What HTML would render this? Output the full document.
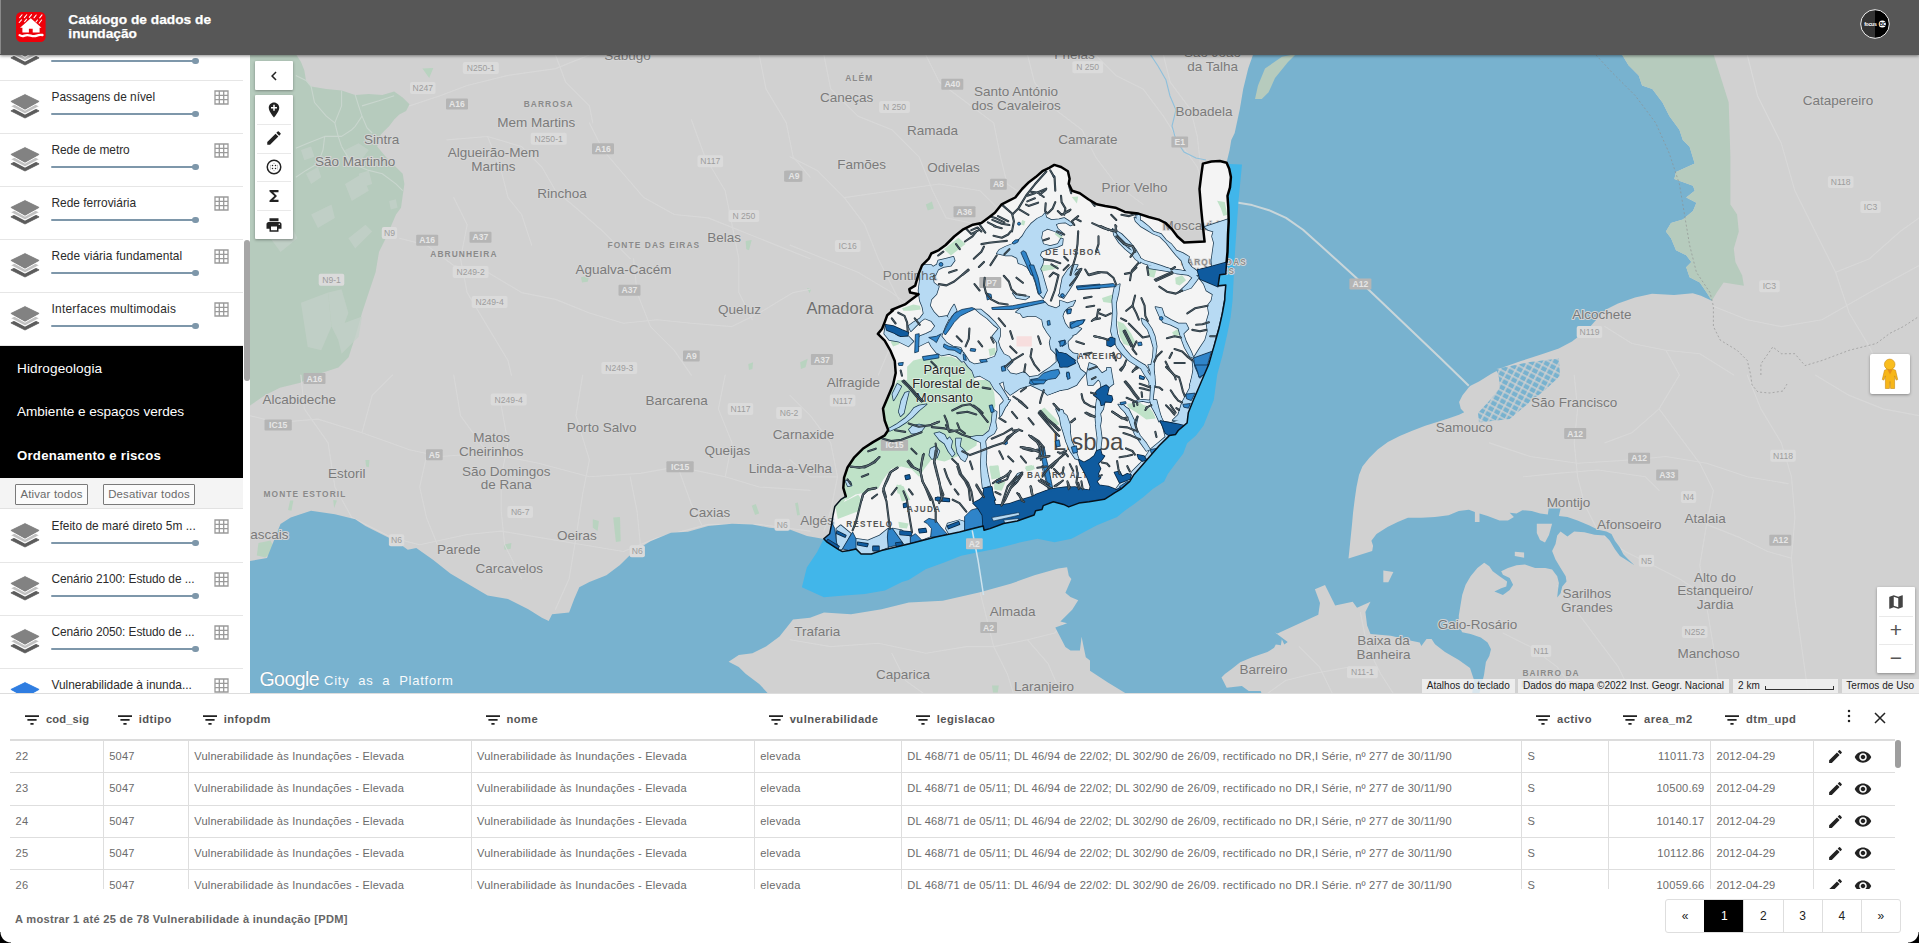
<!DOCTYPE html>
<html lang="pt">
<head>
<meta charset="utf-8">
<title>Catálogo de dados de inundação</title>
<style>
*{box-sizing:border-box;margin:0;padding:0}
html,body{width:1919px;height:943px;overflow:hidden;background:#fff;font-family:"Liberation Sans",sans-serif;}
body{position:relative}
#hdr{position:absolute;left:0;top:0;width:1919px;height:54.5px;background:#575757;z-index:20;box-shadow:0 1px 3px rgba(0,0,0,.45)}
#hdr .edge{position:absolute;left:0;top:0;width:1px;height:54px;background:#8a8a8a}
#logo{position:absolute;left:16.2px;top:11.7px;width:29.6px;height:30px}
#title{position:absolute;left:68.3px;top:13.4px;color:#fff;font-weight:bold;font-size:13.7px;line-height:14.1px;letter-spacing:.03px;-webkit-text-stroke:.25px #fff}
#avatar{position:absolute;left:1860px;top:9px;width:30px;height:30px}
/* sidebar */
#side{position:absolute;left:0;top:54px;width:243px;height:639px;background:#fff;overflow:hidden;z-index:5}
#sbar{position:absolute;left:243px;top:54px;width:7px;height:639px;background:#fff;z-index:5}
#sbar i{position:absolute;left:1px;top:186px;width:6px;height:141px;border-radius:3px;background:#a6a6a6}
.row{position:absolute;left:0;width:243px;height:53px;border-bottom:1px solid #e6e6e6;background:#fff}
.row .lay{position:absolute;left:10px;top:13.2px;width:30px;height:25px;overflow:visible}
.row .nm{position:absolute;left:51.5px;top:9px;font-size:11.9px;line-height:15px;color:#2b2b2b;white-space:nowrap;letter-spacing:0}
.row .sl{position:absolute;left:51px;top:32px;width:144px;height:2px;background:#7e97aa;border-radius:1px}
.row .sl:after{content:"";position:absolute;right:-3.5px;top:-2.2px;width:6.4px;height:6.4px;border-radius:50%;background:#7e97aa}
.row .gr{position:absolute;left:214px;top:9px;width:15px;height:15px}
#cats{position:absolute;left:0;top:292px;width:243px;height:132px;background:#000;color:#fff}
#cats div{position:absolute;left:17px;font-size:13.6px;line-height:16px;white-space:nowrap;letter-spacing:.15px}
#btns{position:absolute;left:0;top:424px;width:243px;height:31px;background:#f4f4f4;border-bottom:1px solid #e2e2e2}
#btns span{position:absolute;top:5.5px;height:21.5px;border:1px solid #7a7a7a;border-radius:1px;font-size:11.4px;line-height:19px;color:#6a6a6a;text-align:center;background:#fbfbfb;letter-spacing:.17px}
/* map */
#map{position:absolute;left:250px;top:54px;width:1669px;height:639px;background:#cfcfcf;overflow:hidden}
/* table */
#tbl{position:absolute;left:0;top:693px;width:1919px;height:250px;background:#fff;border-top:1px solid #ddd;z-index:10}
.th{position:absolute;top:12px;height:26px;white-space:nowrap}
.th .fi{position:absolute;left:0;top:8.5px;width:14px;height:10px}
.th span{position:absolute;left:21px;top:5.5px;font-size:11.2px;line-height:14px;font-weight:bold;color:#555;letter-spacing:.45px}
.dots{position:absolute;left:1847px;top:15px;width:4px;height:14px}
.cls{position:absolute;left:1874px;top:17.5px;width:12px;height:12px}
#tb{position:absolute;left:10px;top:45px;width:1885px;height:150px;border-top:2px solid #dcdcdc;overflow:hidden}
.tr{position:absolute;left:0;width:1885px;height:32.33px;border-bottom:1px solid #dedede}
.td{position:absolute;top:0;height:32.33px;border-left:1px solid #dedede;padding:0 5.5px;font-size:11.1px;line-height:30px;color:#6b6b6b;white-space:nowrap;overflow:hidden;letter-spacing:.22px}
.tr .td:first-child{border-left:none}
.td.r{text-align:right}
.pen{position:absolute;left:13px;top:7px;width:17px;height:17px}
.eye{position:absolute;left:40px;top:6.5px;width:18px;height:18px}
#tsb{position:absolute;left:1895px;top:46px;width:6px;height:150px}
#tsb i{position:absolute;left:0;top:0;width:6px;height:28px;border-radius:3px;background:#9e9e9e}
#info{position:absolute;left:15px;top:218px;font-size:11.1px;line-height:14px;font-weight:bold;color:#666;letter-spacing:.3px;white-space:nowrap}
#pg{position:absolute;left:1665px;top:204.5px;width:236px;height:34px;border:1px solid #dedede;border-radius:3px;display:flex;overflow:hidden}
#pg span{flex:1;border-left:1px solid #dedede;font-size:12px;line-height:32px;text-align:center;color:#222}
#pg span:first-child{border-left:none}
#pg span.on{background:#000;color:#fff;border-color:#000}
.cnr{position:absolute;bottom:0;width:11px;height:11px;background:radial-gradient(circle at 100% 0,rgba(0,0,0,0) 10px,#000 11px)}
.cnr.r{background:radial-gradient(circle at 0 0,rgba(0,0,0,0) 10px,#000 11px)}

.mbtn{position:absolute;background:#fff;box-shadow:0 1px 3px rgba(0,0,0,.35);border-radius:1px}
.mbtn i{position:absolute;width:18px;height:18px;display:block}
.mbtn i svg{width:18px;height:18px;display:block}
.mbtn b{position:absolute;left:2px;right:2px;height:1px;background:#e9e9e9}
.mbtn .zp{position:absolute;left:0;width:38px;height:28.700px;text-align:center;font-size:21px;line-height:27px;color:#555;font-family:"Liberation Sans",sans-serif}
.attr{position:absolute;top:625px;height:14px;background:rgba(245,245,245,.78);font-size:10px;line-height:14px;color:#222;text-align:center;white-space:nowrap;letter-spacing:.05px}
.attr u{display:inline-block;width:69px;height:4px;border:1px solid #333;border-top:none;margin-left:2px;vertical-align:-1px}

</style>
</head>
<body>
<div id="hdr"><div class="edge"></div>
<svg id="logo" viewBox="0 0 29.6 30"><rect x="0" y="0" width="29.6" height="30" rx="5.2" fill="#ee0009"/>
<g stroke="#fff" stroke-width="1.05" stroke-linecap="round"><path d="M6 2.700L3.700 5.600M10.700 2.700L8.400 5.600M15.500 2.600L13.300 5.400M20.200 3L18 5.800M26 2.900L23.700 5.900M5.500 7.800L3.200 10.500M10.600 7.200L8.600 9.600M21.500 8L20 9.900M25.600 8L23.200 11.200"/></g>
<path d="M14.800 6.200L25.500 15.700H23.600V20.500H16.700V16.700H12.900V20.500H6.400V15.700H4.050Z" fill="#fff"/>
<path d="M3.600 23.100Q6 24.700 8.500 23.600T14.700 23.600T20.900 23.600T26.500 23" fill="none" stroke="#fff" stroke-width="2.3" stroke-linecap="round"/></svg>
<div id="title">Catálogo de dados de<br>inundação</div>
<svg id="avatar" viewBox="0 0 30 30"><defs><clipPath id="avc"><circle cx="15" cy="15" r="14.3"/></clipPath></defs>
<g clip-path="url(#avc)"><rect width="15" height="30" fill="#333"/><rect x="15" width="15" height="30" fill="#000"/></g>
<circle cx="15" cy="15" r="14.3" fill="none" stroke="#fff" stroke-width=".9"/>
<text x="4.2" y="16.6" font-size="5.2" font-weight="bold" fill="#fff" font-family="Liberation Sans, sans-serif" letter-spacing="-.3">focus</text>
<circle cx="22.3" cy="15" r="3.6" fill="#fff"/><text x="19.6" y="16.7" font-size="4.8" font-weight="bold" fill="#000" font-family="Liberation Sans, sans-serif" letter-spacing="-.4">BC</text></svg>
</div>

<div id="side">
<div class="row" style="top:-26px"><svg class="lay" viewBox="0 0 30 25"><path d="M15 9.6L.9 16.9 15 24 29.1 16.9z" fill="#5c5c5c" stroke="#5c5c5c" stroke-width=".8" stroke-linejoin="round"/><path d="M15 4.6L.2 12.2 15 20 29.8 12.2z" fill="#c2c2c2" stroke="#fff" stroke-width="1.2" stroke-linejoin="round"/><path d="M15 -.2L-.2 7.4 15 16 30.2 7.4z" fill="#828282" stroke="#fff" stroke-width="1.3" stroke-linejoin="round"/><path d="M15 .6L.9 7.4 15 15.2 29.1 7.4z" fill="#828282" stroke="#828282" stroke-width=".8" stroke-linejoin="round"/></svg><div class="nm" style="letter-spacing:0px"></div><div class="sl"></div><svg class="gr" viewBox="0 0 15 15"><path d="M1 1h13v13H1zM1 5.3h13M1 9.7h13M5.3 1v13M9.7 1v13" fill="none" stroke="#9a9a9a" stroke-width="1.3"/></svg></div>
<div class="row" style="top:27px"><svg class="lay" viewBox="0 0 30 25"><path d="M15 9.6L.9 16.9 15 24 29.1 16.9z" fill="#5c5c5c" stroke="#5c5c5c" stroke-width=".8" stroke-linejoin="round"/><path d="M15 4.6L.2 12.2 15 20 29.8 12.2z" fill="#c2c2c2" stroke="#fff" stroke-width="1.2" stroke-linejoin="round"/><path d="M15 -.2L-.2 7.4 15 16 30.2 7.4z" fill="#828282" stroke="#fff" stroke-width="1.3" stroke-linejoin="round"/><path d="M15 .6L.9 7.4 15 15.2 29.1 7.4z" fill="#828282" stroke="#828282" stroke-width=".8" stroke-linejoin="round"/></svg><div class="nm" style="letter-spacing:-0.01px">Passagens de nível</div><div class="sl"></div><svg class="gr" viewBox="0 0 15 15"><path d="M1 1h13v13H1zM1 5.3h13M1 9.7h13M5.3 1v13M9.7 1v13" fill="none" stroke="#9a9a9a" stroke-width="1.3"/></svg></div>
<div class="row" style="top:80px"><svg class="lay" viewBox="0 0 30 25"><path d="M15 9.6L.9 16.9 15 24 29.1 16.9z" fill="#5c5c5c" stroke="#5c5c5c" stroke-width=".8" stroke-linejoin="round"/><path d="M15 4.6L.2 12.2 15 20 29.8 12.2z" fill="#c2c2c2" stroke="#fff" stroke-width="1.2" stroke-linejoin="round"/><path d="M15 -.2L-.2 7.4 15 16 30.2 7.4z" fill="#828282" stroke="#fff" stroke-width="1.3" stroke-linejoin="round"/><path d="M15 .6L.9 7.4 15 15.2 29.1 7.4z" fill="#828282" stroke="#828282" stroke-width=".8" stroke-linejoin="round"/></svg><div class="nm" style="letter-spacing:-0.04px">Rede de metro</div><div class="sl"></div><svg class="gr" viewBox="0 0 15 15"><path d="M1 1h13v13H1zM1 5.3h13M1 9.7h13M5.3 1v13M9.7 1v13" fill="none" stroke="#9a9a9a" stroke-width="1.3"/></svg></div>
<div class="row" style="top:133px"><svg class="lay" viewBox="0 0 30 25"><path d="M15 9.6L.9 16.9 15 24 29.1 16.9z" fill="#5c5c5c" stroke="#5c5c5c" stroke-width=".8" stroke-linejoin="round"/><path d="M15 4.6L.2 12.2 15 20 29.8 12.2z" fill="#c2c2c2" stroke="#fff" stroke-width="1.2" stroke-linejoin="round"/><path d="M15 -.2L-.2 7.4 15 16 30.2 7.4z" fill="#828282" stroke="#fff" stroke-width="1.3" stroke-linejoin="round"/><path d="M15 .6L.9 7.4 15 15.2 29.1 7.4z" fill="#828282" stroke="#828282" stroke-width=".8" stroke-linejoin="round"/></svg><div class="nm" style="letter-spacing:0px">Rede ferroviária</div><div class="sl"></div><svg class="gr" viewBox="0 0 15 15"><path d="M1 1h13v13H1zM1 5.3h13M1 9.7h13M5.3 1v13M9.7 1v13" fill="none" stroke="#9a9a9a" stroke-width="1.3"/></svg></div>
<div class="row" style="top:186px"><svg class="lay" viewBox="0 0 30 25"><path d="M15 9.6L.9 16.9 15 24 29.1 16.9z" fill="#5c5c5c" stroke="#5c5c5c" stroke-width=".8" stroke-linejoin="round"/><path d="M15 4.6L.2 12.2 15 20 29.8 12.2z" fill="#c2c2c2" stroke="#fff" stroke-width="1.2" stroke-linejoin="round"/><path d="M15 -.2L-.2 7.4 15 16 30.2 7.4z" fill="#828282" stroke="#fff" stroke-width="1.3" stroke-linejoin="round"/><path d="M15 .6L.9 7.4 15 15.2 29.1 7.4z" fill="#828282" stroke="#828282" stroke-width=".8" stroke-linejoin="round"/></svg><div class="nm" style="letter-spacing:0.08px">Rede viária fundamental</div><div class="sl"></div><svg class="gr" viewBox="0 0 15 15"><path d="M1 1h13v13H1zM1 5.3h13M1 9.7h13M5.3 1v13M9.7 1v13" fill="none" stroke="#9a9a9a" stroke-width="1.3"/></svg></div>
<div class="row" style="top:239px"><svg class="lay" viewBox="0 0 30 25"><path d="M15 9.6L.9 16.9 15 24 29.1 16.9z" fill="#5c5c5c" stroke="#5c5c5c" stroke-width=".8" stroke-linejoin="round"/><path d="M15 4.6L.2 12.2 15 20 29.8 12.2z" fill="#c2c2c2" stroke="#fff" stroke-width="1.2" stroke-linejoin="round"/><path d="M15 -.2L-.2 7.4 15 16 30.2 7.4z" fill="#828282" stroke="#fff" stroke-width="1.3" stroke-linejoin="round"/><path d="M15 .6L.9 7.4 15 15.2 29.1 7.4z" fill="#828282" stroke="#828282" stroke-width=".8" stroke-linejoin="round"/></svg><div class="nm" style="letter-spacing:0.26px">Interfaces multimodais</div><div class="sl"></div><svg class="gr" viewBox="0 0 15 15"><path d="M1 1h13v13H1zM1 5.3h13M1 9.7h13M5.3 1v13M9.7 1v13" fill="none" stroke="#9a9a9a" stroke-width="1.3"/></svg></div>
<div class="row" style="top:456px"><svg class="lay" viewBox="0 0 30 25"><path d="M15 9.6L.9 16.9 15 24 29.1 16.9z" fill="#5c5c5c" stroke="#5c5c5c" stroke-width=".8" stroke-linejoin="round"/><path d="M15 4.6L.2 12.2 15 20 29.8 12.2z" fill="#c2c2c2" stroke="#fff" stroke-width="1.2" stroke-linejoin="round"/><path d="M15 -.2L-.2 7.4 15 16 30.2 7.4z" fill="#828282" stroke="#fff" stroke-width="1.3" stroke-linejoin="round"/><path d="M15 .6L.9 7.4 15 15.2 29.1 7.4z" fill="#828282" stroke="#828282" stroke-width=".8" stroke-linejoin="round"/></svg><div class="nm" style="letter-spacing:0.03px">Efeito de maré direto 5m ...</div><div class="sl"></div><svg class="gr" viewBox="0 0 15 15"><path d="M1 1h13v13H1zM1 5.3h13M1 9.7h13M5.3 1v13M9.7 1v13" fill="none" stroke="#9a9a9a" stroke-width="1.3"/></svg></div>
<div class="row" style="top:509px"><svg class="lay" viewBox="0 0 30 25"><path d="M15 9.6L.9 16.9 15 24 29.1 16.9z" fill="#5c5c5c" stroke="#5c5c5c" stroke-width=".8" stroke-linejoin="round"/><path d="M15 4.6L.2 12.2 15 20 29.8 12.2z" fill="#c2c2c2" stroke="#fff" stroke-width="1.2" stroke-linejoin="round"/><path d="M15 -.2L-.2 7.4 15 16 30.2 7.4z" fill="#828282" stroke="#fff" stroke-width="1.3" stroke-linejoin="round"/><path d="M15 .6L.9 7.4 15 15.2 29.1 7.4z" fill="#828282" stroke="#828282" stroke-width=".8" stroke-linejoin="round"/></svg><div class="nm" style="letter-spacing:-0.07px">Cenário 2100: Estudo de ...</div><div class="sl"></div><svg class="gr" viewBox="0 0 15 15"><path d="M1 1h13v13H1zM1 5.3h13M1 9.7h13M5.3 1v13M9.7 1v13" fill="none" stroke="#9a9a9a" stroke-width="1.3"/></svg></div>
<div class="row" style="top:562px"><svg class="lay" viewBox="0 0 30 25"><path d="M15 9.6L.9 16.9 15 24 29.1 16.9z" fill="#5c5c5c" stroke="#5c5c5c" stroke-width=".8" stroke-linejoin="round"/><path d="M15 4.6L.2 12.2 15 20 29.8 12.2z" fill="#c2c2c2" stroke="#fff" stroke-width="1.2" stroke-linejoin="round"/><path d="M15 -.2L-.2 7.4 15 16 30.2 7.4z" fill="#828282" stroke="#fff" stroke-width="1.3" stroke-linejoin="round"/><path d="M15 .6L.9 7.4 15 15.2 29.1 7.4z" fill="#828282" stroke="#828282" stroke-width=".8" stroke-linejoin="round"/></svg><div class="nm" style="letter-spacing:-0.07px">Cenário 2050: Estudo de ...</div><div class="sl"></div><svg class="gr" viewBox="0 0 15 15"><path d="M1 1h13v13H1zM1 5.3h13M1 9.7h13M5.3 1v13M9.7 1v13" fill="none" stroke="#9a9a9a" stroke-width="1.3"/></svg></div>
<div class="row" style="top:615px"><svg class="lay" viewBox="0 0 30 25"><path d="M15 9.6L.9 16.9 15 24 29.1 16.9z" fill="#3a3a3a" stroke="#3a3a3a" stroke-width=".8" stroke-linejoin="round"/><path d="M15 4.6L.2 12.2 15 20 29.8 12.2z" fill="#f0c36a" stroke="#fff" stroke-width="1.2" stroke-linejoin="round"/><path d="M15 -.2L-.2 7.4 15 16 30.2 7.4z" fill="#2f7de1" stroke="#fff" stroke-width="1.3" stroke-linejoin="round"/><path d="M15 .6L.9 7.4 15 15.2 29.1 7.4z" fill="#2f7de1" stroke="#2f7de1" stroke-width=".8" stroke-linejoin="round"/></svg><div class="nm" style="letter-spacing:0px">Vulnerabilidade à inunda...</div><div class="sl"></div><svg class="gr" viewBox="0 0 15 15"><path d="M1 1h13v13H1zM1 5.3h13M1 9.7h13M5.3 1v13M9.7 1v13" fill="none" stroke="#9a9a9a" stroke-width="1.3"/></svg></div>
<div id="cats"><div style="top:15px;letter-spacing:.1px">Hidrogeologia</div><div style="top:58px;letter-spacing:-.03px">Ambiente e espaços verdes</div><div style="top:102px;font-weight:bold;font-size:13.2px;letter-spacing:.24px">Ordenamento e riscos</div></div>
<div id="btns"><span style="left:15px;width:73px">Ativar todos</span><span style="left:103px;width:92px">Desativar todos</span></div>
</div>
<div id="sbar"><i></i></div>

<div id="map">
<svg id="msvg" width="1669" height="639" viewBox="250 54 1669 639" style="position:absolute;left:0;top:0" font-family="Liberation Sans, sans-serif">
<rect x="250" y="54" width="1669" height="639" fill="#d1d1d1"/>
<polygon points="250.0,54.0 295.8,54.0 300.9,61.8 304.3,70.3 306.0,80.4 311.1,86.4 326.3,88.9 341.6,90.6 355.2,94.9 368.8,94.0 382.3,94.9 394.2,91.5 402.7,97.4 409.5,104.2 406.1,111.0 399.3,114.4 394.2,119.5 389.1,126.3 384.0,131.3 380.6,134.7 377.2,146.6 385.7,156.8 395.9,167.0 402.7,173.8 404.4,183.9 402.7,195.8 401.0,207.7 396.0,214.5 385.8,238.3 379.0,251.9 375.6,272.2 368.8,292.6 362.0,313.0 355.2,336.7 348.6,357.2 338.4,367.4 315.5,375.0 300.3,382.7 279.9,387.8 264.6,395.4 250.0,405.6" fill="#b6cbbd" />
<g fill="#c4d1c9" opacity=".75">
<polygon points="345.0,150.0 358.6,143.2 368.8,150.0 358.6,163.6 348.4,167.0"/>
<polygon points="300.9,150.0 311.1,146.6 314.5,156.8 304.3,160.2"/>
<polygon points="306.0,173.8 317.9,167.0 321.3,177.2 311.1,183.9"/>
<polygon points="358.6,173.8 368.8,170.4 372.2,183.9 362.0,187.3"/>
<polygon points="389.1,200.9 395.9,199.2 397.6,207.7 390.8,209.4"/>
<polygon points="328.1,292.6 341.6,289.2 348.4,313.0 338.3,340.1 331.5,326.6"/>
<polygon points="300.9,302.8 328.1,292.6 331.5,326.6 321.3,350.3 307.7,346.9"/>
<polygon points="334.9,326.6 362.0,316.4 358.6,336.7 341.6,353.7"/>
<polygon points="270.4,238.3 290.7,224.7 297.5,238.3 280.5,251.9"/>
<polygon points="311.1,214.5 331.5,204.4 334.9,217.9 317.9,228.1"/>
<polygon points="345.0,184.0 362.0,173.8 368.8,190.8 351.8,201.0"/>
<polygon points="348.4,238.3 365.4,224.7 372.2,231.5 355.2,248.5"/>
</g>
<g fill="none" stroke="#c9d6ce" stroke-width="1.1" stroke-linejoin="round">
<polyline points="295.8,75.4 306.0,80.4 311.1,86.4 314.5,102.5 326.3,116.1 334.8,122.9 338.2,136.4 341.6,146.6"/>
<polyline points="341.6,90.6 341.6,105.9 334.8,122.9"/>
<polyline points="355.2,94.9 358.6,105.9 362.0,116.1 355.2,126.3 351.8,129.7 341.6,136.4 324.7,136.4 307.7,143.2 295.8,148.3"/>
<polyline points="362.0,105.9 378.9,100.8 394.2,95.7"/>
<polyline points="362.0,116.1 367.1,128.0 372.2,133.0"/>
<polyline points="341.6,146.6 351.8,163.6 368.8,170.4 382.3,173.8 395.9,183.9 402.7,190.7"/>
<polyline points="324.7,136.4 323.0,150.0 317.9,163.6 306.0,170.4 295.8,177.2"/>
</g>
<g fill="#b9d3c0">
<polygon points="422.4,68.6 433.3,67.9 429.2,78.1"/>
<polygon points="925.8,204.4 931.9,201.6 933.9,208.4 927.8,210.5"/>
<polygon points="807.0,287.9 811.0,289.2 809.7,293.3"/>
<polygon points="800.2,362.2 807.7,358.8 805.6,367.3 800.9,369.0"/>
<polygon points="365.4,459.9 369.5,459.9 368.8,467.3 366.1,466.6"/>
<polygon points="290.1,500.6 293.4,500.6 291.4,510.8 288.0,510.1"/>
<polygon points="333.2,499.9 336.9,500.6 334.2,508.1"/>
<polygon points="592.8,519.3 598.9,521.0 597.6,531.1 592.8,527.7"/>
<polygon points="613.2,517.6 620.0,516.9 620.7,541.3 615.9,542.0"/>
<polygon points="503.9,544.7 511.4,543.0 510.7,548.8 504.6,549.8"/>
<polygon points="751.7,505.7 755.8,504.0 759.2,513.5 755.1,514.9"/>
<polygon points="795.1,503.3 797.9,502.6 799.9,514.9 797.2,515.5"/>
<polygon points="745.6,241.0 751.7,240.0 749.0,250.2 746.3,249.2"/>
<polygon points="581.0,277.3 589.4,275.6 587.7,281.7 582.0,282.4"/>
<polygon points="748.3,363.9 753.1,362.2 752.4,369.0 749.0,370.0"/>
<polygon points="258.5,543.0 270.4,540.6 275.5,549.8 265.3,557.6 256.8,555.6"/>
<polygon points="992.0,685.6 998.8,685.6 997.7,692.4 993.0,692.4"/>
</g>
<g fill="none" stroke="#dadada" stroke-width="1.15" stroke-linejoin="round" stroke-linecap="round" opacity=".85">
<polyline points="409.5,105.9 440.1,95.7 467.2,85.5 508.0,75.4 555.5,68.6 589.4,55.0"/>
<polyline points="446.9,139.9 487.6,136.5 521.6,146.6 541.9,167.0 555.5,190.8 575.9,207.7 603.0,231.5 630.2,258.7"/>
<polyline points="399.4,238.3 426.5,245.1 453.7,265.5 487.6,272.2 521.6,292.6 555.5,299.4 589.4,313.0 623.4,323.2 657.3,319.8 691.3,323.2 732.0,326.6 759.2,313.0 793.1,292.6 810.1,289.2"/>
<polyline points="589.4,122.9 603.0,150.0 623.4,173.8 643.8,197.6 674.3,214.5 708.2,217.9 742.2,231.5 776.1,245.1 810.1,258.7"/>
<polyline points="453.7,197.6 467.2,224.7 460.5,258.7 467.2,292.6 487.6,326.6 508.0,360.5 511.4,375.1"/>
<polyline points="633.6,258.7 637.0,292.6 650.5,326.6 674.3,350.3 691.3,375.1"/>
<polyline points="691.3,119.5 704.9,156.8 725.2,190.8 732.0,224.7 738.8,258.7 738.8,292.6 752.4,319.8"/>
<polyline points="555.5,55.0 565.7,82.2 589.4,105.9 592.8,122.9"/>
<polyline points="759.2,55.0 766.0,88.9 786.3,122.9 793.1,156.8 810.1,177.2"/>
<polyline points="487.6,136.5 501.2,170.4 508.0,197.6 521.6,214.5 531.7,245.1"/>
<polyline points="250.0,415.7 277.2,422.5 317.9,419.1 362.0,432.7 409.5,449.7 440.1,456.5 487.6,453.1 538.5,463.3 589.4,476.8 640.4,473.4 677.7,466.6 725.2,476.8 759.2,487.0 810.1,490.4"/>
<polyline points="300.9,375.0 304.3,408.9 328.1,442.9 334.9,487.0 351.8,517.6"/>
<polyline points="351.8,517.6 392.6,537.9 419.7,544.7 467.2,534.5 501.2,531.1 541.9,537.9 582.7,544.7 623.4,551.5 657.3,537.9 708.2,524.4 759.2,524.4 810.1,531.1"/>
<polyline points="426.5,456.5 419.7,487.0 426.5,517.6 440.1,551.5"/>
<polyline points="501.2,405.5 508.0,442.9 501.2,476.8 501.2,510.8 504.6,544.7 521.6,578.7"/>
<polyline points="582.7,375.0 575.9,415.7 589.4,459.9 582.7,493.8 575.9,537.9 569.1,578.7 555.5,609.2"/>
<polyline points="630.2,476.8 637.0,510.8 640.4,544.7"/>
<polyline points="677.7,466.6 691.3,504.0 701.5,524.4"/>
<polyline points="725.2,375.0 718.4,408.9 732.0,442.9 725.2,476.8"/>
<polyline points="362.0,432.7 372.2,395.4 392.6,375.0"/>
<polyline points="453.7,375.0 460.5,415.7 487.6,453.1"/>
<polyline points="790.0,156.8 817.2,170.4 844.3,197.6 864.7,224.7 878.3,258.7 891.8,285.8 905.4,313.0 891.8,343.5 878.3,375.1"/>
<polyline points="823.9,55.0 830.7,88.9 857.9,116.1 891.8,129.7 919.0,156.8 932.6,190.8 946.1,217.9 980.1,224.7"/>
<polyline points="925.8,55.0 939.4,82.2 966.5,102.5 993.7,122.9 1000.5,156.8 1007.2,184.0 1027.6,197.6"/>
<polyline points="1027.6,55.0 1034.4,82.2 1054.8,109.3 1081.9,129.7 1095.5,156.8 1115.9,184.0 1143.0,204.4"/>
<polyline points="1095.5,55.0 1115.9,75.4 1143.0,88.9 1163.4,116.1 1180.4,143.3 1197.3,167.0 1207.5,197.6"/>
<polyline points="1163.4,55.0 1170.2,82.2 1190.5,109.3 1197.3,136.5 1200.7,167.0"/>
<polyline points="790.0,245.1 823.9,258.7 857.9,272.2 891.8,292.6 919.0,313.0"/>
<polyline points="844.3,197.6 891.8,190.8 939.4,184.0 980.1,190.8 1000.5,211.1"/>
<polyline points="790.0,395.4 810.4,415.7 830.7,442.9 837.5,476.8 830.7,510.8 823.9,531.1"/>
<polyline points="790.0,459.9 810.4,476.8 837.5,476.8"/>
<polyline points="980.1,592.2 986.9,619.4 993.7,646.6 1007.2,673.7 1014.0,695.1"/>
<polyline points="790.0,639.8 830.7,646.6 878.3,643.2 925.8,653.3 966.5,646.6 993.7,646.6"/>
<polyline points="993.7,646.6 1027.6,639.8 1054.8,633.0 1075.1,612.6"/>
<polyline points="891.8,653.3 905.4,680.5 925.8,695.1"/>
<polyline points="1027.6,639.8 1048.0,663.5 1061.6,695.1"/>
<polyline points="1299.2,646.6 1319.5,666.9 1333.1,695.1"/>
<polyline points="1265.2,695.1 1285.6,680.5 1312.7,673.7 1350.1,666.9"/>
<polyline points="1604.8,326.6 1631.9,343.5 1665.9,350.3 1699.8,353.7 1733.8,375.1"/>
<polyline points="1665.9,350.3 1679.4,375.1"/>
<polyline points="1713.4,306.2 1747.3,319.8 1781.3,326.6 1822.0,319.8 1869.5,292.6 1919.1,265.5"/>
<polyline points="1747.3,55.0 1757.5,95.7 1781.3,143.3 1794.9,190.8 1815.2,231.5 1835.6,272.2 1849.2,313.0 1869.5,346.9 1883.1,375.1"/>
<polyline points="1835.6,272.2 1869.5,258.7 1900.1,231.5 1919.1,217.9"/>
<polyline points="1574.2,375.0 1577.6,408.9 1574.2,442.9 1577.6,476.8 1584.4,504.0"/>
<polyline points="1489.4,442.9 1530.1,456.5 1577.6,463.3 1631.9,459.9 1665.9,456.5 1706.6,463.3 1747.3,476.8 1788.1,483.6"/>
<polyline points="1523.3,476.8 1557.2,473.4 1598.0,470.0 1645.5,476.8 1659.1,490.4"/>
<polyline points="1659.1,408.9 1679.4,436.1 1699.8,463.3 1713.4,490.4 1706.6,524.4 1699.8,565.1 1706.6,605.8 1713.4,646.6 1720.2,695.1"/>
<polyline points="1679.4,375.0 1659.1,408.9 1631.9,432.7 1604.8,442.9"/>
<polyline points="1706.6,524.4 1740.5,537.9 1767.7,551.5 1791.5,558.3"/>
<polyline points="1747.3,375.0 1760.9,408.9 1781.3,442.9 1791.5,476.8 1794.9,517.6 1791.5,558.3 1794.9,599.0 1801.6,646.6 1808.4,695.1"/>
<polyline points="1584.4,504.0 1598.0,531.1 1625.1,551.5 1652.3,565.1 1679.4,578.7 1699.8,592.2"/>
<polyline points="1557.2,585.5 1577.6,612.6 1598.0,639.8 1618.3,666.9 1631.9,695.1"/>
<polyline points="1502.9,633.0 1530.1,646.6 1557.2,666.9 1577.6,695.1"/>
<polyline points="1360.4,612.6 1367.2,646.6 1380.7,673.7 1394.3,695.1"/>
<polyline points="1815.2,375.0 1849.2,395.4 1883.1,408.9 1919.1,415.7"/>
</g>
<polygon points="250.0,561.0 267.0,558.0 280.5,524.0 290.7,517.6 311.0,510.8 334.9,514.2 355.2,519.3 365.4,526.0 385.8,536.2 396.0,541.3 407.8,549.8 416.3,548.1 433.3,560.0 450.3,573.6 470.6,585.5 487.6,595.6 508.0,599.0 528.3,609.2 541.9,617.7 548.7,621.1 552.1,614.3 569.1,612.6 574.2,599.0 579.3,587.2 589.4,582.1 606.4,575.3 620.0,565.1 633.6,551.5 650.5,541.3 670.9,532.8 687.9,531.8 708.2,526.0 732.0,523.7 752.4,524.4 769.4,527.7 789.7,529.4 807.0,536.0 824.0,539.0 900.0,520.0 1100.0,470.0 1190.0,380.0 1215.0,250.0 1226.0,165.0 1229.6,150.0 1231.3,140.0 1234.7,133.1 1239.8,109.3 1243.2,88.9 1248.2,68.6 1253.3,54.0 1621.7,54.0 1628.5,65.2 1638.7,75.4 1642.1,85.5 1652.3,88.9 1662.5,102.5 1669.3,116.1 1679.4,129.7 1682.8,139.9 1689.6,146.7 1694.7,163.6 1676.0,172.1 1674.3,178.9 1693.0,185.7 1694.7,190.8 1686.2,197.6 1696.4,202.7 1693.0,211.1 1682.8,219.6 1671.0,223.0 1665.9,231.5 1671.0,238.3 1676.0,250.2 1686.2,255.3 1691.3,262.1 1686.2,267.2 1689.6,277.3 1699.8,282.4 1706.6,292.6 1712.3,300.9 1701.0,295.8 1692.8,293.3 1674.0,295.0 1652.0,293.8 1635.0,297.5 1618.0,303.4 1606.0,309.4 1597.8,317.9 1589.0,328.0 1580.8,334.8 1572.0,341.6 1558.8,348.4 1541.8,354.3 1521.0,361.0 1504.0,367.0 1491.0,373.9 1479.0,381.5 1470.5,385.7 1469.3,386.8 1462.5,395.3 1459.1,402.0 1460.8,408.8 1464.2,412.2 1459.1,414.8 1449.0,418.2 1438.8,421.6 1425.2,425.8 1411.6,430.9 1399.7,436.0 1387.9,441.9 1377.7,449.6 1369.2,458.0 1362.4,466.5 1359.0,475.0 1356.5,486.9 1354.8,498.8 1353.1,512.3 1351.9,525.4 1349.3,550.9 1348.5,558.5 1372.2,550.9 1373.1,545.8 1371.4,540.7 1376.5,533.9 1387.5,527.1 1397.7,522.1 1407.9,517.8 1421.4,517.8 1435.0,517.0 1448.6,515.3 1458.8,511.0 1468.9,509.8 1474.9,511.9 1474.9,522.1 1479.5,522.1 1479.5,513.6 1487.6,516.1 1499.5,520.4 1508.0,520.4 1513.9,517.0 1509.7,512.7 1516.5,513.6 1522.4,510.2 1531.7,511.0 1540.2,513.6 1547.8,514.4 1548.7,508.5 1560.6,508.5 1558.9,516.1 1567.4,517.0 1577.5,520.4 1589.4,525.4 1597.9,529.7 1606.4,531.4 1611.5,533.9 1614.9,540.7 1619.9,547.5 1623.3,554.3 1628.4,559.4 1634.4,565.3 1626.7,560.2 1619.9,556.0 1614.9,549.2 1609.8,540.7 1604.7,535.6 1594.5,534.8 1584.3,532.2 1574.1,531.4 1567.4,536.5 1560.6,531.4 1557.2,535.6 1555.5,544.1 1552.1,550.9 1555.5,559.4 1560.6,567.9 1565.7,576.3 1566.5,581.4 1562.3,586.5 1560.6,593.3 1557.2,597.6 1558.0,589.9 1558.9,583.1 1557.2,576.3 1552.1,569.6 1545.3,567.9 1535.1,567.9 1524.9,564.5 1516.5,565.3 1508.0,567.9 1501.2,571.3 1502.9,574.7 1509.7,578.0 1513.1,584.8 1509.7,589.9 1502.9,595.0 1494.4,591.6 1501.2,588.2 1506.3,586.5 1507.1,581.4 1499.5,576.3 1492.7,571.3 1489.3,566.2 1484.2,562.8 1477.4,567.9 1470.6,576.3 1465.6,584.8 1462.2,595.0 1460.5,605.2 1458.8,615.4 1458.8,625.6 1462.2,632.3 1470.6,634.0 1480.8,637.4 1487.6,642.5 1491.0,649.3 1489.3,656.1 1485.9,662.0 1484.0,675.0 1479.0,695.0 1472.0,695.0 1474.0,680.0 1470.0,668.0 1458.8,660.0 1445.0,652.0 1435.0,644.2 1431.6,639.1 1426.5,639.1 1421.4,645.9 1419.7,642.5 1411.3,640.8 1390.9,635.7 1370.5,634.0 1367.1,625.6 1365.4,612.0 1370.5,601.8 1357.0,607.7 1352.7,601.8 1335.2,605.4 1325.0,585.1 1314.9,589.3 1320.0,602.9 1318.3,614.7 1277.5,633.4 1275.0,632.6 1287.7,641.9 1284.3,644.4 1281.8,639.3 1280.9,645.3 1275.8,644.4 1274.1,647.8 1267.4,652.1 1252.1,657.2 1240.2,662.2 1231.7,669.0 1224.9,674.1 1221.5,677.5 1226.7,687.7 1241.9,686.0 1248.7,691.1 1260.6,691.1 1262.3,695.0 1128.2,695.0 1124.8,692.8 1107.9,682.6 1090.0,670.7 1090.0,660.6 1085.8,657.2 1083.3,645.3 1081.6,636.8 1079.9,650.4 1070.5,650.4 1065.4,647.0 1055.3,627.5 1067.1,623.2 1060.4,621.5 1072.2,609.7 1078.2,600.3 1070.5,596.9 1065.4,592.7 1071.4,579.1 1068.8,575.7 1067.1,567.2 1058.2,568.5 1034.4,575.3 1010.6,583.8 980.0,592.2 942.7,600.7 908.8,602.4 881.6,609.2 851.0,614.3 824.0,612.6 810.0,617.7 793.0,619.4 779.5,636.4 766.0,646.5 752.4,653.3 738.8,655.0 728.6,661.8 738.8,667.0 745.6,673.7 759.2,683.9 769.4,695.0 250.0,695.0" fill="#78b2cf" />
<polygon points="1383.3,570.4 1393.4,572.0 1388.3,582.3 1383.3,582.3" fill="#d1d1d1" />
<polygon points="1536.8,523.8 1552.1,523.8 1549.0,535.0 1545.0,542.4 1540.0,540.0 1536.8,533.0" fill="#d1d1d1" />
<polygon points="1514.8,551.7 1524.1,552.5 1524.1,557.7 1514.8,556.0" fill="#d1d1d1" />
<defs><pattern id="saltp" width="7" height="6" patternUnits="userSpaceOnUse" patternTransform="rotate(28)"><rect width="7" height="6" fill="#d1d1d1"/><rect x=".6" y=".6" width="5.6" height="4.6" fill="#78b2cf"/></pattern></defs>
<polygon points="1496.0,369.0 1530.0,362.0 1559.0,358.6 1560.0,376.0 1545.0,390.0 1530.0,402.0 1509.7,419.0 1479.0,422.5 1478.0,413.0 1490.0,400.0 1499.5,388.0 1499.0,378.0" fill="url(#saltp)" />
<polygon points="1621.7,54.0 1628.5,65.2 1638.7,75.4 1642.1,85.5 1652.3,88.9 1662.5,102.5 1669.3,116.1 1679.4,129.7 1682.8,139.9 1689.6,146.7 1694.7,163.6 1676.0,172.1 1674.3,178.9 1693.0,185.7 1694.7,190.8 1686.2,197.6 1696.4,202.7 1693.0,211.1 1682.8,219.6 1671.0,223.0 1665.9,231.5 1671.0,238.3 1676.0,250.2 1686.2,255.3 1691.3,262.1 1686.2,267.2 1689.6,277.3 1699.8,282.4 1706.6,292.6 1711.7,301.1 1716.8,292.6 1723.6,282.4 1743.9,285.8 1742.2,275.6 1735.4,262.1 1733.8,248.5 1738.8,231.5 1737.1,214.5 1730.4,204.4 1730.4,156.8 1728.7,102.5 1720.2,75.4 1713.4,54.0" fill="#b6cbbd" />
<polygon points="1255.0,99.0 1258.0,85.5 1265.0,68.6 1282.0,56.7 1296.0,54.0 1288.0,62.0 1275.0,78.0 1268.6,92.3 1261.8,99.0" fill="#b6cbbd" />
<polyline points="1150.0,54.0 1158.0,66.0 1166.0,80.0 1170.0,96.0 1176.0,110.0 1172.0,126.0 1176.0,140.0 1184.0,152.0 1196.0,158.0 1206.0,160.0" fill="none" stroke="#8fc0dc" stroke-width="1.1" />
<polyline points="1228.3,200.0 1236.8,202.6 1252.1,205.1 1269.0,210.2 1286.0,217.9 1303.0,229.7 1320.0,245.0 1336.9,260.3 1355.6,277.2 1440.0,357.7 1468.8,385.7" fill="none" stroke="#c9d6da" stroke-width="2" stroke-linejoin="round"/>
<polyline points="1596.0,55.0 1611.6,72.0 1635.3,95.7 1655.7,122.9 1669.3,153.4 1679.4,184.0 1684.5,214.5 1689.6,245.1 1696.4,272.2 1710.0,292.6 1713.4,306.2 1713.4,326.5 1720.2,340.1 1737.1,350.3 1747.3,360.5 1750.7,375.0 1752.0,385.0 1758.0,392.0 1770.0,393.0 1783.0,391.0 1787.0,384.0" fill="none" stroke="#8d8d8d" stroke-width="0.8" stroke-dasharray="2 2.2" opacity=".8"/>
<polyline points="1760.9,375.0 1760.9,363.9 1772.8,346.9 1781.3,353.7 1794.8,353.7 1805.0,365.6 1822.0,360.5 1849.2,350.3 1876.3,343.5 1889.9,333.3 1903.5,326.5 1919.0,316.4" fill="none" stroke="#8d8d8d" stroke-width="0.8" stroke-dasharray="2 2.2" opacity=".8"/>
<polygon points="1229.0,164.0 1242.0,164.4 1238.5,200.9 1235.0,251.8 1232.6,300.0 1230.7,317.0 1227.3,333.9 1222.3,356.0 1217.2,374.7 1213.8,400.0 1208.7,412.7 1203.6,425.5 1196.0,435.6 1187.1,443.3 1183.3,453.4 1175.6,463.6 1168.0,473.8 1164.2,481.4 1152.7,489.1 1143.8,496.7 1133.6,504.4 1124.7,510.7 1117.1,517.1 1096.9,525.2 1071.5,538.8 1054.5,542.2 1037.5,538.8 1020.6,542.2 995.1,548.9 978.1,552.3 961.2,555.7 944.2,562.5 925.6,569.3 908.6,580.0 902.0,582.1 885.0,590.5 864.7,593.9 844.3,595.6 823.9,597.3 801.9,587.2 806.8,567.6 817.0,552.3 822.9,540.5 900.0,520.0 1100.0,470.0 1190.0,380.0 1215.0,250.0" fill="#41b6ea" />
<polyline points="972.2,530.3 978.0,560.0 983.5,595.0" fill="none" stroke="#cfe3ee" stroke-width="1.5" />
<polygon points="891.4,310.0 905.0,304.4 911.8,299.3 918.6,294.2 910.1,292.5 909.3,289.1 915.2,285.7 918.6,273.9 922.0,265.4 928.8,258.6 931.3,253.5 938.9,250.1 945.7,245.0 954.2,236.5 962.7,229.7 972.9,224.7 981.4,223.0 988.1,217.9 994.9,212.8 1001.7,204.3 1008.5,200.9 1015.3,197.5 1022.1,189.0 1028.9,182.2 1035.7,177.1 1042.4,171.2 1049.2,167.8 1054.3,164.9 1061.1,167.0 1067.9,171.2 1069.6,178.8 1068.7,183.9 1072.1,190.7 1079.8,193.3 1088.3,199.2 1096.7,204.3 1105.2,206.0 1115.4,207.7 1124.8,211.9 1138.4,213.6 1148.6,217.0 1158.8,219.6 1165.6,223.0 1172.3,229.7 1177.4,236.5 1184.2,242.5 1204.6,241.6 1202.9,226.3 1201.2,209.4 1199.5,189.0 1201.2,175.4 1202.9,163.6 1211.4,161.5 1219.8,161.0 1226.6,162.7 1229.2,168.7 1230.9,177.1 1230.0,187.3 1227.5,195.8 1228.3,207.7 1228.7,221.3 1228.0,234.8 1227.5,251.8 1226.6,262.0 1225.8,273.9 1219.8,274.7 1218.1,285.7 1225.8,284.9 1224.9,295.9 1224.8,300.0 1222.3,313.6 1218.9,328.8 1214.6,344.1 1212.1,352.6 1208.7,364.5 1203.6,376.3 1198.5,388.2 1193.4,400.0 1188.3,412.7 1187.1,422.9 1178.2,430.5 1175.6,434.4 1169.3,435.6 1159.1,445.8 1150.2,456.0 1141.3,466.2 1133.6,475.1 1129.8,481.4 1120.9,489.1 1114.5,492.9 1110.7,495.4 1104.4,499.3 1089.1,501.8 1078.9,503.1 1068.7,506.9 1063.6,504.4 1053.4,501.8 1043.3,505.6 1042.0,509.4 1035.6,510.7 1034.1,515.0 1017.2,521.0 1003.6,523.5 990.0,528.6 984.1,530.3 983.2,526.0 973.1,528.6 959.5,532.0 947.6,534.5 935.7,537.1 922.2,540.5 908.6,543.9 895.0,547.2 881.4,550.6 871.3,554.0 861.1,554.0 856.0,548.9 849.2,550.6 842.4,551.5 839.0,549.8 827.1,542.2 823.8,538.8 829.7,533.7 831.4,525.2 833.1,515.0 834.8,506.5 840.7,499.7 845.8,496.3 843.3,487.9 844.1,477.7 847.5,467.5 854.3,457.3 862.8,448.8 873.0,442.1 884.8,435.3 888.2,430.2 884.7,420.5 883.0,408.6 888.0,396.7 893.1,384.8 895.7,373.0 894.8,361.1 890.6,350.9 884.7,340.7 877.9,333.9 882.1,328.8 884.7,322.1 887.2,315.3 893.1,310.2" fill="#f4f4f4" />
<text x="627.5" y="60.4" font-size="13.5" text-anchor="middle" fill="#767676" stroke="#d6d6d6" stroke-width="2.2" paint-order="stroke" stroke-linejoin="round" opacity=".95">Sabugo</text>
<rect x="462.8" y="61.9" width="36.0" height="12" rx="2" fill="#dbdbdb"/><text x="480.8" y="71.0" font-size="8.6" text-anchor="middle" fill="#9d9d9d">N250-1</text>
<rect x="410.0" y="81.9" width="25.6" height="12" rx="2" fill="#dbdbdb"/><text x="422.8" y="91.0" font-size="8.6" text-anchor="middle" fill="#9d9d9d">N247</text>
<rect x="446.0" y="98.4" width="22.0" height="11" rx="1" fill="#b5b5b5"/><text x="457.0" y="107.0" font-size="8.6" font-weight="bold" text-anchor="middle" fill="#e6e6e6">A16</text>
<text x="548.7" y="106.9" font-size="8.4" font-weight="bold" letter-spacing="1.1" text-anchor="middle" fill="#8a8a8a" stroke="#d4d4d4" stroke-width="1.6" paint-order="stroke">BARROSA</text>
<text x="536.2" y="127.1" font-size="13.5" text-anchor="middle" fill="#767676" stroke="#d6d6d6" stroke-width="2.2" paint-order="stroke" stroke-linejoin="round" opacity=".95">Mem Martins</text>
<text x="381.7" y="144.1" font-size="13.5" text-anchor="middle" fill="#767676" stroke="#d6d6d6" stroke-width="2.2" paint-order="stroke" stroke-linejoin="round" opacity=".95">Sintra</text>
<text x="355.2" y="166.1" font-size="13.5" text-anchor="middle" fill="#767676" stroke="#d6d6d6" stroke-width="2.2" paint-order="stroke" stroke-linejoin="round" opacity=".95">São Martinho</text>
<text x="493.4" y="157.3" font-size="13.5" text-anchor="middle" fill="#767676" stroke="#d6d6d6" stroke-width="2.2" paint-order="stroke" stroke-linejoin="round" opacity=".95">Algueirão-Mem</text>
<text x="493.4" y="171.2" font-size="13.5" text-anchor="middle" fill="#767676" stroke="#d6d6d6" stroke-width="2.2" paint-order="stroke" stroke-linejoin="round" opacity=".95">Martins</text>
<rect x="530.7" y="132.8" width="36.0" height="12" rx="2" fill="#dbdbdb"/><text x="548.7" y="141.9" font-size="8.6" text-anchor="middle" fill="#9d9d9d">N250-1</text>
<rect x="592.0" y="143.2" width="22.0" height="11" rx="1" fill="#b5b5b5"/><text x="603.0" y="151.8" font-size="8.6" font-weight="bold" text-anchor="middle" fill="#e6e6e6">A16</text>
<rect x="697.5" y="155.2" width="25.6" height="12" rx="2" fill="#dbdbdb"/><text x="710.3" y="164.3" font-size="8.6" text-anchor="middle" fill="#9d9d9d">N117</text>
<rect x="784.1" y="170.7" width="16.7" height="11" rx="1" fill="#b5b5b5"/><text x="792.4" y="179.3" font-size="8.6" font-weight="bold" text-anchor="middle" fill="#e6e6e6">A9</text>
<text x="562.0" y="198.4" font-size="13.5" text-anchor="middle" fill="#767676" stroke="#d6d6d6" stroke-width="2.2" paint-order="stroke" stroke-linejoin="round" opacity=".95">Rinchoa</text>
<rect x="728.5" y="209.9" width="30.8" height="12" rx="2" fill="#dbdbdb"/><text x="743.9" y="219.0" font-size="8.6" text-anchor="middle" fill="#9d9d9d">N 250</text>
<rect x="381.8" y="226.9" width="15.3" height="12" rx="2" fill="#dbdbdb"/><text x="389.5" y="236.0" font-size="8.6" text-anchor="middle" fill="#9d9d9d">N9</text>
<rect x="416.2" y="234.8" width="22.0" height="11" rx="1" fill="#b5b5b5"/><text x="427.2" y="243.4" font-size="8.6" font-weight="bold" text-anchor="middle" fill="#e6e6e6">A16</text>
<rect x="469.5" y="231.8" width="22.0" height="11" rx="1" fill="#b5b5b5"/><text x="480.5" y="240.4" font-size="8.6" font-weight="bold" text-anchor="middle" fill="#e6e6e6">A37</text>
<text x="463.9" y="256.9" font-size="8.4" font-weight="bold" letter-spacing="1.1" text-anchor="middle" fill="#8a8a8a" stroke="#d4d4d4" stroke-width="1.6" paint-order="stroke">ABRUNHEIRA</text>
<text x="653.9" y="247.7" font-size="8.4" font-weight="bold" letter-spacing="1.1" text-anchor="middle" fill="#8a8a8a" stroke="#d4d4d4" stroke-width="1.6" paint-order="stroke">FONTE DAS EIRAS</text>
<text x="724.2" y="242.2" font-size="13.5" text-anchor="middle" fill="#767676" stroke="#d6d6d6" stroke-width="2.2" paint-order="stroke" stroke-linejoin="round" opacity=".95">Belas</text>
<rect x="452.6" y="265.9" width="36.0" height="12" rx="2" fill="#dbdbdb"/><text x="470.6" y="275.0" font-size="8.6" text-anchor="middle" fill="#9d9d9d">N249-2</text>
<text x="623.4" y="274.4" font-size="13.5" text-anchor="middle" fill="#767676" stroke="#d6d6d6" stroke-width="2.2" paint-order="stroke" stroke-linejoin="round" opacity=".95">Agualva-Cacém</text>
<rect x="618.5" y="284.7" width="22.0" height="11" rx="1" fill="#b5b5b5"/><text x="629.5" y="293.3" font-size="8.6" font-weight="bold" text-anchor="middle" fill="#e6e6e6">A37</text>
<rect x="318.7" y="273.7" width="25.6" height="12" rx="2" fill="#dbdbdb"/><text x="331.5" y="282.8" font-size="8.6" text-anchor="middle" fill="#9d9d9d">N9-1</text>
<rect x="471.6" y="296.1" width="36.0" height="12" rx="2" fill="#dbdbdb"/><text x="489.6" y="305.2" font-size="8.6" text-anchor="middle" fill="#9d9d9d">N249-4</text>
<text x="739.5" y="314.1" font-size="13.5" text-anchor="middle" fill="#767676" stroke="#d6d6d6" stroke-width="2.2" paint-order="stroke" stroke-linejoin="round" opacity=".95">Queluz</text>
<rect x="683.0" y="350.6" width="16.7" height="11" rx="1" fill="#b5b5b5"/><text x="691.3" y="359.2" font-size="8.6" font-weight="bold" text-anchor="middle" fill="#e6e6e6">A9</text>
<rect x="601.3" y="362.0" width="36.0" height="12" rx="2" fill="#dbdbdb"/><text x="619.3" y="371.1" font-size="8.6" text-anchor="middle" fill="#9d9d9d">N249-3</text>
<rect x="303.5" y="372.9" width="22.0" height="11" rx="1" fill="#b5b5b5"/><text x="314.5" y="381.5" font-size="8.6" font-weight="bold" text-anchor="middle" fill="#e6e6e6">A16</text>
<text x="299.2" y="404.3" font-size="13.5" text-anchor="middle" fill="#767676" stroke="#d6d6d6" stroke-width="2.2" paint-order="stroke" stroke-linejoin="round" opacity=".95">Alcabideche</text>
<rect x="490.7" y="393.4" width="36.0" height="12" rx="2" fill="#dbdbdb"/><text x="508.7" y="402.5" font-size="8.6" text-anchor="middle" fill="#9d9d9d">N249-4</text>
<text x="676.7" y="405.4" font-size="13.5" text-anchor="middle" fill="#767676" stroke="#d6d6d6" stroke-width="2.2" paint-order="stroke" stroke-linejoin="round" opacity=".95">Barcarena</text>
<rect x="727.7" y="402.9" width="25.6" height="12" rx="2" fill="#dbdbdb"/><text x="740.5" y="412.0" font-size="8.6" text-anchor="middle" fill="#9d9d9d">N117</text>
<rect x="776.2" y="407.0" width="25.6" height="12" rx="2" fill="#dbdbdb"/><text x="789.0" y="416.1" font-size="8.6" text-anchor="middle" fill="#9d9d9d">N6-2</text>
<rect x="264.5" y="419.4" width="27.3" height="11" rx="1" fill="#b5b5b5"/><text x="278.2" y="428.0" font-size="8.6" font-weight="bold" text-anchor="middle" fill="#e6e6e6">IC15</text>
<text x="601.7" y="431.5" font-size="13.5" text-anchor="middle" fill="#767676" stroke="#d6d6d6" stroke-width="2.2" paint-order="stroke" stroke-linejoin="round" opacity=".95">Porto Salvo</text>
<text x="803.4" y="439.3" font-size="13.5" text-anchor="middle" fill="#767676" stroke="#d6d6d6" stroke-width="2.2" paint-order="stroke" stroke-linejoin="round" opacity=".95">Carnaxide</text>
<text x="491.7" y="442.4" font-size="13.5" text-anchor="middle" fill="#767676" stroke="#d6d6d6" stroke-width="2.2" paint-order="stroke" stroke-linejoin="round" opacity=".95">Matos</text>
<text x="491.3" y="456.3" font-size="13.5" text-anchor="middle" fill="#767676" stroke="#d6d6d6" stroke-width="2.2" paint-order="stroke" stroke-linejoin="round" opacity=".95">Cheirinhos</text>
<rect x="426.0" y="449.3" width="16.7" height="11" rx="1" fill="#b5b5b5"/><text x="434.3" y="457.9" font-size="8.6" font-weight="bold" text-anchor="middle" fill="#e6e6e6">A5</text>
<text x="727.3" y="455.3" font-size="13.5" text-anchor="middle" fill="#767676" stroke="#d6d6d6" stroke-width="2.2" paint-order="stroke" stroke-linejoin="round" opacity=".95">Queijas</text>
<rect x="666.4" y="461.2" width="27.3" height="11" rx="1" fill="#b5b5b5"/><text x="680.1" y="469.8" font-size="8.6" font-weight="bold" text-anchor="middle" fill="#e6e6e6">IC15</text>
<text x="790.4" y="473.2" font-size="13.5" text-anchor="middle" fill="#767676" stroke="#d6d6d6" stroke-width="2.2" paint-order="stroke" stroke-linejoin="round" opacity=".95">Linda-a-Velha</text>
<text x="506.3" y="475.6" font-size="13.5" text-anchor="middle" fill="#767676" stroke="#d6d6d6" stroke-width="2.2" paint-order="stroke" stroke-linejoin="round" opacity=".95">São Domingos</text>
<text x="506.3" y="489.2" font-size="13.5" text-anchor="middle" fill="#767676" stroke="#d6d6d6" stroke-width="2.2" paint-order="stroke" stroke-linejoin="round" opacity=".95">de Rana</text>
<text x="346.7" y="478.3" font-size="13.5" text-anchor="middle" fill="#767676" stroke="#d6d6d6" stroke-width="2.2" paint-order="stroke" stroke-linejoin="round" opacity=".95">Estoril</text>
<text x="305.0" y="497.1" font-size="8.4" font-weight="bold" letter-spacing="1.1" text-anchor="middle" fill="#8a8a8a" stroke="#d4d4d4" stroke-width="1.6" paint-order="stroke">MONTE ESTORIL</text>
<rect x="507.4" y="506.1" width="25.6" height="12" rx="2" fill="#dbdbdb"/><text x="520.2" y="515.2" font-size="8.6" text-anchor="middle" fill="#9d9d9d">N6-7</text>
<text x="709.6" y="517.4" font-size="13.5" text-anchor="middle" fill="#767676" stroke="#d6d6d6" stroke-width="2.2" paint-order="stroke" stroke-linejoin="round" opacity=".95">Caxias</text>
<rect x="774.5" y="518.7" width="15.3" height="12" rx="2" fill="#dbdbdb"/><text x="782.2" y="527.8" font-size="8.6" text-anchor="middle" fill="#9d9d9d">N6</text>
<text x="264.5" y="539.1" font-size="13.5" text-anchor="middle" fill="#767676" stroke="#d6d6d6" stroke-width="2.2" paint-order="stroke" stroke-linejoin="round" opacity=".95">Cascais</text>
<rect x="388.9" y="534.3" width="15.3" height="12" rx="2" fill="#dbdbdb"/><text x="396.6" y="543.4" font-size="8.6" text-anchor="middle" fill="#9d9d9d">N6</text>
<text x="576.9" y="540.1" font-size="13.5" text-anchor="middle" fill="#767676" stroke="#d6d6d6" stroke-width="2.2" paint-order="stroke" stroke-linejoin="round" opacity=".95">Oeiras</text>
<rect x="629.6" y="545.2" width="15.3" height="12" rx="2" fill="#dbdbdb"/><text x="637.3" y="554.3" font-size="8.6" text-anchor="middle" fill="#9d9d9d">N6</text>
<text x="458.8" y="554.4" font-size="13.5" text-anchor="middle" fill="#767676" stroke="#d6d6d6" stroke-width="2.2" paint-order="stroke" stroke-linejoin="round" opacity=".95">Parede</text>
<text x="509.3" y="573.4" font-size="13.5" text-anchor="middle" fill="#767676" stroke="#d6d6d6" stroke-width="2.2" paint-order="stroke" stroke-linejoin="round" opacity=".95">Carcavelos</text>
<text x="1074.4" y="59.4" font-size="13.5" text-anchor="middle" fill="#767676" stroke="#d6d6d6" stroke-width="2.2" paint-order="stroke" stroke-linejoin="round" opacity=".95">Frielas</text>
<rect x="1072.3" y="61.2" width="30.8" height="12" rx="2" fill="#dbdbdb"/><text x="1087.7" y="70.3" font-size="8.6" text-anchor="middle" fill="#9d9d9d">N 250</text>
<text x="859.2" y="81.1" font-size="8.4" font-weight="bold" letter-spacing="1.1" text-anchor="middle" fill="#8a8a8a" stroke="#d4d4d4" stroke-width="1.6" paint-order="stroke">ALÉM</text>
<rect x="941.3" y="78.7" width="22.0" height="11" rx="1" fill="#b5b5b5"/><text x="952.3" y="87.3" font-size="8.6" font-weight="bold" text-anchor="middle" fill="#e6e6e6">A40</text>
<text x="1212.6" y="56.9" font-size="13.5" text-anchor="middle" fill="#767676" stroke="#d6d6d6" stroke-width="2.2" paint-order="stroke" stroke-linejoin="round" opacity=".95">São João</text>
<text x="1212.6" y="71.1" font-size="13.5" text-anchor="middle" fill="#767676" stroke="#d6d6d6" stroke-width="2.2" paint-order="stroke" stroke-linejoin="round" opacity=".95">da Talha</text>
<text x="846.7" y="102.3" font-size="13.5" text-anchor="middle" fill="#767676" stroke="#d6d6d6" stroke-width="2.2" paint-order="stroke" stroke-linejoin="round" opacity=".95">Caneças</text>
<text x="1016.1" y="95.9" font-size="13.5" text-anchor="middle" fill="#767676" stroke="#d6d6d6" stroke-width="2.2" paint-order="stroke" stroke-linejoin="round" opacity=".95">Santo António</text>
<text x="1016.1" y="110.1" font-size="13.5" text-anchor="middle" fill="#767676" stroke="#d6d6d6" stroke-width="2.2" paint-order="stroke" stroke-linejoin="round" opacity=".95">dos Cavaleiros</text>
<rect x="879.1" y="100.9" width="30.8" height="12" rx="2" fill="#dbdbdb"/><text x="894.5" y="110.0" font-size="8.6" text-anchor="middle" fill="#9d9d9d">N 250</text>
<text x="1204.1" y="116.2" font-size="13.5" text-anchor="middle" fill="#767676" stroke="#d6d6d6" stroke-width="2.2" paint-order="stroke" stroke-linejoin="round" opacity=".95">Bobadela</text>
<text x="932.6" y="135.3" font-size="13.5" text-anchor="middle" fill="#767676" stroke="#d6d6d6" stroke-width="2.2" paint-order="stroke" stroke-linejoin="round" opacity=".95">Ramada</text>
<text x="1088.0" y="144.1" font-size="13.5" text-anchor="middle" fill="#767676" stroke="#d6d6d6" stroke-width="2.2" paint-order="stroke" stroke-linejoin="round" opacity=".95">Camarate</text>
<rect x="1171.4" y="136.4" width="16.7" height="11" rx="1" fill="#b5b5b5"/><text x="1179.7" y="145.0" font-size="8.6" font-weight="bold" text-anchor="middle" fill="#e6e6e6">E1</text>
<text x="861.6" y="169.2" font-size="13.5" text-anchor="middle" fill="#767676" stroke="#d6d6d6" stroke-width="2.2" paint-order="stroke" stroke-linejoin="round" opacity=".95">Famões</text>
<text x="953.6" y="172.3" font-size="13.5" text-anchor="middle" fill="#767676" stroke="#d6d6d6" stroke-width="2.2" paint-order="stroke" stroke-linejoin="round" opacity=".95">Odivelas</text>
<rect x="785.7" y="170.7" width="16.7" height="11" rx="1" fill="#b5b5b5"/><text x="794.0" y="179.3" font-size="8.6" font-weight="bold" text-anchor="middle" fill="#e6e6e6">A9</text>
<rect x="990.1" y="178.8" width="16.7" height="11" rx="1" fill="#b5b5b5"/><text x="998.4" y="187.4" font-size="8.6" font-weight="bold" text-anchor="middle" fill="#e6e6e6">A8</text>
<text x="1134.5" y="192.3" font-size="13.5" text-anchor="middle" fill="#767676" stroke="#d6d6d6" stroke-width="2.2" paint-order="stroke" stroke-linejoin="round" opacity=".95">Prior Velho</text>
<rect x="953.5" y="206.3" width="22.0" height="11" rx="1" fill="#b5b5b5"/><text x="964.5" y="214.9" font-size="8.6" font-weight="bold" text-anchor="middle" fill="#e6e6e6">A36</text>
<rect x="834.9" y="240.1" width="25.6" height="12" rx="2" fill="#dbdbdb"/><text x="847.7" y="249.2" font-size="8.6" text-anchor="middle" fill="#9d9d9d">IC16</text>
<text x="909.5" y="279.5" font-size="13.5" text-anchor="middle" fill="#767676" stroke="#d6d6d6" stroke-width="2.2" paint-order="stroke" stroke-linejoin="round" opacity=".95">Pontinha</text>
<text x="839.9" y="313.8" font-size="16.5" text-anchor="middle" fill="#6a6a6a" stroke="#d6d6d6" stroke-width="2.2" paint-order="stroke" stroke-linejoin="round" opacity=".95">Amadora</text>
<rect x="810.9" y="354.0" width="22.0" height="11" rx="1" fill="#b5b5b5"/><text x="821.9" y="362.6" font-size="8.6" font-weight="bold" text-anchor="middle" fill="#e6e6e6">A37</text>
<text x="853.5" y="386.7" font-size="13.5" text-anchor="middle" fill="#767676" stroke="#d6d6d6" stroke-width="2.2" paint-order="stroke" stroke-linejoin="round" opacity=".95">Alfragide</text>
<rect x="829.8" y="394.5" width="25.6" height="12" rx="2" fill="#dbdbdb"/><text x="842.6" y="403.6" font-size="8.6" text-anchor="middle" fill="#9d9d9d">N117</text>
<text x="817.2" y="525.2" font-size="13.5" text-anchor="middle" fill="#767676" stroke="#d6d6d6" stroke-width="2.2" paint-order="stroke" stroke-linejoin="round" opacity=".95">Algés</text>
<text x="1012.7" y="615.8" font-size="13.5" text-anchor="middle" fill="#767676" stroke="#d6d6d6" stroke-width="2.2" paint-order="stroke" stroke-linejoin="round" opacity=".95">Almada</text>
<rect x="966.0" y="538.2" width="16.7" height="11" rx="1" fill="#c4c4c4"/><text x="974.3" y="546.8" font-size="8.6" font-weight="bold" text-anchor="middle" fill="#e6e6e6">A2</text>
<rect x="980.3" y="622.0" width="16.7" height="11" rx="1" fill="#b5b5b5"/><text x="988.6" y="630.6" font-size="8.6" font-weight="bold" text-anchor="middle" fill="#e6e6e6">A2</text>
<text x="817.2" y="636.2" font-size="13.5" text-anchor="middle" fill="#767676" stroke="#d6d6d6" stroke-width="2.2" paint-order="stroke" stroke-linejoin="round" opacity=".95">Trafaria</text>
<text x="903.0" y="678.6" font-size="13.5" text-anchor="middle" fill="#767676" stroke="#d6d6d6" stroke-width="2.2" paint-order="stroke" stroke-linejoin="round" opacity=".95">Caparica</text>
<text x="1043.9" y="690.8" font-size="13.5" text-anchor="middle" fill="#767676" stroke="#d6d6d6" stroke-width="2.2" paint-order="stroke" stroke-linejoin="round" opacity=".95">Laranjeiro</text>
<text x="1263.5" y="674.2" font-size="13.5" text-anchor="middle" fill="#767676" stroke="#d6d6d6" stroke-width="2.2" paint-order="stroke" stroke-linejoin="round" opacity=".95">Barreiro</text>
<text x="1838.0" y="105.0" font-size="13.5" text-anchor="middle" fill="#767676" stroke="#d6d6d6" stroke-width="2.2" paint-order="stroke" stroke-linejoin="round" opacity=".95">Catapereiro</text>
<rect x="1827.9" y="176.0" width="25.6" height="12" rx="2" fill="#dbdbdb"/><text x="1840.7" y="185.1" font-size="8.6" text-anchor="middle" fill="#9d9d9d">N118</text>
<rect x="1860.3" y="201.1" width="20.5" height="12" rx="2" fill="#dbdbdb"/><text x="1870.5" y="210.2" font-size="8.6" text-anchor="middle" fill="#9d9d9d">IC3</text>
<rect x="1759.2" y="280.2" width="20.5" height="12" rx="2" fill="#dbdbdb"/><text x="1769.4" y="289.3" font-size="8.6" text-anchor="middle" fill="#9d9d9d">IC3</text>
<rect x="1349.4" y="278.6" width="22.0" height="11" rx="1" fill="#b5b5b5"/><text x="1360.4" y="287.2" font-size="8.6" font-weight="bold" text-anchor="middle" fill="#e6e6e6">A12</text>
<text x="1602.0" y="318.6" font-size="13.5" text-anchor="middle" fill="#767676" stroke="#d6d6d6" stroke-width="2.2" paint-order="stroke" stroke-linejoin="round" opacity=".95">Alcochete</text>
<rect x="1576.7" y="326.0" width="25.6" height="12" rx="2" fill="#dbdbdb"/><text x="1589.5" y="335.1" font-size="8.6" text-anchor="middle" fill="#9d9d9d">N119</text>
<text x="1574.2" y="407.1" font-size="13.5" text-anchor="middle" fill="#767676" stroke="#d6d6d6" stroke-width="2.2" paint-order="stroke" stroke-linejoin="round" opacity=".95">São Francisco</text>
<text x="1464.2" y="431.5" font-size="13.5" text-anchor="middle" fill="#767676" stroke="#d6d6d6" stroke-width="2.2" paint-order="stroke" stroke-linejoin="round" opacity=".95">Samouco</text>
<rect x="1564.2" y="427.9" width="22.0" height="11" rx="1" fill="#b5b5b5"/><text x="1575.2" y="436.5" font-size="8.6" font-weight="bold" text-anchor="middle" fill="#e6e6e6">A12</text>
<rect x="1628.1" y="452.7" width="22.0" height="11" rx="1" fill="#b5b5b5"/><text x="1639.1" y="461.3" font-size="8.6" font-weight="bold" text-anchor="middle" fill="#e6e6e6">A12</text>
<rect x="1656.2" y="469.6" width="22.0" height="11" rx="1" fill="#b5b5b5"/><text x="1667.2" y="478.2" font-size="8.6" font-weight="bold" text-anchor="middle" fill="#e6e6e6">A33</text>
<rect x="1770.2" y="449.8" width="25.6" height="12" rx="2" fill="#dbdbdb"/><text x="1783.0" y="458.9" font-size="8.6" text-anchor="middle" fill="#9d9d9d">N118</text>
<rect x="1680.9" y="490.9" width="15.3" height="12" rx="2" fill="#dbdbdb"/><text x="1688.6" y="500.0" font-size="8.6" text-anchor="middle" fill="#9d9d9d">N4</text>
<text x="1568.4" y="507.2" font-size="13.5" text-anchor="middle" fill="#767676" stroke="#d6d6d6" stroke-width="2.2" paint-order="stroke" stroke-linejoin="round" opacity=".95">Montijo</text>
<text x="1629.2" y="529.3" font-size="13.5" text-anchor="middle" fill="#767676" stroke="#d6d6d6" stroke-width="2.2" paint-order="stroke" stroke-linejoin="round" opacity=".95">Afonsoeiro</text>
<text x="1705.2" y="523.1" font-size="13.5" text-anchor="middle" fill="#767676" stroke="#d6d6d6" stroke-width="2.2" paint-order="stroke" stroke-linejoin="round" opacity=".95">Atalaia</text>
<rect x="1769.3" y="534.8" width="22.0" height="11" rx="1" fill="#b5b5b5"/><text x="1780.3" y="543.4" font-size="8.6" font-weight="bold" text-anchor="middle" fill="#e6e6e6">A12</text>
<rect x="1638.8" y="554.7" width="15.3" height="12" rx="2" fill="#dbdbdb"/><text x="1646.5" y="563.8" font-size="8.6" text-anchor="middle" fill="#9d9d9d">N5</text>
<text x="1715.1" y="581.5" font-size="13.5" text-anchor="middle" fill="#767676" stroke="#d6d6d6" stroke-width="2.2" paint-order="stroke" stroke-linejoin="round" opacity=".95">Alto do</text>
<text x="1715.1" y="595.4" font-size="13.5" text-anchor="middle" fill="#767676" stroke="#d6d6d6" stroke-width="2.2" paint-order="stroke" stroke-linejoin="round" opacity=".95">Estanqueiro/</text>
<text x="1715.1" y="609.4" font-size="13.5" text-anchor="middle" fill="#767676" stroke="#d6d6d6" stroke-width="2.2" paint-order="stroke" stroke-linejoin="round" opacity=".95">Jardia</text>
<text x="1586.8" y="598.2" font-size="13.5" text-anchor="middle" fill="#767676" stroke="#d6d6d6" stroke-width="2.2" paint-order="stroke" stroke-linejoin="round" opacity=".95">Sarilhos</text>
<text x="1586.8" y="612.4" font-size="13.5" text-anchor="middle" fill="#767676" stroke="#d6d6d6" stroke-width="2.2" paint-order="stroke" stroke-linejoin="round" opacity=".95">Grandes</text>
<text x="1477.5" y="629.4" font-size="13.5" text-anchor="middle" fill="#767676" stroke="#d6d6d6" stroke-width="2.2" paint-order="stroke" stroke-linejoin="round" opacity=".95">Gaio-Rosário</text>
<rect x="1681.9" y="626.0" width="25.6" height="12" rx="2" fill="#dbdbdb"/><text x="1694.7" y="635.1" font-size="8.6" text-anchor="middle" fill="#9d9d9d">N252</text>
<text x="1383.4" y="645.0" font-size="13.5" text-anchor="middle" fill="#767676" stroke="#d6d6d6" stroke-width="2.2" paint-order="stroke" stroke-linejoin="round" opacity=".95">Baixa da</text>
<text x="1383.4" y="659.3" font-size="13.5" text-anchor="middle" fill="#767676" stroke="#d6d6d6" stroke-width="2.2" paint-order="stroke" stroke-linejoin="round" opacity=".95">Banheira</text>
<rect x="1530.8" y="645.0" width="20.5" height="12" rx="2" fill="#dbdbdb"/><text x="1541.0" y="654.1" font-size="8.6" text-anchor="middle" fill="#9d9d9d">N11</text>
<text x="1708.6" y="658.2" font-size="13.5" text-anchor="middle" fill="#767676" stroke="#d6d6d6" stroke-width="2.2" paint-order="stroke" stroke-linejoin="round" opacity=".95">Manchoso</text>
<rect x="1347.0" y="666.3" width="30.8" height="12" rx="2" fill="#dbdbdb"/><text x="1362.4" y="675.4" font-size="8.6" text-anchor="middle" fill="#9d9d9d">N11-1</text>
<text x="1551.1" y="676.0" font-size="8.4" font-weight="bold" letter-spacing="1.1" text-anchor="middle" fill="#8a8a8a" stroke="#d4d4d4" stroke-width="1.6" paint-order="stroke">BAIRRO DA</text>
<text x="1551.1" y="687.0" font-size="8.4" font-weight="bold" letter-spacing="1.1" text-anchor="middle" fill="#8a8a8a" stroke="#d4d4d4" stroke-width="1.6" paint-order="stroke">BELA VISTA</text>
<text x="1194.7" y="230.3" font-size="13.5" text-anchor="middle" fill="#767676" stroke="#d6d6d6" stroke-width="2.2" paint-order="stroke" stroke-linejoin="round" opacity=".95">Moscavide</text>
<text x="1214.0" y="264.5" font-size="8.2" font-weight="bold" letter-spacing="1.2" text-anchor="middle" fill="#8c8c8c" stroke="#dcdcdc" stroke-width="1.6" paint-order="stroke">PARQUE DAS</text>
<text x="1214.0" y="273.5" font-size="8.2" font-weight="bold" letter-spacing="1.2" text-anchor="middle" fill="#8c8c8c" stroke="#dcdcdc" stroke-width="1.6" paint-order="stroke">NAÇÕES</text>
<defs><clipPath id="lisclip"><polygon points="891.4,310.0 905.0,304.4 911.8,299.3 918.6,294.2 910.1,292.5 909.3,289.1 915.2,285.7 918.6,273.9 922.0,265.4 928.8,258.6 931.3,253.5 938.9,250.1 945.7,245.0 954.2,236.5 962.7,229.7 972.9,224.7 981.4,223.0 988.1,217.9 994.9,212.8 1001.7,204.3 1008.5,200.9 1015.3,197.5 1022.1,189.0 1028.9,182.2 1035.7,177.1 1042.4,171.2 1049.2,167.8 1054.3,164.9 1061.1,167.0 1067.9,171.2 1069.6,178.8 1068.7,183.9 1072.1,190.7 1079.8,193.3 1088.3,199.2 1096.7,204.3 1105.2,206.0 1115.4,207.7 1124.8,211.9 1138.4,213.6 1148.6,217.0 1158.8,219.6 1165.6,223.0 1172.3,229.7 1177.4,236.5 1184.2,242.5 1204.6,241.6 1202.9,226.3 1201.2,209.4 1199.5,189.0 1201.2,175.4 1202.9,163.6 1211.4,161.5 1219.8,161.0 1226.6,162.7 1229.2,168.7 1230.9,177.1 1230.0,187.3 1227.5,195.8 1228.3,207.7 1228.7,221.3 1228.0,234.8 1227.5,251.8 1226.6,262.0 1225.8,273.9 1219.8,274.7 1218.1,285.7 1225.8,284.9 1224.9,295.9 1224.8,300.0 1222.3,313.6 1218.9,328.8 1214.6,344.1 1212.1,352.6 1208.7,364.5 1203.6,376.3 1198.5,388.2 1193.4,400.0 1188.3,412.7 1187.1,422.9 1178.2,430.5 1175.6,434.4 1169.3,435.6 1159.1,445.8 1150.2,456.0 1141.3,466.2 1133.6,475.1 1129.8,481.4 1120.9,489.1 1114.5,492.9 1110.7,495.4 1104.4,499.3 1089.1,501.8 1078.9,503.1 1068.7,506.9 1063.6,504.4 1053.4,501.8 1043.3,505.6 1042.0,509.4 1035.6,510.7 1034.1,515.0 1017.2,521.0 1003.6,523.5 990.0,528.6 984.1,530.3 983.2,526.0 973.1,528.6 959.5,532.0 947.6,534.5 935.7,537.1 922.2,540.5 908.6,543.9 895.0,547.2 881.4,550.6 871.3,554.0 861.1,554.0 856.0,548.9 849.2,550.6 842.4,551.5 839.0,549.8 827.1,542.2 823.8,538.8 829.7,533.7 831.4,525.2 833.1,515.0 834.8,506.5 840.7,499.7 845.8,496.3 843.3,487.9 844.1,477.7 847.5,467.5 854.3,457.3 862.8,448.8 873.0,442.1 884.8,435.3 888.2,430.2 884.7,420.5 883.0,408.6 888.0,396.7 893.1,384.8 895.7,373.0 894.8,361.1 890.6,350.9 884.7,340.7 877.9,333.9 882.1,328.8 884.7,322.1 887.2,315.3 893.1,310.2"/></clipPath></defs>
<g clip-path="url(#lisclip)">
<polygon points="943.9,249.2 958.5,237.7 965.5,244.1 950.9,255.5" fill="#bfe2c8"/>
<polygon points="1071.8,197.0 1078.2,196.4 1076.9,203.4" fill="#bfe2c8"/>
<polygon points="1022.2,219.9 1025.3,221.2 1024.1,225.6 1020.9,224.4" fill="#bfe2c8"/>
<polygon points="1056.5,231.4 1062.9,236.4 1060.3,239.0 1054.6,233.9" fill="#bfe2c8"/>
<polygon points="1041.3,264.4 1056.5,267.0 1052.7,269.5 1042.5,268.3" fill="#bfe2c8"/>
<polygon points="1217.1,200.8 1224.7,202.1 1227.3,214.8 1223.4,216.1 1220.9,208.4" fill="#bfe2c8"/>
<polygon points="902.0,308.3 913.4,304.5 919.8,305.7 921.1,309.5 910.9,310.8 903.3,310.8" fill="#bfe2c8"/>
<polygon points="907.1,366.8 913.4,360.4 923.6,357.9 938.9,356.6 951.6,356.6 961.8,361.7 968.2,366.8 974.5,377.0 972.0,391.0 907.1,391.0" fill="#bfe2c8"/>
<polygon points="890.5,341.4 898.2,338.8 899.5,343.9 893.1,346.4" fill="#bfe2c8"/>
<polygon points="988.5,349.0 994.9,347.7 996.2,354.1 989.8,356.6" fill="#bfe2c8"/>
<polygon points="1038.2,265.0 1058.5,265.0 1056.0,268.8 1042.0,271.4" fill="#bfe2c8"/>
<polygon points="1147.8,267.5 1156.7,268.8 1154.2,277.7 1149.1,276.5" fill="#bfe2c8"/>
<polygon points="1175.2,277.7 1182.2,275.2 1186.0,280.3 1179.6,285.4 1175.8,284.1" fill="#bfe2c8"/>
<polygon points="1117.3,321.0 1123.6,323.5 1131.3,333.7 1135.1,341.4 1131.3,346.4 1123.6,343.9 1119.8,336.3" fill="#bfe2c8"/>
<polygon points="1102.0,298.1 1113.4,294.3 1112.2,303.2 1103.3,301.9" fill="#bfe2c8"/>
<polygon points="1172.0,332.4 1178.4,328.6 1180.9,335.0 1174.5,336.3" fill="#bfe2c8"/>
<polygon points="897.4,380.0 989.1,380.0 994.2,392.7 995.4,405.5 991.6,418.2 987.8,430.9 980.2,437.3 970.0,446.2 957.3,456.4 944.5,461.4 931.8,458.9 924.2,469.1 919.1,476.7 911.4,469.1 901.3,466.5 891.1,469.1 883.4,479.3 878.4,488.2 868.2,492.0 855.5,494.5 846.5,500.0 845.3,494.5 843.4,485.6 845.3,475.4 849.1,466.5 855.5,456.4 863.1,448.7 872.0,442.4 880.9,437.3 887.3,430.9 884.7,419.5 882.2,410.5 883.4,405.5 888.5,396.5 893.6,387.6" fill="#bfe2c8"/>
<polygon points="989.1,466.5 998.0,465.3 1000.5,476.7 991.6,479.3" fill="#bfe2c8"/>
<polygon points="1024.7,467.8 1033.6,465.3 1034.9,469.1 1027.3,471.6" fill="#bfe2c8"/>
<polygon points="896.2,485.6 901.3,484.4 902.5,494.5 897.4,493.3" fill="#bfe2c8"/>
<polygon points="994.2,483.1 1005.6,481.8 1001.8,490.7 994.2,489.4" fill="#bfe2c8"/>
<polygon points="1038.2,411.5 1044.5,407.6 1056.0,419.1 1059.8,424.2 1056.0,425.5 1048.4,420.4" fill="#bfe2c8"/>
<polygon points="1127.3,403.8 1140.0,402.5 1152.7,412.7 1155.3,417.8 1146.3,415.3 1137.4,410.2" fill="#bfe2c8"/>
<polygon points="1025.5,466.2 1031.8,464.9 1033.1,470.0 1026.7,471.3" fill="#bfe2c8"/>
<polygon points="884.8,420.0 969.7,420.0 978.1,430.2 976.5,445.4 962.9,453.9 944.2,452.2 928.9,459.0 918.8,453.9 910.3,460.7 895.0,464.1 879.7,476.0 864.5,481.1 850.9,491.3 844.1,501.4 837.3,511.6 834.8,506.5 840.7,499.7 845.8,496.3 843.3,487.9 844.1,477.7 847.5,467.5 854.3,457.3 862.8,448.8 873.0,442.1 884.8,435.3 888.2,430.2" fill="#bfe2c8"/>
<polygon points="896.7,484.5 903.5,486.2 910.3,499.7 901.8,501.4" fill="#bfe2c8"/>
<polygon points="990.0,465.8 998.5,465.8 1000.2,477.7 991.7,479.4" fill="#bfe2c8"/>
<polygon points="898.4,521.8 908.6,523.5 906.9,528.6 899.3,527.7" fill="#bfe2c8"/>
<polygon points="1126.6,404.4 1137.9,403.5 1148.2,406.3 1152.9,411.9 1155.7,418.5 1146.3,419.4 1136.9,412.8 1129.4,408.2" fill="#bfe2c8"/>
<polygon points="835.3,506.2 858.2,494.7 862.0,499.8 858.2,511.3 837.8,518.9" fill="#bfe2c8"/>
<polygon points="1016.5,336.3 1031.8,336.3 1031.8,346.4 1016.5,346.4" fill="#f7dede"/>
<text x="1059.0" y="255.0" font-size="8.4" font-weight="bold" letter-spacing="1.2" text-anchor="middle" fill="#555" stroke="#f4f4f4" stroke-width="1.6" paint-order="stroke">ALTA DE LISBOA</text>
<rect x="979.3" y="276.9" width="22.0" height="11" rx="1" fill="#b5b5b5"/><text x="990.3" y="285.5" font-size="8.6" font-weight="bold" text-anchor="middle" fill="#e6e6e6">IP7</text>
<text x="1100.6" y="359.1" font-size="8.2" font-weight="bold" letter-spacing="1.2" text-anchor="middle" fill="#555" stroke="#f4f4f4" stroke-width="1.6" paint-order="stroke">AREEIRO</text>
<text x="944.4" y="373.7" font-size="13" text-anchor="middle" fill="#262626" stroke="#f4f4f4" stroke-width="1.5" paint-order="stroke" stroke-opacity=".7">Parque</text>
<text x="946.1" y="388.2" font-size="13" text-anchor="middle" fill="#262626" stroke="#f4f4f4" stroke-width="1.5" paint-order="stroke" stroke-opacity=".7">Florestal de</text>
<text x="944.4" y="401.8" font-size="13" text-anchor="middle" fill="#262626" stroke="#f4f4f4" stroke-width="1.5" paint-order="stroke" stroke-opacity=".7">Monsanto</text>
<rect x="880.8" y="439.8" width="27.3" height="11" rx="1" fill="#b5b5b5"/><text x="894.5" y="448.4" font-size="8.6" font-weight="bold" text-anchor="middle" fill="#e6e6e6">IC15</text>
<text x="1088.0" y="449.8" font-size="24" text-anchor="middle" fill="#4a4a4a" stroke="#f4f4f4" stroke-width="1.5" paint-order="stroke" stroke-opacity=".6">Lisboa</text>
<text x="1061.6" y="478.1" font-size="8.2" font-weight="bold" letter-spacing="1.2" text-anchor="middle" fill="#555" stroke="#f4f4f4" stroke-width="1.6" paint-order="stroke">BAIRRO ALTO</text>
<text x="924.1" y="512.1" font-size="8.2" font-weight="bold" letter-spacing="1.2" text-anchor="middle" fill="#555" stroke="#f4f4f4" stroke-width="1.6" paint-order="stroke">AJUDA</text>
<text x="869.8" y="526.7" font-size="8.2" font-weight="bold" letter-spacing="1.2" text-anchor="middle" fill="#555" stroke="#f4f4f4" stroke-width="1.6" paint-order="stroke">RESTELO</text>
<g fill="none" stroke="#1d3b52" stroke-width="1.5" stroke-linejoin="round">
<polygon points="1045.1,212.9 1046.3,217.4 1051.4,219.9 1059.1,219.3 1064.2,218.0 1069.3,221.2 1073.1,224.4 1070.5,225.6 1065.4,222.4 1059.1,223.1 1055.9,224.4 1057.8,228.8 1062.9,233.3 1061.6,235.2 1055.3,231.4 1047.6,228.8 1042.5,231.4 1041.3,237.7 1043.2,244.1 1050.2,246.0 1057.8,244.1 1061.0,238.4 1062.9,239.0 1062.3,244.7 1056.5,247.3 1048.9,248.5 1041.3,251.7 1040.0,255.5 1043.8,259.4 1042.5,264.4 1040.0,269.5 1041.3,275.0 1032.3,275.0 1027.3,267.0 1022.2,264.4 1018.4,263.2 1017.1,258.1 1012.0,255.5 1005.6,255.5 1000.5,254.3 996.7,253.6 999.3,249.8 1005.6,246.6 1012.0,244.1 1017.1,241.5 1022.2,236.4 1026.0,230.1 1031.1,223.7 1037.4,218.6 1042.5,216.1"/>
<polygon points="929.3,275.0 930.5,268.3 936.9,264.4 938.2,260.6 945.8,258.7 953.4,256.8 954.7,260.6 950.9,265.7 943.3,267.0 938.2,269.5 935.6,275.0"/>
<polygon points="1115.1,230.1 1118.9,236.4 1126.5,244.1 1132.9,251.7 1136.7,259.4 1140.0,263.2 1140.0,256.8 1135.4,249.2 1129.1,241.5 1121.4,233.9"/>
<polygon points="1135.4,212.3 1140.0,214.8 1140.0,221.2 1136.7,218.6"/>
<polygon points="1204.4,226.9 1227.9,219.3 1228.5,244.1 1227.3,261.9 1212.0,267.6 1211.4,260.6 1213.9,242.8 1212.0,236.4 1213.3,231.4 1208.2,230.1"/>
<polygon points="1134.4,217.4 1142.0,221.2 1148.4,226.3 1153.4,231.4 1161.1,233.9 1166.2,240.3 1171.3,244.1 1176.4,250.4 1182.7,253.0 1189.1,256.8 1187.8,261.9 1191.6,267.0 1196.7,270.8 1200.5,275.0 1189.1,275.0 1184.0,268.3 1181.4,260.6 1176.4,255.5 1171.3,249.2 1166.2,242.8 1159.8,236.4 1153.4,233.9 1147.1,230.1 1140.7,226.3 1135.6,221.2"/>
<polygon points="1112.7,228.8 1117.8,236.4 1122.9,244.1 1129.3,249.2 1134.4,251.7 1138.2,256.8 1144.5,260.6 1153.4,263.2 1161.1,265.7 1171.3,269.5 1182.7,270.8 1189.1,272.1 1189.1,275.0 1176.4,273.4 1163.6,269.5 1153.4,266.4 1143.3,263.2 1135.6,259.4 1131.8,254.3 1125.5,249.2 1119.1,242.8 1114.0,235.2"/>
<polygon points="921.1,265.0 931.3,265.0 936.4,270.1 932.5,276.5 933.8,282.8 938.9,286.6 936.4,294.3 931.3,299.4 930.0,305.7 933.8,312.1 938.9,317.2 946.5,315.9 949.1,318.4 945.3,326.1 941.4,336.3 946.5,342.6 952.9,346.4 960.5,347.7 963.7,354.1 966.9,360.4 961.8,361.7 956.7,356.6 949.1,354.1 941.4,355.4 936.4,352.8 931.3,346.4 928.7,341.4 923.6,343.9 918.5,346.4 916.0,341.4 919.8,336.3 926.2,333.7 931.3,331.2 935.1,326.1 931.3,321.0 924.9,318.4 921.1,321.0 916.0,326.1 910.9,331.2 908.4,326.1 913.4,322.3 919.8,318.4 923.6,313.4 922.4,307.0 919.8,300.6 918.5,290.5 919.8,280.3 919.2,272.6"/>
<polygon points="947.8,315.9 951.6,308.3 954.2,304.5 956.7,310.8 951.6,315.9 949.1,319.7"/>
<polygon points="1044.5,301.9 1048.3,305.7 1056.0,308.3 1062.3,304.5 1068.7,307.0 1063.6,312.1 1061.1,318.4 1063.6,326.1 1070.0,328.6 1076.3,326.1 1081.4,328.6 1076.3,333.7 1070.0,336.3 1067.4,341.4 1068.7,349.0 1073.8,354.1 1076.3,360.4 1078.9,365.5 1076.3,370.6 1070.0,374.4 1074.7,384.8 1061.1,389.8 1047.5,394.9 1044.1,391.6 1030.5,385.0 1029.3,377.0 1038.2,375.7 1043.3,371.9 1050.9,366.8 1056.6,361.7 1056.0,354.1 1050.9,349.0 1049.6,342.6 1050.9,337.5 1047.1,332.4 1043.3,326.1 1042.0,319.7 1035.6,315.9 1028.0,315.9 1022.9,317.2 1020.3,313.4 1015.9,312.1 1020.3,308.3 1029.3,305.7 1038.2,303.2"/>
<polygon points="963.7,352.8 969.4,361.7 974.5,364.3 982.2,363.0 987.3,359.2 994.9,356.6 997.4,350.3 996.8,342.6 992.3,336.3 998.7,328.6 993.6,324.8 987.3,318.4 980.9,314.0 975.8,309.5 980.9,309.5 988.5,315.9 994.9,322.3 1000.0,328.6 1000.0,336.3 998.1,341.4 1000.0,347.7 1003.8,354.1 1008.9,356.6 1012.7,361.7 1006.3,368.1 1010.2,373.2 1016.5,374.4 1024.2,371.9 1029.3,377.0 1030.5,385.0 1020.3,388.2 1010.2,394.9 1005.1,389.8 1003.4,381.4 996.5,384.8 989.8,381.4 979.6,375.7 974.5,377.0 972.0,370.6 968.2,366.8 964.4,361.7"/>
<polygon points="1029.3,265.0 1038.2,265.0 1042.0,272.6 1044.5,281.5 1047.1,290.5 1043.3,298.1 1038.2,293.0 1035.6,282.8 1031.8,272.6"/>
<polygon points="1012.7,293.0 1019.1,295.5 1029.3,296.8 1025.4,299.4 1016.5,298.1"/>
<polygon points="1058.5,295.5 1063.6,287.9 1070.0,277.7 1076.3,270.1 1081.4,268.8 1075.1,280.3 1068.7,290.5 1063.6,298.1"/>
<polygon points="885.5,324.8 890.5,331.2 898.2,336.3 908.4,336.3 913.4,341.4 908.4,346.4 898.2,341.4 889.3,340.1 884.2,333.7"/>
<polygon points="1200.0,279.0 1217.8,286.6 1225.4,286.0 1224.2,298.1 1221.6,313.4 1219.1,324.8 1215.9,336.3 1212.7,349.0 1211.4,351.5 1193.6,357.9 1200.0,347.7 1205.1,340.1 1207.6,331.2 1206.3,322.3 1208.9,313.4 1207.6,305.7 1211.4,300.6 1212.7,294.3 1206.3,290.5 1203.8,284.1"/>
<polygon points="1192.3,359.2 1194.9,366.8 1200.0,378.3 1198.1,385.0 1189.8,385.0 1193.6,373.2"/>
<polygon points="1147.8,265.0 1174.5,269.5 1193.6,272.6 1198.7,277.7 1191.1,287.9 1178.4,292.4 1187.3,284.1 1192.3,277.7 1184.7,272.6 1169.4,271.4 1149.1,268.2"/>
<polygon points="1141.4,318.4 1146.5,321.0 1151.6,328.6 1154.8,336.3 1156.7,346.4 1155.4,356.6 1153.5,366.8 1154.2,377.0 1155.4,385.0 1149.1,385.0 1150.4,375.7 1151.0,365.5 1152.9,356.6 1153.5,347.7 1151.0,338.8 1147.8,329.9 1142.7,323.5"/>
<polygon points="1114.7,286.6 1119.8,284.1 1118.5,293.0 1116.0,303.2 1116.6,313.4 1116.0,323.5 1117.3,333.7 1119.8,341.4 1124.9,349.0 1131.3,356.6 1138.9,361.7 1145.3,365.5 1149.1,370.6 1144.0,370.6 1136.4,365.5 1128.7,360.4 1122.4,354.1 1117.3,347.7 1113.4,340.1 1110.9,331.2 1112.2,321.0 1112.8,310.8 1112.2,300.6 1113.4,293.0"/>
<polygon points="1060.0,300.6 1067.6,303.2 1075.3,300.6 1072.7,305.7 1065.1,308.3 1062.5,315.9 1065.1,323.5 1068.9,328.6 1072.7,336.3 1067.6,341.4 1066.4,349.0 1068.9,352.8 1077.8,354.1 1076.5,361.7 1080.4,369.4 1085.5,373.2 1080.4,379.5 1076.5,385.0 1067.6,389.1 1060.0,390.3"/>
<polygon points="1089.3,363.0 1095.6,365.5 1102.0,373.2 1108.4,369.4 1110.9,375.7 1108.4,382.1 1098.2,379.5 1093.1,385.0 1088.0,385.0 1086.7,374.4"/>
<polygon points="1155.4,307.0 1161.8,308.3 1164.4,315.9 1170.7,319.7 1178.4,323.5 1186.0,323.5 1188.5,328.6 1183.4,333.7 1186.0,341.4 1191.1,351.5 1193.6,357.9 1189.8,356.6 1184.7,347.7 1180.9,337.5 1178.4,328.6 1170.7,324.8 1163.1,322.3 1159.3,315.9"/>
<polygon points="1062.5,277.7 1067.6,270.1 1072.7,265.0 1077.8,265.0 1072.7,275.2 1067.6,286.6 1063.8,294.3 1060.0,296.8 1060.0,290.5"/>
<polygon points="898.7,411.8 901.3,400.4 905.1,392.7 908.9,391.5 906.4,401.6 903.8,413.1 900.6,416.3"/>
<polygon points="908.9,429.6 912.7,425.8 919.1,424.5 925.4,425.8 921.6,430.9 916.5,433.4 911.4,433.4"/>
<polygon points="914.0,408.0 919.1,405.5 926.7,404.2 919.1,410.5 912.7,416.9 906.4,422.0 898.7,427.1 889.8,430.9 887.3,429.6 896.2,424.5 905.1,418.2 910.2,413.1"/>
<polygon points="934.4,433.4 939.4,432.2 944.5,434.7 947.1,439.8 949.6,437.3 952.2,441.1 950.9,447.4 954.7,453.8 952.2,456.4 948.4,451.3 944.5,443.6 939.4,439.8"/>
<polygon points="956.0,438.5 961.1,438.5 959.8,446.2 964.9,451.3 967.4,456.4 964.9,461.4 961.1,458.9 957.3,452.5 956.0,444.9"/>
<polygon points="930.5,448.7 935.6,446.2 939.4,451.3 936.9,457.6 931.8,458.9 929.3,455.1"/>
<polygon points="992.9,409.3 996.7,411.8 995.4,422.0 996.7,428.4 994.2,433.4 987.8,437.3 985.3,441.1 986.5,451.3 985.9,462.7 987.8,474.2 990.3,485.6 982.7,488.2 981.4,476.7 980.8,464.0 981.4,451.3 980.8,442.4 975.1,439.8 970.0,437.3 976.3,436.0 982.7,436.0 989.1,430.9 991.6,422.0 992.3,414.4"/>
<polygon points="989.1,380.0 996.7,380.0 1003.1,390.2 1006.9,396.5 1005.6,402.9 1000.5,395.3 994.2,388.9"/>
<polygon points="892.4,394.0 897.4,383.8 901.3,386.4 897.4,394.0 893.6,400.4"/>
<polygon points="1046.3,380.0 1070.0,380.0 1070.0,386.4 1059.1,390.2 1048.9,394.0 1045.1,387.6"/>
<polygon points="1059.1,409.3 1062.9,410.5 1065.4,420.7 1068.0,430.9 1070.0,433.4 1070.0,424.5 1066.7,415.6"/>
<polygon points="1004.3,396.5 1008.2,397.8 1006.9,405.5 1003.1,404.2"/>
<polygon points="845.3,480.5 850.4,481.8 851.6,485.6 847.8,486.3"/>
<polygon points="1013.3,480.5 1017.1,475.4 1020.9,472.9 1019.6,478.0 1015.8,483.1"/>
<polygon points="1187.1,412.7 1188.3,412.7 1187.1,422.9 1178.2,430.5 1175.6,434.4 1169.3,435.6 1159.1,445.8 1150.2,456.0 1141.3,466.2 1133.6,475.1 1129.8,481.4 1120.9,489.1 1114.5,492.9 1115.8,489.1 1119.6,484.0 1127.3,478.9 1132.3,471.3 1140.0,463.6 1145.1,457.3 1150.2,449.6 1157.8,443.3 1165.4,436.9 1162.9,426.7 1160.3,421.0 1170.5,422.9 1178.2,420.4 1183.3,415.3"/>
<polygon points="1056.0,408.9 1062.4,410.2 1064.9,416.5 1067.4,424.2 1070.0,431.8 1071.3,440.7 1075.1,448.4 1078.9,459.8 1075.1,458.5 1070.0,450.9 1066.2,442.0 1063.6,433.1 1061.1,425.5 1059.8,417.8"/>
<polygon points="1096.7,400.0 1101.8,400.0 1100.5,407.6 1099.3,417.8 1100.5,428.0 1101.8,438.2 1100.5,449.6 1096.7,450.9 1097.4,438.2 1096.1,428.0 1095.4,417.8 1096.1,407.6"/>
<polygon points="1150.2,400.0 1156.5,400.0 1159.1,410.2 1161.6,419.1 1159.1,421.6 1155.3,412.7 1152.7,406.4"/>
<polygon points="1122.2,405.1 1128.5,408.9 1132.3,416.5 1134.9,425.5 1140.0,435.6 1146.3,443.3 1150.2,449.6 1146.3,450.9 1140.0,442.0 1134.9,434.4 1131.1,425.5 1128.5,417.8 1124.7,411.5"/>
<polygon points="1000.0,405.1 1005.1,400.0 1010.2,400.0 1005.1,407.6 1001.3,415.3 1000.0,416.5"/>
<polygon points="1042.0,466.2 1044.5,464.9 1047.1,471.3 1049.6,481.4 1050.9,489.1 1047.7,487.8 1045.8,478.9"/>
<polygon points="1014.0,478.9 1017.8,473.8 1021.6,472.5 1019.1,478.9 1015.3,484.0"/>
<polygon points="947.6,523.5 959.5,520.1 964.6,521.8 964.6,531.1 959.5,532.0 949.3,534.5 945.9,528.6"/>
<polygon points="836.5,528.6 840.7,525.2 850.9,533.7 842.4,548.9 839.0,549.8 836.5,542.2"/>
<polygon points="856.0,538.8 867.9,540.5 879.7,535.4 888.2,528.6 887.4,537.1 888.2,547.2 871.3,554.0 861.1,554.0 856.0,548.9"/>
<polygon points="892.5,528.6 901.8,530.3 910.3,537.1 910.3,543.5 903.5,543.9"/>
<polygon points="922.2,540.5 930.6,537.1 935.7,537.1 922.2,540.8"/>
<polygon points="1088.1,368.8 1091.9,365.0 1097.5,370.6 1101.3,375.3 1106.9,374.4 1106.9,367.8 1110.7,367.8 1112.1,376.3 1113.5,383.8 1108.8,387.5 1106.0,385.2 1101.3,387.5 1100.3,381.9 1096.6,377.2 1091.0,375.3"/>
<polygon points="1097.5,397.8 1100.3,400.6 1101.3,405.3 1104.1,404.4 1103.2,409.1 1100.3,413.8 1101.3,419.4 1100.3,425.0 1095.6,425.0 1096.6,418.5 1095.6,411.9 1096.1,406.3 1096.6,402.5"/>
<polygon points="1140.7,365.0 1144.4,365.0 1148.2,372.5 1151.9,378.1 1154.7,383.8 1153.8,391.3 1152.9,398.8 1154.7,406.3 1158.5,411.9 1161.3,417.5 1163.2,421.3 1159.4,420.3 1155.7,413.8 1151.9,407.2 1150.1,400.6 1150.5,393.1 1151.0,385.6 1148.2,380.0 1144.4,374.4 1141.6,369.7"/>
<polygon points="1150.1,400.6 1142.6,399.7 1136.9,400.6 1133.2,402.5 1136.9,402.1 1142.6,401.1 1149.1,402.5"/>
<polygon points="1148.2,365.0 1153.8,365.0 1153.8,370.6 1154.7,376.3 1154.7,383.8 1152.9,378.1 1150.1,370.6"/>
<polygon points="1118.2,404.4 1123.8,405.3 1127.5,410.0 1131.3,415.7 1135.0,421.3 1137.9,416.6 1136.0,425.0 1131.3,425.0 1129.4,419.4 1125.7,412.8 1121.0,408.2"/>
<polygon points="1193.2,370.6 1189.5,388.5 1182.0,402.5 1178.2,414.7 1172.6,420.3 1185.7,421.3 1189.5,409.1 1195.1,395.0 1200.7,383.8 1209.2,365.0 1195.1,365.0"/>
</g>
<g fill="#b7daf3">
<polygon points="1045.1,212.9 1046.3,217.4 1051.4,219.9 1059.1,219.3 1064.2,218.0 1069.3,221.2 1073.1,224.4 1070.5,225.6 1065.4,222.4 1059.1,223.1 1055.9,224.4 1057.8,228.8 1062.9,233.3 1061.6,235.2 1055.3,231.4 1047.6,228.8 1042.5,231.4 1041.3,237.7 1043.2,244.1 1050.2,246.0 1057.8,244.1 1061.0,238.4 1062.9,239.0 1062.3,244.7 1056.5,247.3 1048.9,248.5 1041.3,251.7 1040.0,255.5 1043.8,259.4 1042.5,264.4 1040.0,269.5 1041.3,275.0 1032.3,275.0 1027.3,267.0 1022.2,264.4 1018.4,263.2 1017.1,258.1 1012.0,255.5 1005.6,255.5 1000.5,254.3 996.7,253.6 999.3,249.8 1005.6,246.6 1012.0,244.1 1017.1,241.5 1022.2,236.4 1026.0,230.1 1031.1,223.7 1037.4,218.6 1042.5,216.1"/>
<polygon points="929.3,275.0 930.5,268.3 936.9,264.4 938.2,260.6 945.8,258.7 953.4,256.8 954.7,260.6 950.9,265.7 943.3,267.0 938.2,269.5 935.6,275.0"/>
<polygon points="1115.1,230.1 1118.9,236.4 1126.5,244.1 1132.9,251.7 1136.7,259.4 1140.0,263.2 1140.0,256.8 1135.4,249.2 1129.1,241.5 1121.4,233.9"/>
<polygon points="1135.4,212.3 1140.0,214.8 1140.0,221.2 1136.7,218.6"/>
<polygon points="1204.4,226.9 1227.9,219.3 1228.5,244.1 1227.3,261.9 1212.0,267.6 1211.4,260.6 1213.9,242.8 1212.0,236.4 1213.3,231.4 1208.2,230.1"/>
<polygon points="1134.4,217.4 1142.0,221.2 1148.4,226.3 1153.4,231.4 1161.1,233.9 1166.2,240.3 1171.3,244.1 1176.4,250.4 1182.7,253.0 1189.1,256.8 1187.8,261.9 1191.6,267.0 1196.7,270.8 1200.5,275.0 1189.1,275.0 1184.0,268.3 1181.4,260.6 1176.4,255.5 1171.3,249.2 1166.2,242.8 1159.8,236.4 1153.4,233.9 1147.1,230.1 1140.7,226.3 1135.6,221.2"/>
<polygon points="1112.7,228.8 1117.8,236.4 1122.9,244.1 1129.3,249.2 1134.4,251.7 1138.2,256.8 1144.5,260.6 1153.4,263.2 1161.1,265.7 1171.3,269.5 1182.7,270.8 1189.1,272.1 1189.1,275.0 1176.4,273.4 1163.6,269.5 1153.4,266.4 1143.3,263.2 1135.6,259.4 1131.8,254.3 1125.5,249.2 1119.1,242.8 1114.0,235.2"/>
<polygon points="921.1,265.0 931.3,265.0 936.4,270.1 932.5,276.5 933.8,282.8 938.9,286.6 936.4,294.3 931.3,299.4 930.0,305.7 933.8,312.1 938.9,317.2 946.5,315.9 949.1,318.4 945.3,326.1 941.4,336.3 946.5,342.6 952.9,346.4 960.5,347.7 963.7,354.1 966.9,360.4 961.8,361.7 956.7,356.6 949.1,354.1 941.4,355.4 936.4,352.8 931.3,346.4 928.7,341.4 923.6,343.9 918.5,346.4 916.0,341.4 919.8,336.3 926.2,333.7 931.3,331.2 935.1,326.1 931.3,321.0 924.9,318.4 921.1,321.0 916.0,326.1 910.9,331.2 908.4,326.1 913.4,322.3 919.8,318.4 923.6,313.4 922.4,307.0 919.8,300.6 918.5,290.5 919.8,280.3 919.2,272.6"/>
<polygon points="947.8,315.9 951.6,308.3 954.2,304.5 956.7,310.8 951.6,315.9 949.1,319.7"/>
<polygon points="1044.5,301.9 1048.3,305.7 1056.0,308.3 1062.3,304.5 1068.7,307.0 1063.6,312.1 1061.1,318.4 1063.6,326.1 1070.0,328.6 1076.3,326.1 1081.4,328.6 1076.3,333.7 1070.0,336.3 1067.4,341.4 1068.7,349.0 1073.8,354.1 1076.3,360.4 1078.9,365.5 1076.3,370.6 1070.0,374.4 1074.7,384.8 1061.1,389.8 1047.5,394.9 1044.1,391.6 1030.5,385.0 1029.3,377.0 1038.2,375.7 1043.3,371.9 1050.9,366.8 1056.6,361.7 1056.0,354.1 1050.9,349.0 1049.6,342.6 1050.9,337.5 1047.1,332.4 1043.3,326.1 1042.0,319.7 1035.6,315.9 1028.0,315.9 1022.9,317.2 1020.3,313.4 1015.9,312.1 1020.3,308.3 1029.3,305.7 1038.2,303.2"/>
<polygon points="963.7,352.8 969.4,361.7 974.5,364.3 982.2,363.0 987.3,359.2 994.9,356.6 997.4,350.3 996.8,342.6 992.3,336.3 998.7,328.6 993.6,324.8 987.3,318.4 980.9,314.0 975.8,309.5 980.9,309.5 988.5,315.9 994.9,322.3 1000.0,328.6 1000.0,336.3 998.1,341.4 1000.0,347.7 1003.8,354.1 1008.9,356.6 1012.7,361.7 1006.3,368.1 1010.2,373.2 1016.5,374.4 1024.2,371.9 1029.3,377.0 1030.5,385.0 1020.3,388.2 1010.2,394.9 1005.1,389.8 1003.4,381.4 996.5,384.8 989.8,381.4 979.6,375.7 974.5,377.0 972.0,370.6 968.2,366.8 964.4,361.7"/>
<polygon points="1029.3,265.0 1038.2,265.0 1042.0,272.6 1044.5,281.5 1047.1,290.5 1043.3,298.1 1038.2,293.0 1035.6,282.8 1031.8,272.6"/>
<polygon points="1012.7,293.0 1019.1,295.5 1029.3,296.8 1025.4,299.4 1016.5,298.1"/>
<polygon points="1058.5,295.5 1063.6,287.9 1070.0,277.7 1076.3,270.1 1081.4,268.8 1075.1,280.3 1068.7,290.5 1063.6,298.1"/>
<polygon points="885.5,324.8 890.5,331.2 898.2,336.3 908.4,336.3 913.4,341.4 908.4,346.4 898.2,341.4 889.3,340.1 884.2,333.7"/>
<polygon points="1200.0,279.0 1217.8,286.6 1225.4,286.0 1224.2,298.1 1221.6,313.4 1219.1,324.8 1215.9,336.3 1212.7,349.0 1211.4,351.5 1193.6,357.9 1200.0,347.7 1205.1,340.1 1207.6,331.2 1206.3,322.3 1208.9,313.4 1207.6,305.7 1211.4,300.6 1212.7,294.3 1206.3,290.5 1203.8,284.1"/>
<polygon points="1192.3,359.2 1194.9,366.8 1200.0,378.3 1198.1,385.0 1189.8,385.0 1193.6,373.2"/>
<polygon points="1147.8,265.0 1174.5,269.5 1193.6,272.6 1198.7,277.7 1191.1,287.9 1178.4,292.4 1187.3,284.1 1192.3,277.7 1184.7,272.6 1169.4,271.4 1149.1,268.2"/>
<polygon points="1141.4,318.4 1146.5,321.0 1151.6,328.6 1154.8,336.3 1156.7,346.4 1155.4,356.6 1153.5,366.8 1154.2,377.0 1155.4,385.0 1149.1,385.0 1150.4,375.7 1151.0,365.5 1152.9,356.6 1153.5,347.7 1151.0,338.8 1147.8,329.9 1142.7,323.5"/>
<polygon points="1114.7,286.6 1119.8,284.1 1118.5,293.0 1116.0,303.2 1116.6,313.4 1116.0,323.5 1117.3,333.7 1119.8,341.4 1124.9,349.0 1131.3,356.6 1138.9,361.7 1145.3,365.5 1149.1,370.6 1144.0,370.6 1136.4,365.5 1128.7,360.4 1122.4,354.1 1117.3,347.7 1113.4,340.1 1110.9,331.2 1112.2,321.0 1112.8,310.8 1112.2,300.6 1113.4,293.0"/>
<polygon points="1060.0,300.6 1067.6,303.2 1075.3,300.6 1072.7,305.7 1065.1,308.3 1062.5,315.9 1065.1,323.5 1068.9,328.6 1072.7,336.3 1067.6,341.4 1066.4,349.0 1068.9,352.8 1077.8,354.1 1076.5,361.7 1080.4,369.4 1085.5,373.2 1080.4,379.5 1076.5,385.0 1067.6,389.1 1060.0,390.3"/>
<polygon points="1089.3,363.0 1095.6,365.5 1102.0,373.2 1108.4,369.4 1110.9,375.7 1108.4,382.1 1098.2,379.5 1093.1,385.0 1088.0,385.0 1086.7,374.4"/>
<polygon points="1155.4,307.0 1161.8,308.3 1164.4,315.9 1170.7,319.7 1178.4,323.5 1186.0,323.5 1188.5,328.6 1183.4,333.7 1186.0,341.4 1191.1,351.5 1193.6,357.9 1189.8,356.6 1184.7,347.7 1180.9,337.5 1178.4,328.6 1170.7,324.8 1163.1,322.3 1159.3,315.9"/>
<polygon points="1062.5,277.7 1067.6,270.1 1072.7,265.0 1077.8,265.0 1072.7,275.2 1067.6,286.6 1063.8,294.3 1060.0,296.8 1060.0,290.5"/>
<polygon points="898.7,411.8 901.3,400.4 905.1,392.7 908.9,391.5 906.4,401.6 903.8,413.1 900.6,416.3"/>
<polygon points="908.9,429.6 912.7,425.8 919.1,424.5 925.4,425.8 921.6,430.9 916.5,433.4 911.4,433.4"/>
<polygon points="914.0,408.0 919.1,405.5 926.7,404.2 919.1,410.5 912.7,416.9 906.4,422.0 898.7,427.1 889.8,430.9 887.3,429.6 896.2,424.5 905.1,418.2 910.2,413.1"/>
<polygon points="934.4,433.4 939.4,432.2 944.5,434.7 947.1,439.8 949.6,437.3 952.2,441.1 950.9,447.4 954.7,453.8 952.2,456.4 948.4,451.3 944.5,443.6 939.4,439.8"/>
<polygon points="956.0,438.5 961.1,438.5 959.8,446.2 964.9,451.3 967.4,456.4 964.9,461.4 961.1,458.9 957.3,452.5 956.0,444.9"/>
<polygon points="930.5,448.7 935.6,446.2 939.4,451.3 936.9,457.6 931.8,458.9 929.3,455.1"/>
<polygon points="992.9,409.3 996.7,411.8 995.4,422.0 996.7,428.4 994.2,433.4 987.8,437.3 985.3,441.1 986.5,451.3 985.9,462.7 987.8,474.2 990.3,485.6 982.7,488.2 981.4,476.7 980.8,464.0 981.4,451.3 980.8,442.4 975.1,439.8 970.0,437.3 976.3,436.0 982.7,436.0 989.1,430.9 991.6,422.0 992.3,414.4"/>
<polygon points="989.1,380.0 996.7,380.0 1003.1,390.2 1006.9,396.5 1005.6,402.9 1000.5,395.3 994.2,388.9"/>
<polygon points="892.4,394.0 897.4,383.8 901.3,386.4 897.4,394.0 893.6,400.4"/>
<polygon points="1046.3,380.0 1070.0,380.0 1070.0,386.4 1059.1,390.2 1048.9,394.0 1045.1,387.6"/>
<polygon points="1059.1,409.3 1062.9,410.5 1065.4,420.7 1068.0,430.9 1070.0,433.4 1070.0,424.5 1066.7,415.6"/>
<polygon points="1004.3,396.5 1008.2,397.8 1006.9,405.5 1003.1,404.2"/>
<polygon points="845.3,480.5 850.4,481.8 851.6,485.6 847.8,486.3"/>
<polygon points="1013.3,480.5 1017.1,475.4 1020.9,472.9 1019.6,478.0 1015.8,483.1"/>
<polygon points="1187.1,412.7 1188.3,412.7 1187.1,422.9 1178.2,430.5 1175.6,434.4 1169.3,435.6 1159.1,445.8 1150.2,456.0 1141.3,466.2 1133.6,475.1 1129.8,481.4 1120.9,489.1 1114.5,492.9 1115.8,489.1 1119.6,484.0 1127.3,478.9 1132.3,471.3 1140.0,463.6 1145.1,457.3 1150.2,449.6 1157.8,443.3 1165.4,436.9 1162.9,426.7 1160.3,421.0 1170.5,422.9 1178.2,420.4 1183.3,415.3"/>
<polygon points="1056.0,408.9 1062.4,410.2 1064.9,416.5 1067.4,424.2 1070.0,431.8 1071.3,440.7 1075.1,448.4 1078.9,459.8 1075.1,458.5 1070.0,450.9 1066.2,442.0 1063.6,433.1 1061.1,425.5 1059.8,417.8"/>
<polygon points="1096.7,400.0 1101.8,400.0 1100.5,407.6 1099.3,417.8 1100.5,428.0 1101.8,438.2 1100.5,449.6 1096.7,450.9 1097.4,438.2 1096.1,428.0 1095.4,417.8 1096.1,407.6"/>
<polygon points="1150.2,400.0 1156.5,400.0 1159.1,410.2 1161.6,419.1 1159.1,421.6 1155.3,412.7 1152.7,406.4"/>
<polygon points="1122.2,405.1 1128.5,408.9 1132.3,416.5 1134.9,425.5 1140.0,435.6 1146.3,443.3 1150.2,449.6 1146.3,450.9 1140.0,442.0 1134.9,434.4 1131.1,425.5 1128.5,417.8 1124.7,411.5"/>
<polygon points="1000.0,405.1 1005.1,400.0 1010.2,400.0 1005.1,407.6 1001.3,415.3 1000.0,416.5"/>
<polygon points="1042.0,466.2 1044.5,464.9 1047.1,471.3 1049.6,481.4 1050.9,489.1 1047.7,487.8 1045.8,478.9"/>
<polygon points="1014.0,478.9 1017.8,473.8 1021.6,472.5 1019.1,478.9 1015.3,484.0"/>
<polygon points="947.6,523.5 959.5,520.1 964.6,521.8 964.6,531.1 959.5,532.0 949.3,534.5 945.9,528.6"/>
<polygon points="836.5,528.6 840.7,525.2 850.9,533.7 842.4,548.9 839.0,549.8 836.5,542.2"/>
<polygon points="856.0,538.8 867.9,540.5 879.7,535.4 888.2,528.6 887.4,537.1 888.2,547.2 871.3,554.0 861.1,554.0 856.0,548.9"/>
<polygon points="892.5,528.6 901.8,530.3 910.3,537.1 910.3,543.5 903.5,543.9"/>
<polygon points="922.2,540.5 930.6,537.1 935.7,537.1 922.2,540.8"/>
<polygon points="1088.1,368.8 1091.9,365.0 1097.5,370.6 1101.3,375.3 1106.9,374.4 1106.9,367.8 1110.7,367.8 1112.1,376.3 1113.5,383.8 1108.8,387.5 1106.0,385.2 1101.3,387.5 1100.3,381.9 1096.6,377.2 1091.0,375.3"/>
<polygon points="1097.5,397.8 1100.3,400.6 1101.3,405.3 1104.1,404.4 1103.2,409.1 1100.3,413.8 1101.3,419.4 1100.3,425.0 1095.6,425.0 1096.6,418.5 1095.6,411.9 1096.1,406.3 1096.6,402.5"/>
<polygon points="1140.7,365.0 1144.4,365.0 1148.2,372.5 1151.9,378.1 1154.7,383.8 1153.8,391.3 1152.9,398.8 1154.7,406.3 1158.5,411.9 1161.3,417.5 1163.2,421.3 1159.4,420.3 1155.7,413.8 1151.9,407.2 1150.1,400.6 1150.5,393.1 1151.0,385.6 1148.2,380.0 1144.4,374.4 1141.6,369.7"/>
<polygon points="1150.1,400.6 1142.6,399.7 1136.9,400.6 1133.2,402.5 1136.9,402.1 1142.6,401.1 1149.1,402.5"/>
<polygon points="1148.2,365.0 1153.8,365.0 1153.8,370.6 1154.7,376.3 1154.7,383.8 1152.9,378.1 1150.1,370.6"/>
<polygon points="1118.2,404.4 1123.8,405.3 1127.5,410.0 1131.3,415.7 1135.0,421.3 1137.9,416.6 1136.0,425.0 1131.3,425.0 1129.4,419.4 1125.7,412.8 1121.0,408.2"/>
<polygon points="1193.2,370.6 1189.5,388.5 1182.0,402.5 1178.2,414.7 1172.6,420.3 1185.7,421.3 1189.5,409.1 1195.1,395.0 1200.7,383.8 1209.2,365.0 1195.1,365.0"/>
</g>
<g fill="#2f84c9" stroke="#0d2f4d" stroke-width=".8" stroke-linejoin="round">
<polygon points="1020.9,252.4 1023.2,250.7 1025.7,252.0 1035.1,275.0 1031.1,275.0 1022.2,255.5"/>
<polygon points="1012.0,242.8 1015.2,240.0 1019.0,239.6 1017.7,242.2 1013.9,244.1"/>
<polygon points="954.2,313.4 961.8,309.5 972.0,307.6 975.2,308.9 968.2,312.1 960.5,315.9 954.2,322.3 949.1,329.9 945.3,335.0 943.4,332.4 947.8,323.5"/>
<polygon points="991.7,307.6 1012.7,305.7 1029.3,302.5 1043.3,300.0 1044.5,302.5 1030.5,305.7 1012.7,309.5 992.3,309.5"/>
<polygon points="1029.3,265.0 1033.7,265.0 1038.2,277.7 1041.3,293.0 1038.8,294.3 1035.0,280.3"/>
<polygon points="1076.3,286.0 1100.0,284.1 1100.0,288.5 1077.6,289.2"/>
<polygon points="915.4,334.4 919.2,333.7 918.5,351.5 914.7,352.8"/>
<polygon points="928.7,337.5 936.4,336.3 941.4,333.7 938.9,337.5 936.4,342.6 933.2,340.1"/>
<polygon points="944.0,343.9 949.1,346.4 956.7,347.7 961.8,350.3 960.5,354.1 954.2,350.3 947.8,349.6 943.4,347.1"/>
<polygon points="922.4,356.6 938.9,354.1 938.9,357.9 923.6,360.4"/>
<polygon points="986.0,293.0 991.1,294.3 991.7,298.1 987.3,300.0"/>
<polygon points="1070.0,322.3 1076.3,321.0 1085.2,319.7 1082.7,323.5 1076.3,326.1 1070.0,327.4"/>
<polygon points="1058.5,341.4 1064.9,340.1 1066.2,343.9 1062.3,346.4"/>
<polygon points="1030.5,379.5 1038.2,378.3 1043.3,373.2 1050.9,370.6 1058.5,369.4 1059.8,373.2 1056.0,378.3 1048.3,379.5 1040.7,383.4 1033.1,385.0 1029.3,383.4"/>
<polygon points="970.7,348.4 975.8,349.0 975.2,351.5 970.1,350.9"/>
<polygon points="979.6,359.8 986.0,359.2 987.3,361.7 980.9,362.4"/>
<polygon points="1066.2,309.5 1071.2,308.9 1070.0,313.4 1066.8,312.7"/>
<polygon points="1047.1,321.0 1049.6,320.4 1050.3,324.8 1047.7,325.4"/>
<polygon points="1066.8,371.9 1069.3,373.2 1068.7,378.3 1066.8,377.0"/>
<polygon points="1001.3,366.8 1005.1,365.5 1005.7,370.6 1001.9,371.3"/>
<polygon points="898.2,363.0 903.3,362.4 902.6,365.5 898.8,365.5"/>
<polygon points="963.1,354.1 965.6,355.4 966.3,360.4 963.7,359.8"/>
<polygon points="1193.6,357.9 1211.4,351.5 1205.1,373.2 1200.0,378.3 1194.9,366.8"/>
<polygon points="1076.5,287.3 1113.4,283.5 1116.0,286.6 1077.8,289.8"/>
<polygon points="1067.6,309.5 1071.5,308.9 1070.8,313.4 1067.0,314.0"/>
<polygon points="1070.2,324.8 1076.5,321.0 1084.2,319.7 1082.9,323.5 1077.8,326.1 1071.5,328.6"/>
<polygon points="1060.0,341.4 1065.1,340.1 1063.8,345.2 1060.0,346.4"/>
<polygon points="1066.4,373.2 1068.9,371.9 1070.2,378.3 1067.6,379.5"/>
<polygon points="1137.6,342.6 1141.4,342.0 1142.1,345.2 1138.3,345.8"/>
<polygon points="1139.5,375.7 1144.6,377.0 1144.0,379.5 1139.5,378.9"/>
<polygon points="989.1,405.5 992.3,404.8 994.2,411.8 991.0,412.5"/>
<polygon points="1038.7,447.4 1043.8,446.2 1045.1,451.3 1046.3,458.9 1048.9,469.1 1051.4,481.8 1052.7,488.2 1048.9,488.2 1046.3,479.3 1043.8,469.1 1041.9,458.9 1040.0,452.5"/>
<polygon points="905.1,475.4 909.5,474.8 910.2,478.6 906.4,479.3"/>
<polygon points="995.4,480.5 1000.5,478.0 1001.2,480.5 996.7,483.1"/>
<polygon points="1004.3,441.1 1006.9,439.8 1007.5,443.6 1005.0,444.9"/>
<polygon points="1055.2,441.1 1059.1,439.8 1060.3,446.2 1056.5,446.8"/>
<polygon points="1031.1,380.0 1046.3,380.0 1043.8,383.8 1033.6,383.8"/>
<polygon points="1150.2,449.6 1156.5,448.4 1159.1,450.9 1154.0,456.0 1151.4,453.4"/>
<polygon points="1071.3,447.1 1076.4,445.8 1077.6,452.2 1073.2,453.4"/>
<polygon points="1119.6,486.5 1127.3,481.4 1131.1,482.7 1128.5,487.8 1122.2,490.4"/>
<polygon points="964.6,516.7 971.4,509.9 978.1,508.2 982.4,515.0 983.2,526.0 973.1,528.6 964.6,531.1"/>
<polygon points="923.9,521.8 928.9,518.4 935.7,520.1 940.8,526.9 947.6,534.5 935.7,537.1 930.6,537.1 931.5,528.6 927.2,523.5"/>
<polygon points="888.2,528.6 892.5,528.6 903.5,543.9 888.2,547.2 887.4,537.1"/>
<polygon points="910.3,537.1 915.4,533.7 922.2,540.5 910.3,543.5"/>
<polygon points="842.4,548.9 852.6,532.0 856.0,538.8 856.0,548.9 849.2,550.6"/>
<polygon points="823.8,538.8 831.4,521.8 834.8,528.6 836.5,542.2 839.0,549.8 827.1,542.2"/>
<polygon points="1120.0,402.5 1125.7,401.6 1126.1,403.5 1121.0,404.9"/>
<polygon points="1139.7,375.3 1144.4,377.2 1143.5,379.5 1139.3,377.7"/>
<polygon points="1185.7,394.1 1195.1,393.1 1191.3,400.6 1186.6,398.8"/>
<polygon points="1182.9,404.4 1190.4,403.5 1188.5,408.2 1183.8,407.2"/>
<polygon points="1195.1,365.0 1209.2,365.0 1204.5,374.4 1198.8,377.2 1197.9,372.5"/>
<circle cx="1019.0" cy="223.7" r="1.5"/>
<circle cx="941.0" cy="264.4" r="1.9"/>
<circle cx="1054.0" cy="176.6" r="1.0"/>
<circle cx="1136.9" cy="214.2" r="1.0"/>
<circle cx="1062.3" cy="295.5" r="1.5"/>
<circle cx="1062.5" cy="295.5" r="1.8"/>
<circle cx="1161.2" cy="318.4" r="1.8"/>
</g>
<g fill="none" stroke="#0a2742" stroke-width="1.6" stroke-linejoin="round">
<polygon points="1198.0,270.2 1226.0,262.5 1226.6,275.0 1201.8,275.0"/>
<polygon points="885.5,324.8 893.1,326.1 902.0,329.9 908.4,332.4 907.7,335.6 900.7,336.3 893.1,332.4 886.7,329.9"/>
<polygon points="1056.0,349.0 1058.5,352.8 1066.2,354.1 1071.2,357.9 1075.1,360.4 1071.2,364.3 1061.1,366.8 1057.3,359.2"/>
<polygon points="1197.4,270.1 1225.4,265.0 1225.4,274.5 1219.1,275.2 1217.8,286.6 1200.0,279.0"/>
<polygon points="1107.1,340.1 1110.9,337.5 1114.7,338.8 1114.7,343.9 1110.9,346.4 1107.1,345.2"/>
<polygon points="1060.0,352.8 1065.1,354.1 1072.7,359.2 1075.3,363.0 1067.6,366.8 1060.0,366.8"/>
<polygon points="984.0,488.2 991.6,486.9 992.9,494.5 995.4,500.0 982.7,500.0"/>
<polygon points="1028.5,500.0 1036.2,494.5 1046.3,490.7 1056.5,488.2 1070.0,486.9 1070.0,500.0"/>
<polygon points="935.6,497.7 942.0,497.7 942.0,500.0 935.6,500.0"/>
<polygon points="1078.9,459.8 1084.0,462.4 1089.1,459.8 1094.2,456.0 1096.7,450.9 1100.5,449.6 1101.8,454.7 1104.4,456.0 1101.8,459.8 1098.0,463.6 1100.5,468.7 1098.0,473.8 1100.5,477.6 1096.7,481.4 1099.3,485.3 1108.2,486.5 1114.5,489.1 1118.4,491.6 1114.5,494.2 1110.7,495.4 1105.6,499.3 1096.7,500.5 1089.1,501.8 1078.9,503.1 1068.7,506.9 1063.6,504.4 1053.4,501.8 1043.3,505.6 1035.6,510.7 1025.5,513.3 1012.7,515.8 1000.0,517.7 1000.0,505.6 1007.6,504.4 1019.1,500.5 1031.8,496.7 1042.0,492.9 1050.9,489.1 1061.1,489.1 1071.3,491.6 1081.4,494.2 1089.1,492.9 1090.4,486.5 1087.8,478.9 1084.0,471.3 1080.2,464.9"/>
<polygon points="1114.5,472.5 1119.6,471.3 1122.2,476.4 1127.3,473.8 1131.1,475.1 1129.8,478.9 1123.4,481.4 1119.6,482.7 1117.1,477.6"/>
<polygon points="1160.3,421.0 1170.5,422.9 1178.2,424.2 1183.3,425.5 1178.2,430.5 1175.6,434.4 1169.3,435.6 1165.4,433.1 1162.9,426.7"/>
<polygon points="1137.4,454.7 1143.8,456.0 1146.3,459.8 1142.5,461.1 1138.7,458.5"/>
<polygon points="973.1,503.1 979.8,499.7 984.9,494.7 986.6,487.9 991.7,487.9 993.4,498.0 995.1,504.8 1003.6,504.8 1017.2,503.1 1029.0,499.7 1040.9,494.7 1051.1,491.3 1061.3,487.9 1074.9,487.0 1085.0,489.6 1095.2,491.3 1103.7,489.6 1113.9,491.3 1120.0,487.9 1120.0,493.0 1113.9,494.7 1103.7,498.0 1091.8,499.7 1078.2,503.1 1068.1,506.5 1059.6,503.1 1044.3,508.2 1035.8,515.9 1034.1,515.0 1017.2,521.0 1003.6,523.5 990.0,528.6 984.1,530.3 983.2,526.0 982.4,515.0 978.1,508.2"/>
<polygon points="900.1,531.1 912.0,532.0 911.1,535.4 900.1,534.5"/>
<polygon points="918.8,529.4 925.6,528.6 926.4,532.0 919.6,532.8"/>
<polygon points="857.7,542.2 867.9,543.9 867.0,546.4 857.7,544.7"/>
<polygon points="947.6,526.0 958.6,521.8 959.5,524.3 948.5,528.6"/>
<polygon points="828.0,539.6 839.0,546.4 837.3,548.9 826.3,542.2"/>
<polygon points="837.3,531.1 845.8,535.4 845.0,537.1 836.5,533.3"/>
<polygon points="873.0,546.4 878.9,546.4 878.9,550.6 873.0,550.6"/>
<polygon points="895.9,543.0 901.8,542.2 901.8,544.7 896.7,546.4"/>
<polygon points="937.4,497.2 949.3,498.9 949.3,501.4 937.4,500.6"/>
<polygon points="903.5,504.0 906.9,503.1 907.2,506.5 903.8,507.4"/>
<polygon points="905.2,476.0 909.4,475.1 909.9,478.5 906.0,479.4"/>
<polygon points="1093.8,395.0 1097.5,390.3 1101.3,387.5 1106.0,385.2 1108.8,387.5 1107.8,392.2 1106.9,395.0 1111.6,396.0 1112.5,399.7 1111.1,402.1 1105.0,401.6 1104.1,404.4 1101.3,405.3 1100.3,400.6 1097.5,397.8"/>
</g>
<g fill="#0f5b9f">
<polygon points="1198.0,270.2 1226.0,262.5 1226.6,275.0 1201.8,275.0"/>
<polygon points="885.5,324.8 893.1,326.1 902.0,329.9 908.4,332.4 907.7,335.6 900.7,336.3 893.1,332.4 886.7,329.9"/>
<polygon points="1056.0,349.0 1058.5,352.8 1066.2,354.1 1071.2,357.9 1075.1,360.4 1071.2,364.3 1061.1,366.8 1057.3,359.2"/>
<polygon points="1197.4,270.1 1225.4,265.0 1225.4,274.5 1219.1,275.2 1217.8,286.6 1200.0,279.0"/>
<polygon points="1107.1,340.1 1110.9,337.5 1114.7,338.8 1114.7,343.9 1110.9,346.4 1107.1,345.2"/>
<polygon points="1060.0,352.8 1065.1,354.1 1072.7,359.2 1075.3,363.0 1067.6,366.8 1060.0,366.8"/>
<polygon points="984.0,488.2 991.6,486.9 992.9,494.5 995.4,500.0 982.7,500.0"/>
<polygon points="1028.5,500.0 1036.2,494.5 1046.3,490.7 1056.5,488.2 1070.0,486.9 1070.0,500.0"/>
<polygon points="935.6,497.7 942.0,497.7 942.0,500.0 935.6,500.0"/>
<polygon points="1078.9,459.8 1084.0,462.4 1089.1,459.8 1094.2,456.0 1096.7,450.9 1100.5,449.6 1101.8,454.7 1104.4,456.0 1101.8,459.8 1098.0,463.6 1100.5,468.7 1098.0,473.8 1100.5,477.6 1096.7,481.4 1099.3,485.3 1108.2,486.5 1114.5,489.1 1118.4,491.6 1114.5,494.2 1110.7,495.4 1105.6,499.3 1096.7,500.5 1089.1,501.8 1078.9,503.1 1068.7,506.9 1063.6,504.4 1053.4,501.8 1043.3,505.6 1035.6,510.7 1025.5,513.3 1012.7,515.8 1000.0,517.7 1000.0,505.6 1007.6,504.4 1019.1,500.5 1031.8,496.7 1042.0,492.9 1050.9,489.1 1061.1,489.1 1071.3,491.6 1081.4,494.2 1089.1,492.9 1090.4,486.5 1087.8,478.9 1084.0,471.3 1080.2,464.9"/>
<polygon points="1114.5,472.5 1119.6,471.3 1122.2,476.4 1127.3,473.8 1131.1,475.1 1129.8,478.9 1123.4,481.4 1119.6,482.7 1117.1,477.6"/>
<polygon points="1160.3,421.0 1170.5,422.9 1178.2,424.2 1183.3,425.5 1178.2,430.5 1175.6,434.4 1169.3,435.6 1165.4,433.1 1162.9,426.7"/>
<polygon points="1137.4,454.7 1143.8,456.0 1146.3,459.8 1142.5,461.1 1138.7,458.5"/>
<polygon points="973.1,503.1 979.8,499.7 984.9,494.7 986.6,487.9 991.7,487.9 993.4,498.0 995.1,504.8 1003.6,504.8 1017.2,503.1 1029.0,499.7 1040.9,494.7 1051.1,491.3 1061.3,487.9 1074.9,487.0 1085.0,489.6 1095.2,491.3 1103.7,489.6 1113.9,491.3 1120.0,487.9 1120.0,493.0 1113.9,494.7 1103.7,498.0 1091.8,499.7 1078.2,503.1 1068.1,506.5 1059.6,503.1 1044.3,508.2 1035.8,515.9 1034.1,515.0 1017.2,521.0 1003.6,523.5 990.0,528.6 984.1,530.3 983.2,526.0 982.4,515.0 978.1,508.2"/>
<polygon points="900.1,531.1 912.0,532.0 911.1,535.4 900.1,534.5"/>
<polygon points="918.8,529.4 925.6,528.6 926.4,532.0 919.6,532.8"/>
<polygon points="857.7,542.2 867.9,543.9 867.0,546.4 857.7,544.7"/>
<polygon points="947.6,526.0 958.6,521.8 959.5,524.3 948.5,528.6"/>
<polygon points="828.0,539.6 839.0,546.4 837.3,548.9 826.3,542.2"/>
<polygon points="837.3,531.1 845.8,535.4 845.0,537.1 836.5,533.3"/>
<polygon points="873.0,546.4 878.9,546.4 878.9,550.6 873.0,550.6"/>
<polygon points="895.9,543.0 901.8,542.2 901.8,544.7 896.7,546.4"/>
<polygon points="937.4,497.2 949.3,498.9 949.3,501.4 937.4,500.6"/>
<polygon points="903.5,504.0 906.9,503.1 907.2,506.5 903.8,507.4"/>
<polygon points="905.2,476.0 909.4,475.1 909.9,478.5 906.0,479.4"/>
<polygon points="1093.8,395.0 1097.5,390.3 1101.3,387.5 1106.0,385.2 1108.8,387.5 1107.8,392.2 1106.9,395.0 1111.6,396.0 1112.5,399.7 1111.1,402.1 1105.0,401.6 1104.1,404.4 1101.3,405.3 1100.3,400.6 1097.5,397.8"/>
</g>
<g fill="#b7daf3" stroke="#0a2742" stroke-width=".6">
<polygon points="991.7,517.6 1018.9,512.5 1019.7,515.0 993.4,521.0"/>
<polygon points="1003.6,520.1 1018.9,518.4 1017.2,521.8 1005.3,523.8"/>
</g>
<g fill="none" stroke="#1f2d36" stroke-width="2.1" stroke-linecap="round" stroke-linejoin="round">
<polyline points="1001.8,204.6 1012.0,213.5 1013.9,221.2 1012.0,231.4"/>
<polyline points="1046.3,171.5 1034.9,184.3 1026.0,195.7 1018.4,208.4 1012.6,214.2"/>
<polyline points="1046.3,188.7 1037.4,192.5 1031.1,191.9"/>
<polyline points="1037.4,192.5 1043.8,197.0"/>
<polyline points="1034.9,198.3 1027.3,201.4"/>
<polyline points="1038.1,202.7 1028.5,205.9 1026.0,204.6"/>
<polyline points="1019.6,209.7 1028.5,214.8"/>
<polyline points="992.3,219.9 1001.8,223.7 1009.4,225.0"/>
<polyline points="998.0,216.1 1008.2,221.2"/>
<polyline points="994.2,226.3 1001.8,228.2"/>
<polyline points="966.2,228.8 971.3,233.9 978.9,230.1"/>
<polyline points="978.9,223.7 985.3,232.6"/>
<polyline points="964.9,241.5 972.5,236.4 976.4,231.4"/>
<polyline points="993.5,235.8 1001.8,237.7 1008.2,234.5 1010.7,231.4"/>
<polyline points="981.4,244.1 989.1,242.8 1000.5,241.5 1006.9,240.9"/>
<polyline points="973.8,258.7 981.4,251.7 984.0,246.6"/>
<polyline points="1050.2,170.3 1054.6,177.9 1055.3,190.6"/>
<polyline points="1045.7,203.4 1045.1,211.0 1047.6,213.5"/>
<polyline points="1055.3,202.1 1052.7,208.4 1048.9,212.3"/>
<polyline points="1061.0,195.7 1061.6,202.1 1065.4,208.4 1064.2,214.8"/>
<polyline points="1070.5,209.7 1065.4,212.3"/>
<polyline points="1078.2,216.1 1071.8,221.2 1074.3,225.0"/>
<polyline points="1043.8,240.3 1048.9,238.4"/>
<polyline points="1078.2,231.4 1077.5,244.1 1075.6,256.8 1071.8,269.5 1070.5,275.0"/>
<polyline points="1092.2,223.1 1103.6,228.2 1115.1,231.4 1116.3,226.3"/>
<polyline points="1116.3,236.4 1124.0,244.1 1132.9,246.6 1135.4,251.7"/>
<polyline points="1121.4,214.8 1129.1,216.1 1136.7,213.5"/>
<polyline points="990.4,265.1 996.7,255.5"/>
<polyline points="962.4,275.0 968.7,270.2"/>
<polyline points="1043.8,259.4 1052.7,260.6 1060.3,263.2"/>
<polyline points="1051.4,264.4 1057.8,268.3"/>
<polyline points="1075.6,274.6 1080.7,269.5"/>
<polyline points="1057.2,231.4 1064.2,234.5"/>
<polyline points="1100.0,226.3 1110.2,230.1 1116.5,231.4 1115.3,225.0"/>
<polyline points="1117.8,236.4 1125.5,244.1 1133.1,246.6 1134.4,251.7 1130.5,256.8"/>
<polyline points="1131.8,270.8 1138.2,263.2"/>
<polyline points="1147.1,267.0 1148.4,275.0"/>
<polyline points="1171.3,269.5 1175.1,267.0"/>
<polyline points="968.2,269.5 961.8,275.2 954.2,281.5 946.5,285.4 938.9,284.1"/>
<polyline points="984.7,277.7 984.1,285.4 986.0,293.0 991.1,299.4 998.7,303.2 1007.6,304.5"/>
<polyline points="1003.8,275.8 1008.9,281.5 1011.4,289.2 1016.5,294.3 1025.4,295.5"/>
<polyline points="898.2,312.7 904.5,315.9 907.1,322.3 907.7,331.2"/>
<polyline points="969.4,328.6 968.8,338.8 965.6,346.4"/>
<polyline points="991.1,337.5 993.6,342.6"/>
<polyline points="1031.8,349.0 1030.5,356.6 1034.3,364.3 1039.4,370.6"/>
<polyline points="1022.9,354.1 1012.7,360.4 1005.1,366.8"/>
<polyline points="1025.4,364.3 1024.2,371.9"/>
<polyline points="1049.6,276.5 1053.4,272.6 1058.5,275.2 1054.7,290.5 1050.9,300.6"/>
<polyline points="1081.4,268.8 1076.3,277.7 1070.0,285.4"/>
<polyline points="1089.1,275.2 1100.0,272.6"/>
<polyline points="1092.9,319.7 1100.0,318.4"/>
<polyline points="1094.2,336.3 1100.0,337.5"/>
<polyline points="900.7,370.6 902.0,375.7"/>
<polyline points="1098.0,310.8 1100.0,309.5"/>
<polyline points="1089.3,274.5 1098.2,272.0 1107.1,272.6 1113.4,277.7 1116.0,284.1"/>
<polyline points="1124.9,273.9 1131.3,272.6 1136.4,267.5"/>
<polyline points="1131.3,272.6 1130.0,280.3"/>
<polyline points="1154.8,279.6 1172.0,272.0"/>
<polyline points="1156.1,280.9 1172.6,273.3"/>
<polyline points="1159.3,286.6 1166.9,291.7 1175.8,293.6 1182.2,290.5"/>
<polyline points="1135.1,295.5 1132.5,305.7 1126.2,310.8"/>
<polyline points="1132.5,305.7 1136.4,313.4 1138.9,319.7"/>
<polyline points="1141.4,298.1 1144.6,305.7 1145.3,315.9 1147.8,321.0"/>
<polyline points="1098.2,309.5 1096.9,317.2 1091.8,321.0"/>
<polyline points="1099.5,313.4 1105.8,315.9 1110.9,313.4"/>
<polyline points="1187.3,313.4 1194.9,308.3 1207.6,305.7"/>
<polyline points="1196.2,324.8 1202.5,324.2 1208.9,322.3"/>
<polyline points="1192.3,329.9 1200.0,331.2 1206.3,329.9"/>
<polyline points="1166.9,338.2 1174.5,336.3 1180.9,337.5"/>
<polyline points="1094.4,336.3 1103.3,338.2 1108.4,340.1"/>
<polyline points="1128.7,323.5 1136.4,331.2 1142.7,337.5 1149.1,336.3"/>
<polyline points="1123.6,331.2 1127.4,338.8 1131.3,346.4"/>
<polyline points="1124.9,330.5 1128.7,338.2 1132.5,345.8"/>
<polyline points="1121.1,318.4 1126.2,321.0"/>
<polyline points="1136.4,341.4 1132.5,349.0 1136.4,354.1"/>
<polyline points="1161.8,351.5 1156.7,356.6 1154.2,361.7"/>
<polyline points="1172.0,352.8 1169.4,357.9"/>
<polyline points="1174.5,349.0 1182.2,351.5 1187.3,356.6 1192.3,360.4"/>
<polyline points="1174.5,363.0 1184.7,363.0"/>
<polyline points="1165.6,361.7 1169.4,369.4 1174.5,375.7 1175.8,379.5"/>
<polyline points="1126.2,360.4 1123.6,366.8 1121.1,370.6"/>
<polyline points="1136.4,366.8 1132.5,371.9"/>
<polyline points="1210.2,336.3 1221.6,336.3"/>
<polyline points="1224.2,304.5 1229.3,303.2 1228.0,309.5"/>
<polyline points="1113.4,352.8 1116.0,360.4"/>
<polyline points="902.5,381.3 908.9,387.6 916.5,396.5 921.6,401.6"/>
<polyline points="903.8,380.6 910.2,387.0 917.8,395.9 922.9,401.0"/>
<polyline points="882.2,438.5 891.1,441.1 901.3,439.8 911.4,436.0 921.6,432.2"/>
<polyline points="850.4,466.5 859.3,467.8 868.2,465.3 874.5,461.4 879.6,457.0"/>
<polyline points="931.8,427.1 944.5,428.4 954.7,430.9 962.3,434.7 970.0,437.3"/>
<polyline points="944.5,415.6 947.1,422.0 948.4,428.4"/>
<polyline points="957.3,423.3 959.8,429.6 964.9,433.4"/>
<polyline points="952.2,410.5 962.3,405.5 970.0,404.2 977.6,409.3 982.7,415.6 987.8,422.0"/>
<polyline points="957.3,413.1 967.4,411.8 976.3,414.4"/>
<polyline points="973.8,405.5 978.9,409.3 982.7,413.1"/>
<polyline points="931.8,424.5 938.2,422.0"/>
<polyline points="935.6,443.6 936.9,451.3 934.4,461.4 936.9,471.6 939.4,481.8 940.7,492.0 942.0,500.0"/>
<polyline points="922.9,455.1 921.6,462.7 920.4,471.6 922.9,481.8 926.7,490.7 930.5,500.0"/>
<polyline points="907.6,461.4 911.4,466.5 919.1,470.4"/>
<polyline points="897.4,467.8 891.1,471.6 887.3,480.5 883.4,488.2 886.0,497.1"/>
<polyline points="875.8,488.2 868.2,489.4 863.1,494.5 861.8,500.0"/>
<polyline points="957.3,466.5 959.8,474.2 964.9,480.5 968.7,488.2 970.0,500.0"/>
<polyline points="962.3,451.3 970.0,455.1 980.2,451.3 992.9,446.2 1004.3,442.4 1013.3,433.4 1018.3,429.6 1022.2,430.9"/>
<polyline points="1013.3,396.5 1020.9,401.6 1027.3,408.0"/>
<polyline points="1038.7,413.1 1046.3,422.0 1054.0,430.9 1059.1,436.0"/>
<polyline points="1054.0,404.2 1059.1,410.5"/>
<polyline points="1031.1,436.0 1038.7,441.1 1043.8,447.4"/>
<polyline points="1022.2,447.4 1031.1,448.7 1038.7,451.3"/>
<polyline points="1038.7,457.6 1048.9,456.4"/>
<polyline points="1037.4,467.8 1046.3,466.5"/>
<polyline points="1057.8,460.2 1051.4,467.8"/>
<polyline points="1010.7,471.6 1004.3,476.7 996.7,480.5 992.9,483.1"/>
<polyline points="1022.2,474.2 1017.1,481.8 1010.7,488.2 1005.6,498.4"/>
<polyline points="1038.7,480.5 1046.3,485.6 1051.4,488.2"/>
<polyline points="1062.9,480.5 1056.5,485.6"/>
<polyline points="976.3,485.6 980.2,492.0 984.0,497.1"/>
<polyline points="1031.1,486.9 1032.3,494.5"/>
<polyline points="1043.8,390.2 1041.2,397.8 1040.0,402.9"/>
<polyline points="982.7,387.6 990.3,388.9"/>
<polyline points="1039.5,411.5 1045.8,419.1 1053.4,425.5 1058.5,430.5"/>
<polyline points="1040.7,410.8 1047.1,418.5 1054.7,424.8 1059.8,429.9"/>
<polyline points="1053.4,403.8 1058.5,408.9"/>
<polyline points="1019.1,401.3 1025.5,406.4"/>
<polyline points="1086.5,412.7 1094.2,416.5"/>
<polyline points="1071.3,421.6 1075.1,419.1"/>
<polyline points="1012.7,430.5 1019.1,429.9 1007.6,436.9 1003.8,443.3"/>
<polyline points="1030.5,436.9 1036.9,442.0 1040.7,448.4"/>
<polyline points="1022.9,448.4 1031.8,450.9 1038.2,449.6"/>
<polyline points="1042.0,445.8 1043.3,453.4 1040.7,459.8"/>
<polyline points="1036.9,458.5 1043.3,457.3 1049.6,456.0"/>
<polyline points="1059.8,453.4 1066.2,450.9"/>
<polyline points="1048.4,467.4 1056.0,461.1"/>
<polyline points="1039.5,481.4 1044.5,484.0 1049.6,487.8"/>
<polyline points="1030.5,486.5 1031.8,494.2"/>
<polyline points="1019.1,494.2 1021.6,500.5 1024.2,501.8"/>
<polyline points="1000.0,478.9 1007.6,475.1 1010.2,471.3"/>
<polyline points="1016.5,476.4 1007.6,486.5 1003.8,498.0 1001.3,505.6"/>
<polyline points="1063.6,467.4 1062.4,473.8"/>
<polyline points="1076.4,466.2 1077.6,473.8 1076.4,482.7 1078.9,489.1"/>
<polyline points="1067.4,481.4 1068.7,489.1"/>
<polyline points="1081.4,481.4 1082.7,489.1"/>
<polyline points="1112.0,411.5 1119.6,416.5 1127.3,420.4"/>
<polyline points="1119.6,426.7 1127.3,427.4 1134.9,430.5"/>
<polyline points="1123.4,433.1 1131.1,435.6 1140.0,439.5"/>
<polyline points="1137.4,416.5 1134.9,422.9 1137.4,431.8"/>
<polyline points="1155.3,431.8 1156.5,436.9"/>
<polyline points="1119.6,457.3 1127.3,456.0 1132.3,454.7"/>
<polyline points="1126.0,448.4 1132.3,450.9 1134.9,454.7"/>
<polyline points="1117.1,461.1 1118.4,468.7 1119.6,473.8"/>
<polyline points="1127.3,466.2 1129.8,471.3"/>
<polyline points="1101.8,462.4 1106.9,463.6 1109.4,466.2"/>
<polyline points="1099.3,476.4 1101.8,475.1"/>
<polyline points="1146.3,407.6 1151.4,405.1"/>
<polyline points="1170.5,405.1 1175.6,412.7"/>
<polyline points="850.9,466.7 864.5,467.5 874.7,462.4 878.9,457.3"/>
<polyline points="847.5,479.4 850.9,484.5"/>
<polyline points="876.3,487.9 867.9,489.6 862.8,494.7 859.4,508.2 856.0,521.8 852.6,530.3"/>
<polyline points="897.6,467.5 889.9,472.6 884.8,484.5 883.1,491.3 886.5,501.4 888.2,515.0 889.9,528.6"/>
<polyline points="896.7,487.9 891.6,494.7"/>
<polyline points="908.6,460.7 913.7,467.5 920.5,470.9 922.2,460.7 923.9,453.9"/>
<polyline points="920.5,470.9 922.2,481.1 927.2,489.6 932.3,499.7 935.7,511.6 935.7,521.8"/>
<polyline points="903.5,491.3 906.9,499.7 908.6,511.6 910.3,521.8 912.0,532.0"/>
<polyline points="935.7,450.5 934.0,462.4 937.4,476.0 940.8,487.9 943.4,494.7 939.1,503.1"/>
<polyline points="957.8,464.1 961.2,474.3 968.0,482.8 971.4,491.3 973.1,501.4"/>
<polyline points="952.7,499.7 959.5,503.1 966.3,511.6"/>
<polyline points="976.5,484.5 981.5,493.0"/>
<polyline points="1010.4,470.9 1007.0,479.4 998.5,482.8"/>
<polyline points="1022.3,472.6 1015.5,479.4 1010.4,487.9 1005.3,499.7 1001.9,504.8"/>
<polyline points="1017.2,493.0 1022.3,499.7"/>
<polyline points="1030.7,486.2 1032.4,494.7"/>
<polyline points="1020.6,447.1 1030.7,448.8 1039.2,452.2"/>
<polyline points="1029.0,435.3 1037.5,442.1 1040.9,448.8 1039.2,457.3"/>
<polyline points="1057.9,452.2 1064.7,453.9 1054.5,462.4 1047.7,469.2 1042.6,476.0"/>
<polyline points="1040.9,479.4 1049.4,484.5"/>
<polyline points="1069.8,464.1 1073.2,470.9"/>
<polyline points="1078.2,482.8 1079.9,487.9"/>
<polyline points="1068.1,482.8 1069.8,487.9"/>
<polyline points="1054.5,486.2 1059.6,482.8"/>
<polyline points="908.6,423.4 918.8,426.8 930.6,425.1 939.1,421.7"/>
<polyline points="945.9,425.1 949.3,431.9 957.8,430.2"/>
<polyline points="1012.1,428.5 1003.6,433.6 991.7,438.7"/>
<polyline points="895.0,430.2 905.2,431.9"/>
<polyline points="1124.7,381.9 1129.4,387.5 1134.1,394.1 1137.9,398.8"/>
<polyline points="1125.7,381.4 1130.4,387.0 1135.0,393.6 1138.8,398.3"/>
<polyline points="1139.7,383.8 1144.4,385.2 1150.1,387.5"/>
<polyline points="1139.7,388.0 1144.4,388.9 1149.1,390.3"/>
<polyline points="1155.7,387.0 1159.4,387.5 1162.3,389.9"/>
<polyline points="1141.6,392.2 1142.1,396.9"/>
<polyline points="1126.6,397.8 1131.3,399.7 1135.0,401.6"/>
<polyline points="1166.0,366.9 1170.7,371.6 1174.4,375.3 1179.1,377.2 1181.0,383.8 1182.9,391.3 1184.8,396.0"/>
<polyline points="1170.7,390.3 1174.4,396.0 1178.2,400.6 1182.0,402.5"/>
<polyline points="1166.0,405.3 1170.7,410.0 1174.4,414.7"/>
<polyline points="1081.6,394.1 1082.5,398.8 1084.4,402.5 1091.0,406.3 1094.7,407.2"/>
<polyline points="1085.3,412.8 1090.0,415.7 1094.7,416.6"/>
<polyline points="1112.5,411.9 1118.2,415.7 1121.9,418.5 1127.5,417.5"/>
<polyline points="1075.0,418.5 1071.3,422.2"/>
<polyline points="1091.9,379.1 1095.6,377.2"/>
<polyline points="1091.0,392.7 1095.6,394.1"/>
<polyline points="1133.2,402.5 1134.1,406.3"/>
<polyline points="1136.9,402.1 1137.4,404.9"/>
<polyline points="1147.2,407.2 1145.4,410.0"/>
<polyline points="1176.3,408.2 1179.1,410.0"/>
<polyline points="1120.0,369.7 1124.7,365.0"/>
<polyline points="1133.2,370.6 1137.9,367.8"/>
<polyline points="1027.3,195.7 1034.9,193.2"/>
<polyline points="1045.7,190.0 1040.0,194.5"/>
<polyline points="989.1,216.1 996.7,218.6 1004.4,222.4"/>
<polyline points="987.8,222.4 995.4,226.3"/>
<polyline points="971.3,230.1 977.6,227.5 981.4,231.4"/>
<polyline points="1057.8,211.0 1061.6,214.8 1069.3,211.0"/>
<polyline points="1075.6,218.6 1080.7,221.2"/>
<polyline points="1101.1,226.3 1108.7,230.1"/>
<polyline points="1098.5,236.4 1098.5,244.1 1096.0,251.7"/>
<polyline points="1064.2,256.8 1068.0,260.6"/>
<polyline points="1085.2,269.5 1088.3,274.6"/>
<polyline points="1009.4,249.2 1004.4,254.3"/>
<polyline points="978.9,267.0 984.0,261.9"/>
<polyline points="956.0,244.1 959.8,249.2"/>
<polyline points="938.2,255.5 943.3,251.7"/>
<polyline points="1111.2,214.8 1116.3,219.9"/>
<polyline points="1088.3,193.2 1090.9,200.8 1094.7,205.9"/>
<polyline points="1069.3,186.8 1071.2,193.2"/>
<polyline points="949.1,272.6 956.7,270.1"/>
<polyline points="974.5,284.1 979.6,290.5"/>
<polyline points="998.7,318.4 1005.1,326.1"/>
<polyline points="1010.2,331.2 1012.7,338.8"/>
<polyline points="956.7,336.3 961.8,341.4"/>
<polyline points="978.4,341.4 982.2,346.4"/>
<polyline points="931.3,361.7 936.4,366.8"/>
<polyline points="914.7,318.4 919.8,324.8"/>
<polyline points="891.8,318.4 895.6,323.5"/>
<polyline points="1016.5,277.7 1022.9,282.8"/>
<polyline points="1063.6,270.1 1068.7,265.0"/>
<polyline points="1084.0,298.1 1091.6,296.8"/>
<polyline points="1086.5,307.0 1094.2,305.7"/>
<polyline points="1076.3,341.4 1084.0,343.9"/>
<polyline points="1084.0,354.1 1091.6,352.8"/>
<polyline points="1089.1,369.4 1096.7,366.8"/>
<polyline points="1010.2,346.4 1016.5,352.8"/>
<polyline points="1038.2,336.3 1040.7,343.9"/>
<polyline points="868.2,451.3 875.8,448.7"/>
<polyline points="861.8,476.7 868.2,474.2"/>
<polyline points="911.4,448.7 916.5,453.8"/>
<polyline points="944.5,469.1 947.1,476.7 950.9,484.4"/>
<polyline points="952.2,458.9 957.3,464.0"/>
<polyline points="970.0,461.4 972.5,469.1"/>
<polyline points="999.3,451.3 1003.1,458.9"/>
<polyline points="1008.2,456.4 1013.3,461.4"/>
<polyline points="1020.9,456.4 1026.0,462.7"/>
<polyline points="1028.5,418.2 1033.6,424.5"/>
<polyline points="1020.9,391.5 1026.0,387.6"/>
<polyline points="999.3,418.2 1005.6,422.0"/>
<polyline points="1012.0,411.8 1017.1,418.2"/>
<polyline points="1064.2,451.3 1068.0,456.4"/>
<polyline points="1054.0,469.1 1059.1,474.2"/>
<polyline points="995.4,492.0 1000.5,494.5"/>
<polyline points="954.7,489.4 958.5,494.5"/>
<polyline points="908.9,489.4 912.7,494.5"/>
<polyline points="872.0,498.4 877.1,494.5"/>
</g>
<g fill="none" stroke="#76858e" stroke-width=".55" stroke-linecap="round" stroke-linejoin="round">
<polyline points="1001.8,204.6 1012.0,213.5 1013.9,221.2 1012.0,231.4"/>
<polyline points="1046.3,171.5 1034.9,184.3 1026.0,195.7 1018.4,208.4 1012.6,214.2"/>
<polyline points="1046.3,188.7 1037.4,192.5 1031.1,191.9"/>
<polyline points="1037.4,192.5 1043.8,197.0"/>
<polyline points="1034.9,198.3 1027.3,201.4"/>
<polyline points="1038.1,202.7 1028.5,205.9 1026.0,204.6"/>
<polyline points="1019.6,209.7 1028.5,214.8"/>
<polyline points="992.3,219.9 1001.8,223.7 1009.4,225.0"/>
<polyline points="998.0,216.1 1008.2,221.2"/>
<polyline points="994.2,226.3 1001.8,228.2"/>
<polyline points="966.2,228.8 971.3,233.9 978.9,230.1"/>
<polyline points="978.9,223.7 985.3,232.6"/>
<polyline points="964.9,241.5 972.5,236.4 976.4,231.4"/>
<polyline points="993.5,235.8 1001.8,237.7 1008.2,234.5 1010.7,231.4"/>
<polyline points="981.4,244.1 989.1,242.8 1000.5,241.5 1006.9,240.9"/>
<polyline points="973.8,258.7 981.4,251.7 984.0,246.6"/>
<polyline points="1050.2,170.3 1054.6,177.9 1055.3,190.6"/>
<polyline points="1045.7,203.4 1045.1,211.0 1047.6,213.5"/>
<polyline points="1055.3,202.1 1052.7,208.4 1048.9,212.3"/>
<polyline points="1061.0,195.7 1061.6,202.1 1065.4,208.4 1064.2,214.8"/>
<polyline points="1070.5,209.7 1065.4,212.3"/>
<polyline points="1078.2,216.1 1071.8,221.2 1074.3,225.0"/>
<polyline points="1043.8,240.3 1048.9,238.4"/>
<polyline points="1078.2,231.4 1077.5,244.1 1075.6,256.8 1071.8,269.5 1070.5,275.0"/>
<polyline points="1092.2,223.1 1103.6,228.2 1115.1,231.4 1116.3,226.3"/>
<polyline points="1116.3,236.4 1124.0,244.1 1132.9,246.6 1135.4,251.7"/>
<polyline points="1121.4,214.8 1129.1,216.1 1136.7,213.5"/>
<polyline points="990.4,265.1 996.7,255.5"/>
<polyline points="962.4,275.0 968.7,270.2"/>
<polyline points="1043.8,259.4 1052.7,260.6 1060.3,263.2"/>
<polyline points="1051.4,264.4 1057.8,268.3"/>
<polyline points="1075.6,274.6 1080.7,269.5"/>
<polyline points="1057.2,231.4 1064.2,234.5"/>
<polyline points="1100.0,226.3 1110.2,230.1 1116.5,231.4 1115.3,225.0"/>
<polyline points="1117.8,236.4 1125.5,244.1 1133.1,246.6 1134.4,251.7 1130.5,256.8"/>
<polyline points="1131.8,270.8 1138.2,263.2"/>
<polyline points="1147.1,267.0 1148.4,275.0"/>
<polyline points="1171.3,269.5 1175.1,267.0"/>
<polyline points="968.2,269.5 961.8,275.2 954.2,281.5 946.5,285.4 938.9,284.1"/>
<polyline points="984.7,277.7 984.1,285.4 986.0,293.0 991.1,299.4 998.7,303.2 1007.6,304.5"/>
<polyline points="1003.8,275.8 1008.9,281.5 1011.4,289.2 1016.5,294.3 1025.4,295.5"/>
<polyline points="898.2,312.7 904.5,315.9 907.1,322.3 907.7,331.2"/>
<polyline points="969.4,328.6 968.8,338.8 965.6,346.4"/>
<polyline points="991.1,337.5 993.6,342.6"/>
<polyline points="1031.8,349.0 1030.5,356.6 1034.3,364.3 1039.4,370.6"/>
<polyline points="1022.9,354.1 1012.7,360.4 1005.1,366.8"/>
<polyline points="1025.4,364.3 1024.2,371.9"/>
<polyline points="1049.6,276.5 1053.4,272.6 1058.5,275.2 1054.7,290.5 1050.9,300.6"/>
<polyline points="1081.4,268.8 1076.3,277.7 1070.0,285.4"/>
<polyline points="1089.1,275.2 1100.0,272.6"/>
<polyline points="1092.9,319.7 1100.0,318.4"/>
<polyline points="1094.2,336.3 1100.0,337.5"/>
<polyline points="900.7,370.6 902.0,375.7"/>
<polyline points="1098.0,310.8 1100.0,309.5"/>
<polyline points="1089.3,274.5 1098.2,272.0 1107.1,272.6 1113.4,277.7 1116.0,284.1"/>
<polyline points="1124.9,273.9 1131.3,272.6 1136.4,267.5"/>
<polyline points="1131.3,272.6 1130.0,280.3"/>
<polyline points="1154.8,279.6 1172.0,272.0"/>
<polyline points="1156.1,280.9 1172.6,273.3"/>
<polyline points="1159.3,286.6 1166.9,291.7 1175.8,293.6 1182.2,290.5"/>
<polyline points="1135.1,295.5 1132.5,305.7 1126.2,310.8"/>
<polyline points="1132.5,305.7 1136.4,313.4 1138.9,319.7"/>
<polyline points="1141.4,298.1 1144.6,305.7 1145.3,315.9 1147.8,321.0"/>
<polyline points="1098.2,309.5 1096.9,317.2 1091.8,321.0"/>
<polyline points="1099.5,313.4 1105.8,315.9 1110.9,313.4"/>
<polyline points="1187.3,313.4 1194.9,308.3 1207.6,305.7"/>
<polyline points="1196.2,324.8 1202.5,324.2 1208.9,322.3"/>
<polyline points="1192.3,329.9 1200.0,331.2 1206.3,329.9"/>
<polyline points="1166.9,338.2 1174.5,336.3 1180.9,337.5"/>
<polyline points="1094.4,336.3 1103.3,338.2 1108.4,340.1"/>
<polyline points="1128.7,323.5 1136.4,331.2 1142.7,337.5 1149.1,336.3"/>
<polyline points="1123.6,331.2 1127.4,338.8 1131.3,346.4"/>
<polyline points="1124.9,330.5 1128.7,338.2 1132.5,345.8"/>
<polyline points="1121.1,318.4 1126.2,321.0"/>
<polyline points="1136.4,341.4 1132.5,349.0 1136.4,354.1"/>
<polyline points="1161.8,351.5 1156.7,356.6 1154.2,361.7"/>
<polyline points="1172.0,352.8 1169.4,357.9"/>
<polyline points="1174.5,349.0 1182.2,351.5 1187.3,356.6 1192.3,360.4"/>
<polyline points="1174.5,363.0 1184.7,363.0"/>
<polyline points="1165.6,361.7 1169.4,369.4 1174.5,375.7 1175.8,379.5"/>
<polyline points="1126.2,360.4 1123.6,366.8 1121.1,370.6"/>
<polyline points="1136.4,366.8 1132.5,371.9"/>
<polyline points="1210.2,336.3 1221.6,336.3"/>
<polyline points="1224.2,304.5 1229.3,303.2 1228.0,309.5"/>
<polyline points="1113.4,352.8 1116.0,360.4"/>
<polyline points="902.5,381.3 908.9,387.6 916.5,396.5 921.6,401.6"/>
<polyline points="903.8,380.6 910.2,387.0 917.8,395.9 922.9,401.0"/>
<polyline points="882.2,438.5 891.1,441.1 901.3,439.8 911.4,436.0 921.6,432.2"/>
<polyline points="850.4,466.5 859.3,467.8 868.2,465.3 874.5,461.4 879.6,457.0"/>
<polyline points="931.8,427.1 944.5,428.4 954.7,430.9 962.3,434.7 970.0,437.3"/>
<polyline points="944.5,415.6 947.1,422.0 948.4,428.4"/>
<polyline points="957.3,423.3 959.8,429.6 964.9,433.4"/>
<polyline points="952.2,410.5 962.3,405.5 970.0,404.2 977.6,409.3 982.7,415.6 987.8,422.0"/>
<polyline points="957.3,413.1 967.4,411.8 976.3,414.4"/>
<polyline points="973.8,405.5 978.9,409.3 982.7,413.1"/>
<polyline points="931.8,424.5 938.2,422.0"/>
<polyline points="935.6,443.6 936.9,451.3 934.4,461.4 936.9,471.6 939.4,481.8 940.7,492.0 942.0,500.0"/>
<polyline points="922.9,455.1 921.6,462.7 920.4,471.6 922.9,481.8 926.7,490.7 930.5,500.0"/>
<polyline points="907.6,461.4 911.4,466.5 919.1,470.4"/>
<polyline points="897.4,467.8 891.1,471.6 887.3,480.5 883.4,488.2 886.0,497.1"/>
<polyline points="875.8,488.2 868.2,489.4 863.1,494.5 861.8,500.0"/>
<polyline points="957.3,466.5 959.8,474.2 964.9,480.5 968.7,488.2 970.0,500.0"/>
<polyline points="962.3,451.3 970.0,455.1 980.2,451.3 992.9,446.2 1004.3,442.4 1013.3,433.4 1018.3,429.6 1022.2,430.9"/>
<polyline points="1013.3,396.5 1020.9,401.6 1027.3,408.0"/>
<polyline points="1038.7,413.1 1046.3,422.0 1054.0,430.9 1059.1,436.0"/>
<polyline points="1054.0,404.2 1059.1,410.5"/>
<polyline points="1031.1,436.0 1038.7,441.1 1043.8,447.4"/>
<polyline points="1022.2,447.4 1031.1,448.7 1038.7,451.3"/>
<polyline points="1038.7,457.6 1048.9,456.4"/>
<polyline points="1037.4,467.8 1046.3,466.5"/>
<polyline points="1057.8,460.2 1051.4,467.8"/>
<polyline points="1010.7,471.6 1004.3,476.7 996.7,480.5 992.9,483.1"/>
<polyline points="1022.2,474.2 1017.1,481.8 1010.7,488.2 1005.6,498.4"/>
<polyline points="1038.7,480.5 1046.3,485.6 1051.4,488.2"/>
<polyline points="1062.9,480.5 1056.5,485.6"/>
<polyline points="976.3,485.6 980.2,492.0 984.0,497.1"/>
<polyline points="1031.1,486.9 1032.3,494.5"/>
<polyline points="1043.8,390.2 1041.2,397.8 1040.0,402.9"/>
<polyline points="982.7,387.6 990.3,388.9"/>
<polyline points="1039.5,411.5 1045.8,419.1 1053.4,425.5 1058.5,430.5"/>
<polyline points="1040.7,410.8 1047.1,418.5 1054.7,424.8 1059.8,429.9"/>
<polyline points="1053.4,403.8 1058.5,408.9"/>
<polyline points="1019.1,401.3 1025.5,406.4"/>
<polyline points="1086.5,412.7 1094.2,416.5"/>
<polyline points="1071.3,421.6 1075.1,419.1"/>
<polyline points="1012.7,430.5 1019.1,429.9 1007.6,436.9 1003.8,443.3"/>
<polyline points="1030.5,436.9 1036.9,442.0 1040.7,448.4"/>
<polyline points="1022.9,448.4 1031.8,450.9 1038.2,449.6"/>
<polyline points="1042.0,445.8 1043.3,453.4 1040.7,459.8"/>
<polyline points="1036.9,458.5 1043.3,457.3 1049.6,456.0"/>
<polyline points="1059.8,453.4 1066.2,450.9"/>
<polyline points="1048.4,467.4 1056.0,461.1"/>
<polyline points="1039.5,481.4 1044.5,484.0 1049.6,487.8"/>
<polyline points="1030.5,486.5 1031.8,494.2"/>
<polyline points="1019.1,494.2 1021.6,500.5 1024.2,501.8"/>
<polyline points="1000.0,478.9 1007.6,475.1 1010.2,471.3"/>
<polyline points="1016.5,476.4 1007.6,486.5 1003.8,498.0 1001.3,505.6"/>
<polyline points="1063.6,467.4 1062.4,473.8"/>
<polyline points="1076.4,466.2 1077.6,473.8 1076.4,482.7 1078.9,489.1"/>
<polyline points="1067.4,481.4 1068.7,489.1"/>
<polyline points="1081.4,481.4 1082.7,489.1"/>
<polyline points="1112.0,411.5 1119.6,416.5 1127.3,420.4"/>
<polyline points="1119.6,426.7 1127.3,427.4 1134.9,430.5"/>
<polyline points="1123.4,433.1 1131.1,435.6 1140.0,439.5"/>
<polyline points="1137.4,416.5 1134.9,422.9 1137.4,431.8"/>
<polyline points="1155.3,431.8 1156.5,436.9"/>
<polyline points="1119.6,457.3 1127.3,456.0 1132.3,454.7"/>
<polyline points="1126.0,448.4 1132.3,450.9 1134.9,454.7"/>
<polyline points="1117.1,461.1 1118.4,468.7 1119.6,473.8"/>
<polyline points="1127.3,466.2 1129.8,471.3"/>
<polyline points="1101.8,462.4 1106.9,463.6 1109.4,466.2"/>
<polyline points="1099.3,476.4 1101.8,475.1"/>
<polyline points="1146.3,407.6 1151.4,405.1"/>
<polyline points="1170.5,405.1 1175.6,412.7"/>
<polyline points="850.9,466.7 864.5,467.5 874.7,462.4 878.9,457.3"/>
<polyline points="847.5,479.4 850.9,484.5"/>
<polyline points="876.3,487.9 867.9,489.6 862.8,494.7 859.4,508.2 856.0,521.8 852.6,530.3"/>
<polyline points="897.6,467.5 889.9,472.6 884.8,484.5 883.1,491.3 886.5,501.4 888.2,515.0 889.9,528.6"/>
<polyline points="896.7,487.9 891.6,494.7"/>
<polyline points="908.6,460.7 913.7,467.5 920.5,470.9 922.2,460.7 923.9,453.9"/>
<polyline points="920.5,470.9 922.2,481.1 927.2,489.6 932.3,499.7 935.7,511.6 935.7,521.8"/>
<polyline points="903.5,491.3 906.9,499.7 908.6,511.6 910.3,521.8 912.0,532.0"/>
<polyline points="935.7,450.5 934.0,462.4 937.4,476.0 940.8,487.9 943.4,494.7 939.1,503.1"/>
<polyline points="957.8,464.1 961.2,474.3 968.0,482.8 971.4,491.3 973.1,501.4"/>
<polyline points="952.7,499.7 959.5,503.1 966.3,511.6"/>
<polyline points="976.5,484.5 981.5,493.0"/>
<polyline points="1010.4,470.9 1007.0,479.4 998.5,482.8"/>
<polyline points="1022.3,472.6 1015.5,479.4 1010.4,487.9 1005.3,499.7 1001.9,504.8"/>
<polyline points="1017.2,493.0 1022.3,499.7"/>
<polyline points="1030.7,486.2 1032.4,494.7"/>
<polyline points="1020.6,447.1 1030.7,448.8 1039.2,452.2"/>
<polyline points="1029.0,435.3 1037.5,442.1 1040.9,448.8 1039.2,457.3"/>
<polyline points="1057.9,452.2 1064.7,453.9 1054.5,462.4 1047.7,469.2 1042.6,476.0"/>
<polyline points="1040.9,479.4 1049.4,484.5"/>
<polyline points="1069.8,464.1 1073.2,470.9"/>
<polyline points="1078.2,482.8 1079.9,487.9"/>
<polyline points="1068.1,482.8 1069.8,487.9"/>
<polyline points="1054.5,486.2 1059.6,482.8"/>
<polyline points="908.6,423.4 918.8,426.8 930.6,425.1 939.1,421.7"/>
<polyline points="945.9,425.1 949.3,431.9 957.8,430.2"/>
<polyline points="1012.1,428.5 1003.6,433.6 991.7,438.7"/>
<polyline points="895.0,430.2 905.2,431.9"/>
<polyline points="1124.7,381.9 1129.4,387.5 1134.1,394.1 1137.9,398.8"/>
<polyline points="1125.7,381.4 1130.4,387.0 1135.0,393.6 1138.8,398.3"/>
<polyline points="1139.7,383.8 1144.4,385.2 1150.1,387.5"/>
<polyline points="1139.7,388.0 1144.4,388.9 1149.1,390.3"/>
<polyline points="1155.7,387.0 1159.4,387.5 1162.3,389.9"/>
<polyline points="1141.6,392.2 1142.1,396.9"/>
<polyline points="1126.6,397.8 1131.3,399.7 1135.0,401.6"/>
<polyline points="1166.0,366.9 1170.7,371.6 1174.4,375.3 1179.1,377.2 1181.0,383.8 1182.9,391.3 1184.8,396.0"/>
<polyline points="1170.7,390.3 1174.4,396.0 1178.2,400.6 1182.0,402.5"/>
<polyline points="1166.0,405.3 1170.7,410.0 1174.4,414.7"/>
<polyline points="1081.6,394.1 1082.5,398.8 1084.4,402.5 1091.0,406.3 1094.7,407.2"/>
<polyline points="1085.3,412.8 1090.0,415.7 1094.7,416.6"/>
<polyline points="1112.5,411.9 1118.2,415.7 1121.9,418.5 1127.5,417.5"/>
<polyline points="1075.0,418.5 1071.3,422.2"/>
<polyline points="1091.9,379.1 1095.6,377.2"/>
<polyline points="1091.0,392.7 1095.6,394.1"/>
<polyline points="1133.2,402.5 1134.1,406.3"/>
<polyline points="1136.9,402.1 1137.4,404.9"/>
<polyline points="1147.2,407.2 1145.4,410.0"/>
<polyline points="1176.3,408.2 1179.1,410.0"/>
<polyline points="1120.0,369.7 1124.7,365.0"/>
<polyline points="1133.2,370.6 1137.9,367.8"/>
<polyline points="1027.3,195.7 1034.9,193.2"/>
<polyline points="1045.7,190.0 1040.0,194.5"/>
<polyline points="989.1,216.1 996.7,218.6 1004.4,222.4"/>
<polyline points="987.8,222.4 995.4,226.3"/>
<polyline points="971.3,230.1 977.6,227.5 981.4,231.4"/>
<polyline points="1057.8,211.0 1061.6,214.8 1069.3,211.0"/>
<polyline points="1075.6,218.6 1080.7,221.2"/>
<polyline points="1101.1,226.3 1108.7,230.1"/>
<polyline points="1098.5,236.4 1098.5,244.1 1096.0,251.7"/>
<polyline points="1064.2,256.8 1068.0,260.6"/>
<polyline points="1085.2,269.5 1088.3,274.6"/>
<polyline points="1009.4,249.2 1004.4,254.3"/>
<polyline points="978.9,267.0 984.0,261.9"/>
<polyline points="956.0,244.1 959.8,249.2"/>
<polyline points="938.2,255.5 943.3,251.7"/>
<polyline points="1111.2,214.8 1116.3,219.9"/>
<polyline points="1088.3,193.2 1090.9,200.8 1094.7,205.9"/>
<polyline points="1069.3,186.8 1071.2,193.2"/>
<polyline points="949.1,272.6 956.7,270.1"/>
<polyline points="974.5,284.1 979.6,290.5"/>
<polyline points="998.7,318.4 1005.1,326.1"/>
<polyline points="1010.2,331.2 1012.7,338.8"/>
<polyline points="956.7,336.3 961.8,341.4"/>
<polyline points="978.4,341.4 982.2,346.4"/>
<polyline points="931.3,361.7 936.4,366.8"/>
<polyline points="914.7,318.4 919.8,324.8"/>
<polyline points="891.8,318.4 895.6,323.5"/>
<polyline points="1016.5,277.7 1022.9,282.8"/>
<polyline points="1063.6,270.1 1068.7,265.0"/>
<polyline points="1084.0,298.1 1091.6,296.8"/>
<polyline points="1086.5,307.0 1094.2,305.7"/>
<polyline points="1076.3,341.4 1084.0,343.9"/>
<polyline points="1084.0,354.1 1091.6,352.8"/>
<polyline points="1089.1,369.4 1096.7,366.8"/>
<polyline points="1010.2,346.4 1016.5,352.8"/>
<polyline points="1038.2,336.3 1040.7,343.9"/>
<polyline points="868.2,451.3 875.8,448.7"/>
<polyline points="861.8,476.7 868.2,474.2"/>
<polyline points="911.4,448.7 916.5,453.8"/>
<polyline points="944.5,469.1 947.1,476.7 950.9,484.4"/>
<polyline points="952.2,458.9 957.3,464.0"/>
<polyline points="970.0,461.4 972.5,469.1"/>
<polyline points="999.3,451.3 1003.1,458.9"/>
<polyline points="1008.2,456.4 1013.3,461.4"/>
<polyline points="1020.9,456.4 1026.0,462.7"/>
<polyline points="1028.5,418.2 1033.6,424.5"/>
<polyline points="1020.9,391.5 1026.0,387.6"/>
<polyline points="999.3,418.2 1005.6,422.0"/>
<polyline points="1012.0,411.8 1017.1,418.2"/>
<polyline points="1064.2,451.3 1068.0,456.4"/>
<polyline points="1054.0,469.1 1059.1,474.2"/>
<polyline points="995.4,492.0 1000.5,494.5"/>
<polyline points="954.7,489.4 958.5,494.5"/>
<polyline points="908.9,489.4 912.7,494.5"/>
<polyline points="872.0,498.4 877.1,494.5"/>
</g>
<g opacity=".8">
<text x="909.5" y="279.5" font-size="13.5" text-anchor="middle" fill="#555">Pontinha</text>
</g>
</g>
<polyline points="845.8,496.3 843.3,487.9 844.1,477.7 847.5,467.5 854.3,457.3 862.8,448.8 873.0,442.1 884.8,435.3 888.2,430.2 884.7,420.5 883.0,408.6 888.0,396.7 893.1,384.8 895.7,373.0 894.8,361.1 890.6,350.9 884.7,340.7 877.9,333.9 882.1,328.8 884.7,322.1 887.2,315.3 893.1,310.2 891.4,310.0 905.0,304.4 911.8,299.3 918.6,294.2 910.1,292.5 909.3,289.1 915.2,285.7 918.6,273.9 922.0,265.4 928.8,258.6 931.3,253.5 938.9,250.1 945.7,245.0 954.2,236.5 962.7,229.7 972.9,224.7 981.4,223.0 988.1,217.9 994.9,212.8 1001.7,204.3 1008.5,200.9 1015.3,197.5 1022.1,189.0 1028.9,182.2 1035.7,177.1 1042.4,171.2 1049.2,167.8 1054.3,164.9 1061.1,167.0 1067.9,171.2 1069.6,178.8 1068.7,183.9 1072.1,190.7 1079.8,193.3 1088.3,199.2 1096.7,204.3 1105.2,206.0 1115.4,207.7 1124.8,211.9 1138.4,213.6 1148.6,217.0 1158.8,219.6 1165.6,223.0 1172.3,229.7 1177.4,236.5 1184.2,242.5 1204.6,241.6 1202.9,226.3 1201.2,209.4 1199.5,189.0 1201.2,175.4 1202.9,163.6 1211.4,161.5 1219.8,161.0 1226.6,162.7 1229.2,168.7 1230.9,177.1 1230.0,187.3 1227.5,195.8 1228.3,207.7 1228.7,221.3 1228.0,234.8 1227.5,251.8 1226.6,262.0" fill="none" stroke="#000" stroke-width="2.5" stroke-linejoin="round" stroke-linecap="round"/>
<polyline points="1226.6,262.0 1225.8,273.9 1219.8,274.7 1218.1,285.7 1225.8,284.9 1224.9,295.9 1224.8,300.0 1222.3,313.6 1218.9,328.8 1214.6,344.1 1212.1,352.6 1208.7,364.5 1203.6,376.3 1198.5,388.2 1193.4,400.0 1188.3,412.7 1187.1,422.9 1178.2,430.5 1175.6,434.4 1169.3,435.6 1159.1,445.8 1150.2,456.0 1141.3,466.2 1133.6,475.1 1129.8,481.4 1120.9,489.1 1114.5,492.9 1110.7,495.4 1104.4,499.3 1089.1,501.8 1078.9,503.1 1068.7,506.9 1063.6,504.4 1053.4,501.8 1043.3,505.6 1042.0,509.4 1035.6,510.7 1034.1,515.0 1017.2,521.0 1003.6,523.5 990.0,528.6 984.1,530.3 983.2,526.0 973.1,528.6 959.5,532.0 947.6,534.5 935.7,537.1 922.2,540.5 908.6,543.9 895.0,547.2 881.4,550.6 871.3,554.0 861.1,554.0 856.0,548.9 849.2,550.6 842.4,551.5 839.0,549.8 827.1,542.2 823.8,538.8 829.7,533.7 831.4,525.2 833.1,515.0 834.8,506.5 840.7,499.7 845.8,496.3" fill="none" stroke="#06121c" stroke-width="1.5" stroke-linejoin="round"/>
<text x="259.500" y="686" font-size="19.500" fill="#fff" stroke="#6f8f9f" stroke-width=".5" paint-order="stroke" letter-spacing="-.55" opacity=".98">Google</text>
<text x="324" y="684.500" font-size="13" fill="#fff" letter-spacing=".75" word-spacing="4.5" opacity=".95">City as a Platform</text>
</svg>
<div class="mbtn" style="left:5px;top:7px;width:38px;height:29px"><i style="left:10px;top:5.5px"><svg viewBox="0 0 24 24"><path d="M15.41 7.41L14 6l-6 6 6 6 1.41-1.410L10.830 12z" fill="#222"/></svg></i></div>
<div class="mbtn" style="left:5px;top:41px;width:38px;height:144px">
<i style="left:10px;top:5.5px"><svg viewBox="0 0 24 24"><path d="M12 2C8.140 2 5 5.140 5 9c0 5.250 7 13 7 13s7-7.750 7-13c0-3.860-3.140-7-7-7zm4 8h-3v3h-2v-3H8V8h3V5h2v3h3v2z" fill="#222"/></svg></i>
<i style="left:10px;top:34.25px"><svg viewBox="0 0 24 24"><path d="M3 17.25V21h3.75L17.81 9.94l-3.75-3.75L3 17.25zM20.71 7.04a1 1 0 000-1.41l-2.34-2.34a1 1 0 00-1.41 0l-1.83 1.83 3.75 3.75 1.83-1.830z" fill="#222"/></svg></i>
<b style="top:28.75px"></b>
<i style="left:10px;top:63.0px"><svg viewBox="0 0 24 24"><circle cx="12" cy="12" r="9" fill="none" stroke="#222" stroke-width="2"/><g fill="#222"><circle cx="10" cy="10" r="1"/><circle cx="14" cy="10" r="1"/><circle cx="10" cy="14" r="1"/><circle cx="14" cy="14" r="1"/><circle cx="12" cy="7" r=".6"/><circle cx="12" cy="17" r=".6"/><circle cx="7" cy="12" r=".6"/><circle cx="17" cy="12" r=".6"/><circle cx="7.500" cy="9.500" r=".5"/><circle cx="16.500" cy="9.500" r=".5"/><circle cx="7.500" cy="14.500" r=".5"/><circle cx="16.500" cy="14.500" r=".5"/></g></svg></i>
<b style="top:57.5px"></b>
<i style="left:10px;top:91.75px"><svg viewBox="0 0 24 24"><path d="M18 4H6v2l6.500 6L6 18v2h12v-3h-7l5-5-5-5h7z" fill="#222"/></svg></i>
<b style="top:86.25px"></b>
<i style="left:10px;top:120.5px"><svg viewBox="0 0 24 24"><path d="M19 8H5c-1.660 0-3 1.340-3 3v6h4v4h12v-4h4v-6c0-1.660-1.340-3-3-3zm-3 11H8v-5h8v5zm3-7c-.550 0-1-.450-1-1s.450-1 1-1 1 .450 1 1-.450 1-1 1zm-1-9H6v4h12V3z" fill="#222"/></svg></i>
<b style="top:115.0px"></b>
</div>
<div class="mbtn" style="left:1620px;top:300px;width:40px;height:40px;border-radius:2px"><svg viewBox="0 0 40 40" style="position:absolute;left:0;top:0;width:40px;height:40px"><path d="M14.500 16.200L17.300 15.200h5.400l2.800 1 2.200 9.300-1.600.600-1.500-4.200v12.600h-4l-.600-7-.600 7h-4V21.900l-1.500 4.200-1.600-.600z" fill="#f7b618" stroke="#c98a12" stroke-width=".6" stroke-linejoin="round"/><path d="M17.300 15.200h5.400L20 20.400z" fill="#e8901a"/><circle cx="19.700" cy="10.400" r="5.300" fill="#f9bd1e" stroke="#c98a12" stroke-width=".6"/></svg></div>
<div class="mbtn" style="left:1627px;top:533px;width:38px;height:86px"><i style="left:10px;top:5.500px"><svg viewBox="0 0 24 24"><path d="M20.500 3l-.160.030L15 5.100 9 3 3.360 4.900c-.210.070-.360.250-.360.480V20.500c0 .280.220.5.500.5l.160-.030L9 18.900l6 2.100 5.640-1.900c.210-.070.360-.250.360-.480V3.500c0-.280-.220-.5-.5-.5zM15 19l-6-2.110V5l6 2.110V19z" fill="#444"/></svg></i><b style="top:28.7px"></b><b style="top:57.4px"></b><span class="zp" style="top:28.7px">+</span><span class="zp" style="top:57.4px">−</span></div>
<div class="attr" style="left:1171.500px;width:93.500px">Atalhos do teclado</div><div class="attr" style="left:1268px;width:211px">Dados do mapa ©2022 Inst. Geogr. Nacional</div><div class="attr" style="left:1483px;width:104.500px;text-align:left;padding-left:5px">2 km <u></u></div><div class="attr" style="left:1591.500px;width:77.500px">Termos de Uso</div>
</div>

<div id="tbl">
<div class="th" style="left:25px"><svg class="fi" viewBox="0 0 14 10"><path d="M0 .2h14v1.7H0zM2.4 4.1h9.2v1.7H2.4zM5.4 8h3.2v1.7H5.4z" fill="#222"/></svg><span style="letter-spacing:.12px">cod_sig</span></div>
<div class="th" style="left:117.7px"><svg class="fi" viewBox="0 0 14 10"><path d="M0 .2h14v1.7H0zM2.4 4.1h9.2v1.7H2.4zM5.4 8h3.2v1.7H5.4z" fill="#222"/></svg><span>idtipo</span></div>
<div class="th" style="left:202.7px"><svg class="fi" viewBox="0 0 14 10"><path d="M0 .2h14v1.7H0zM2.4 4.1h9.2v1.7H2.4zM5.4 8h3.2v1.7H5.4z" fill="#222"/></svg><span>infopdm</span></div>
<div class="th" style="left:485.5px"><svg class="fi" viewBox="0 0 14 10"><path d="M0 .2h14v1.7H0zM2.4 4.1h9.2v1.7H2.4zM5.4 8h3.2v1.7H5.4z" fill="#222"/></svg><span>nome</span></div>
<div class="th" style="left:768.7px"><svg class="fi" viewBox="0 0 14 10"><path d="M0 .2h14v1.7H0zM2.4 4.1h9.2v1.7H2.4zM5.4 8h3.2v1.7H5.4z" fill="#222"/></svg><span>vulnerabilidade</span></div>
<div class="th" style="left:915.7px"><svg class="fi" viewBox="0 0 14 10"><path d="M0 .2h14v1.7H0zM2.4 4.1h9.2v1.7H2.4zM5.4 8h3.2v1.7H5.4z" fill="#222"/></svg><span>legislacao</span></div>
<div class="th" style="left:1536px"><svg class="fi" viewBox="0 0 14 10"><path d="M0 .2h14v1.7H0zM2.4 4.1h9.2v1.7H2.4zM5.4 8h3.2v1.7H5.4z" fill="#222"/></svg><span>activo</span></div>
<div class="th" style="left:1623px"><svg class="fi" viewBox="0 0 14 10"><path d="M0 .2h14v1.7H0zM2.4 4.1h9.2v1.7H2.4zM5.4 8h3.2v1.7H5.4z" fill="#222"/></svg><span>area_m2</span></div>
<div class="th" style="left:1725px"><svg class="fi" viewBox="0 0 14 10"><path d="M0 .2h14v1.7H0zM2.4 4.1h9.2v1.7H2.4zM5.4 8h3.2v1.7H5.4z" fill="#222"/></svg><span>dtm_upd</span></div>
<svg class="dots" viewBox="0 0 4 14"><circle cx="2" cy="2" r="1.25" fill="#222"/><circle cx="2" cy="7" r="1.25" fill="#222"/><circle cx="2" cy="12" r="1.25" fill="#222"/></svg>
<svg class="cls" viewBox="0 0 12 12"><path d="M1 1l10 10M11 1L1 11" stroke="#222" stroke-width="1.5" fill="none"/></svg>
<div id="tb">
<div class="tr" style="top:0.0px"><div class="td" style="left:0px;width:92.7px">22</div><div class="td" style="left:92.7px;width:84.99999999999999px">5047</div><div class="td" style="left:177.7px;width:282.8px">Vulnerabilidade às Inundações - Elevada</div><div class="td" style="left:460.5px;width:283.20000000000005px">Vulnerabilidade às Inundações - Elevada</div><div class="td" style="left:743.7px;width:147.0px">elevada</div><div class="td" style="left:890.7px;width:620.3px">DL 468/71 de 05/11; DL 46/94 de 22/02; DL 302/90 de 26/09, rectificado no DR,I Série, nº 277 de 30/11/90</div><div class="td" style="left:1511px;width:87px">S</div><div class="td r" style="left:1598px;width:102px">11011.73</div><div class="td" style="left:1700px;width:103px">2012-04-29</div><div class="td" style="left:1803px;width:81px"><svg class="pen" viewBox="0 0 24 24"><path d="M3 17.25V21h3.75L17.81 9.94l-3.75-3.75L3 17.25zM20.71 7.04a1 1 0 000-1.41l-2.34-2.34a1 1 0 00-1.41 0l-1.83 1.83 3.75 3.75 1.83-1.83z" fill="#222"/></svg><svg class="eye" viewBox="0 0 24 24"><path d="M12 4.5C7 4.5 2.73 7.61 1 12c1.73 4.39 6 7.5 11 7.5s9.270-3.110 11-7.500c-1.730-4.390-6-7.500-11-7.500zM12 17c-2.760 0-5-2.240-5-5s2.240-5 5-5 5 2.240 5 5-2.240 5-5 5zm0-8c-1.660 0-3 1.340-3 3s1.340 3 3 3 3-1.340 3-3-1.340-3-3-3z" fill="#222"/></svg></div></div>
<div class="tr" style="top:32.33px"><div class="td" style="left:0px;width:92.7px">23</div><div class="td" style="left:92.7px;width:84.99999999999999px">5047</div><div class="td" style="left:177.7px;width:282.8px">Vulnerabilidade às Inundações - Elevada</div><div class="td" style="left:460.5px;width:283.20000000000005px">Vulnerabilidade às Inundações - Elevada</div><div class="td" style="left:743.7px;width:147.0px">elevada</div><div class="td" style="left:890.7px;width:620.3px">DL 468/71 de 05/11; DL 46/94 de 22/02; DL 302/90 de 26/09, rectificado no DR,I Série, nº 277 de 30/11/90</div><div class="td" style="left:1511px;width:87px">S</div><div class="td r" style="left:1598px;width:102px">10500.69</div><div class="td" style="left:1700px;width:103px">2012-04-29</div><div class="td" style="left:1803px;width:81px"><svg class="pen" viewBox="0 0 24 24"><path d="M3 17.25V21h3.75L17.81 9.94l-3.75-3.75L3 17.25zM20.71 7.04a1 1 0 000-1.41l-2.34-2.34a1 1 0 00-1.41 0l-1.83 1.83 3.75 3.75 1.83-1.83z" fill="#222"/></svg><svg class="eye" viewBox="0 0 24 24"><path d="M12 4.5C7 4.5 2.73 7.61 1 12c1.73 4.39 6 7.5 11 7.5s9.270-3.110 11-7.500c-1.730-4.390-6-7.500-11-7.500zM12 17c-2.760 0-5-2.240-5-5s2.240-5 5-5 5 2.240 5 5-2.240 5-5 5zm0-8c-1.660 0-3 1.340-3 3s1.340 3 3 3 3-1.340 3-3-1.340-3-3-3z" fill="#222"/></svg></div></div>
<div class="tr" style="top:64.66px"><div class="td" style="left:0px;width:92.7px">24</div><div class="td" style="left:92.7px;width:84.99999999999999px">5047</div><div class="td" style="left:177.7px;width:282.8px">Vulnerabilidade às Inundações - Elevada</div><div class="td" style="left:460.5px;width:283.20000000000005px">Vulnerabilidade às Inundações - Elevada</div><div class="td" style="left:743.7px;width:147.0px">elevada</div><div class="td" style="left:890.7px;width:620.3px">DL 468/71 de 05/11; DL 46/94 de 22/02; DL 302/90 de 26/09, rectificado no DR,I Série, nº 277 de 30/11/90</div><div class="td" style="left:1511px;width:87px">S</div><div class="td r" style="left:1598px;width:102px">10140.17</div><div class="td" style="left:1700px;width:103px">2012-04-29</div><div class="td" style="left:1803px;width:81px"><svg class="pen" viewBox="0 0 24 24"><path d="M3 17.25V21h3.75L17.81 9.94l-3.75-3.75L3 17.25zM20.71 7.04a1 1 0 000-1.41l-2.34-2.34a1 1 0 00-1.41 0l-1.83 1.83 3.75 3.75 1.83-1.83z" fill="#222"/></svg><svg class="eye" viewBox="0 0 24 24"><path d="M12 4.5C7 4.5 2.73 7.61 1 12c1.73 4.39 6 7.5 11 7.5s9.270-3.110 11-7.500c-1.730-4.390-6-7.500-11-7.500zM12 17c-2.760 0-5-2.240-5-5s2.240-5 5-5 5 2.240 5 5-2.240 5-5 5zm0-8c-1.660 0-3 1.340-3 3s1.340 3 3 3 3-1.340 3-3-1.340-3-3-3z" fill="#222"/></svg></div></div>
<div class="tr" style="top:96.99px"><div class="td" style="left:0px;width:92.7px">25</div><div class="td" style="left:92.7px;width:84.99999999999999px">5047</div><div class="td" style="left:177.7px;width:282.8px">Vulnerabilidade às Inundações - Elevada</div><div class="td" style="left:460.5px;width:283.20000000000005px">Vulnerabilidade às Inundações - Elevada</div><div class="td" style="left:743.7px;width:147.0px">elevada</div><div class="td" style="left:890.7px;width:620.3px">DL 468/71 de 05/11; DL 46/94 de 22/02; DL 302/90 de 26/09, rectificado no DR,I Série, nº 277 de 30/11/90</div><div class="td" style="left:1511px;width:87px">S</div><div class="td r" style="left:1598px;width:102px">10112.86</div><div class="td" style="left:1700px;width:103px">2012-04-29</div><div class="td" style="left:1803px;width:81px"><svg class="pen" viewBox="0 0 24 24"><path d="M3 17.25V21h3.75L17.81 9.94l-3.75-3.75L3 17.25zM20.71 7.04a1 1 0 000-1.41l-2.34-2.34a1 1 0 00-1.41 0l-1.83 1.83 3.75 3.75 1.83-1.83z" fill="#222"/></svg><svg class="eye" viewBox="0 0 24 24"><path d="M12 4.5C7 4.5 2.73 7.61 1 12c1.73 4.39 6 7.5 11 7.5s9.270-3.110 11-7.500c-1.730-4.390-6-7.500-11-7.500zM12 17c-2.760 0-5-2.240-5-5s2.240-5 5-5 5 2.240 5 5-2.240 5-5 5zm0-8c-1.660 0-3 1.340-3 3s1.340 3 3 3 3-1.340 3-3-1.340-3-3-3z" fill="#222"/></svg></div></div>
<div class="tr" style="top:129.32px"><div class="td" style="left:0px;width:92.7px">26</div><div class="td" style="left:92.7px;width:84.99999999999999px">5047</div><div class="td" style="left:177.7px;width:282.8px">Vulnerabilidade às Inundações - Elevada</div><div class="td" style="left:460.5px;width:283.20000000000005px">Vulnerabilidade às Inundações - Elevada</div><div class="td" style="left:743.7px;width:147.0px">elevada</div><div class="td" style="left:890.7px;width:620.3px">DL 468/71 de 05/11; DL 46/94 de 22/02; DL 302/90 de 26/09, rectificado no DR,I Série, nº 277 de 30/11/90</div><div class="td" style="left:1511px;width:87px">S</div><div class="td r" style="left:1598px;width:102px">10059.66</div><div class="td" style="left:1700px;width:103px">2012-04-29</div><div class="td" style="left:1803px;width:81px"><svg class="pen" viewBox="0 0 24 24"><path d="M3 17.25V21h3.75L17.81 9.94l-3.75-3.75L3 17.25zM20.71 7.04a1 1 0 000-1.41l-2.34-2.34a1 1 0 00-1.41 0l-1.83 1.83 3.75 3.75 1.83-1.83z" fill="#222"/></svg><svg class="eye" viewBox="0 0 24 24"><path d="M12 4.5C7 4.5 2.73 7.61 1 12c1.73 4.39 6 7.5 11 7.5s9.270-3.110 11-7.500c-1.730-4.390-6-7.500-11-7.500zM12 17c-2.760 0-5-2.240-5-5s2.240-5 5-5 5 2.240 5 5-2.240 5-5 5zm0-8c-1.660 0-3 1.340-3 3s1.340 3 3 3 3-1.340 3-3-1.340-3-3-3z" fill="#222"/></svg></div></div>
</div>
<div id="tsb"><i></i></div>
<div id="info">A mostrar 1 até 25 de 78 Vulnerabilidade à inundação [PDM]</div>
<div id="pg"><span>«</span><span class="on">1</span><span>2</span><span>3</span><span>4</span><span>»</span></div>
<div class="cnr" style="left:0"></div><div class="cnr r" style="right:0"></div>
</div>
</body>
</html>
